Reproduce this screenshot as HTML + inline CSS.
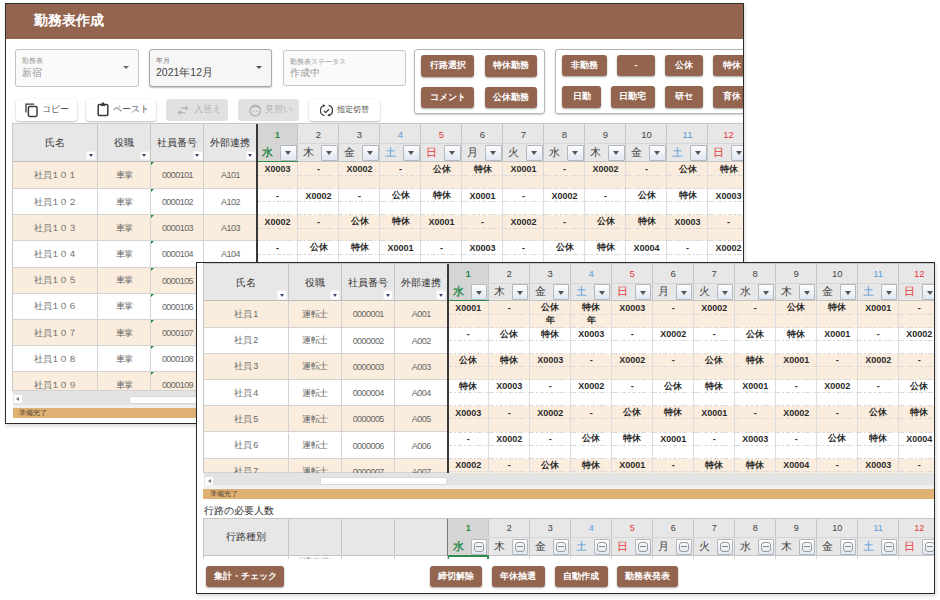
<!DOCTYPE html><html><head><meta charset="utf-8"><style>
html,body{margin:0;padding:0;background:#fff;width:940px;height:600px;overflow:hidden;font-family:"Liberation Sans",sans-serif;}
div{position:absolute;box-sizing:border-box;}
.tri{width:0;height:0;}
.win{overflow:hidden;background:#fff;border:1px solid #2b2b2b;}
</style></head><body>
<div class="win" style="left:5px;top:3px;width:739px;height:421px;box-shadow:1px 2px 4px rgba(0,0,0,.16);">
<div style="left:0.00px;top:0.00px;width:737.00px;height:34.50px;background:#93654f;"></div>
<div style="left:28.00px;top:4.70px;width:166.00px;height:23.00px;display:flex;align-items:center;white-space:nowrap;font-size:14.4px;font-weight:bold;color:#fff;">勤務表作成</div>
<div style="left:9.00px;top:45.00px;width:124.00px;height:37.50px;border:1px solid #c4c4c4;border-radius:3px;background:#fafafa;"></div>
<div style="left:16.00px;top:51.50px;width:117.00px;height:11.00px;display:flex;align-items:center;white-space:nowrap;font-size:7px;color:#999;">勤務表</div>
<div style="left:16.00px;top:61.00px;width:117.00px;height:15.00px;display:flex;align-items:center;white-space:nowrap;font-size:10px;color:#999;">新宿</div>
<div class="tri" style="left:116.50px;top:62.00px;border-left:3.50px solid transparent;border-right:3.50px solid transparent;border-top:3.5px solid #666"></div>
<div style="left:143.00px;top:45.00px;width:123.00px;height:37.50px;border:1px solid #a8a8a8;border-radius:3px;background:#f6f6f6;box-shadow:0 1px 1.5px rgba(0,0,0,.25);"></div>
<div style="left:150.00px;top:51.50px;width:116.00px;height:11.00px;display:flex;align-items:center;white-space:nowrap;font-size:7px;color:#777;">年月</div>
<div style="left:150.00px;top:61.00px;width:116.00px;height:15.00px;display:flex;align-items:center;white-space:nowrap;font-size:10.5px;color:#444;">2021年12月</div>
<div class="tri" style="left:249.50px;top:62.00px;border-left:3.50px solid transparent;border-right:3.50px solid transparent;border-top:3.5px solid #555"></div>
<div style="left:276.50px;top:45.50px;width:123.00px;height:36.50px;border:1px solid #c4c4c4;border-radius:3px;background:#fafafa;"></div>
<div style="left:283.50px;top:52.00px;width:116.00px;height:11.00px;display:flex;align-items:center;white-space:nowrap;font-size:7px;color:#999;">勤務表ステータス</div>
<div style="left:283.50px;top:61.50px;width:116.00px;height:15.00px;display:flex;align-items:center;white-space:nowrap;font-size:10px;color:#999;">作成中</div>
<div style="left:407.60px;top:45.00px;width:131.40px;height:65.20px;border:1px solid #b5b5b5;border-radius:3px;box-shadow:0 1px 2px rgba(0,0,0,.2);"></div>
<div style="left:548.80px;top:45.40px;width:245.20px;height:64.80px;border:1px solid #b5b5b5;border-radius:3px;box-shadow:0 1px 2px rgba(0,0,0,.2);"></div>
<div style="left:415.20px;top:51.20px;width:53.00px;height:21.60px;display:flex;align-items:center;justify-content:center;white-space:nowrap;background:#93654f;color:#fff;border-radius:3px;font-size:9px;font-weight:bold;box-shadow:0 1px 2px rgba(0,0,0,.35);">行路選択</div>
<div style="left:478.50px;top:51.20px;width:52.70px;height:21.60px;display:flex;align-items:center;justify-content:center;white-space:nowrap;background:#93654f;color:#fff;border-radius:3px;font-size:9px;font-weight:bold;box-shadow:0 1px 2px rgba(0,0,0,.35);">特休勤務</div>
<div style="left:415.20px;top:82.50px;width:53.00px;height:21.50px;display:flex;align-items:center;justify-content:center;white-space:nowrap;background:#93654f;color:#fff;border-radius:3px;font-size:9px;font-weight:bold;box-shadow:0 1px 2px rgba(0,0,0,.35);">コメント</div>
<div style="left:478.50px;top:82.50px;width:52.70px;height:21.50px;display:flex;align-items:center;justify-content:center;white-space:nowrap;background:#93654f;color:#fff;border-radius:3px;font-size:9px;font-weight:bold;box-shadow:0 1px 2px rgba(0,0,0,.35);">公休勤務</div>
<div style="left:556.40px;top:50.80px;width:44.80px;height:21.20px;display:flex;align-items:center;justify-content:center;white-space:nowrap;background:#93654f;color:#fff;border-radius:3px;font-size:9px;font-weight:bold;box-shadow:0 1px 2px rgba(0,0,0,.35);">非勤務</div>
<div style="left:611.00px;top:50.80px;width:38.10px;height:21.20px;display:flex;align-items:center;justify-content:center;white-space:nowrap;background:#93654f;color:#fff;border-radius:3px;font-size:9px;font-weight:bold;box-shadow:0 1px 2px rgba(0,0,0,.35);">-</div>
<div style="left:659.00px;top:50.80px;width:38.10px;height:21.20px;display:flex;align-items:center;justify-content:center;white-space:nowrap;background:#93654f;color:#fff;border-radius:3px;font-size:9px;font-weight:bold;box-shadow:0 1px 2px rgba(0,0,0,.35);">公休</div>
<div style="left:707.00px;top:50.80px;width:38.00px;height:21.20px;display:flex;align-items:center;justify-content:center;white-space:nowrap;background:#93654f;color:#fff;border-radius:3px;font-size:9px;font-weight:bold;box-shadow:0 1px 2px rgba(0,0,0,.35);">特休</div>
<div style="left:556.40px;top:81.80px;width:38.60px;height:21.80px;display:flex;align-items:center;justify-content:center;white-space:nowrap;background:#93654f;color:#fff;border-radius:3px;font-size:9px;font-weight:bold;box-shadow:0 1px 2px rgba(0,0,0,.35);">日勤</div>
<div style="left:604.90px;top:81.80px;width:44.20px;height:21.80px;display:flex;align-items:center;justify-content:center;white-space:nowrap;background:#93654f;color:#fff;border-radius:3px;font-size:9px;font-weight:bold;box-shadow:0 1px 2px rgba(0,0,0,.35);">日勤宅</div>
<div style="left:659.00px;top:81.80px;width:38.10px;height:21.80px;display:flex;align-items:center;justify-content:center;white-space:nowrap;background:#93654f;color:#fff;border-radius:3px;font-size:9px;font-weight:bold;box-shadow:0 1px 2px rgba(0,0,0,.35);">研セ</div>
<div style="left:707.00px;top:81.80px;width:38.00px;height:21.80px;display:flex;align-items:center;justify-content:center;white-space:nowrap;background:#93654f;color:#fff;border-radius:3px;font-size:9px;font-weight:bold;box-shadow:0 1px 2px rgba(0,0,0,.35);">育休</div>
<div style="left:9.50px;top:95.00px;width:61.50px;height:21.80px;background:#fff;border-radius:3px;box-shadow:0 1px 2px rgba(0,0,0,.25),0 0 1px rgba(0,0,0,.12);"></div>
<div style="left:18.70px;top:98.60px;line-height:0"><svg width="14" height="15" viewBox="0 0 14 15"><path d="M1 9.5V1.2H9.2" fill="none" stroke="#3a3a3a" stroke-width="1.3"/><rect x="3.4" y="3.6" width="8.6" height="9.8" rx="1.3" fill="none" stroke="#3a3a3a" stroke-width="1.5"/></svg></div>
<div style="left:36.00px;top:95.00px;width:35.00px;height:21.80px;display:flex;align-items:center;white-space:nowrap;font-size:9px;color:#505050;">コピー</div>
<div style="left:80.00px;top:95.00px;width:70.00px;height:21.80px;background:#fff;border-radius:3px;box-shadow:0 1px 2px rgba(0,0,0,.25),0 0 1px rgba(0,0,0,.12);"></div>
<div style="left:91.40px;top:98.30px;line-height:0"><svg width="13" height="15" viewBox="0 0 13 15"><rect x="1.2" y="2.4" width="9.6" height="11.2" rx="1.2" fill="none" stroke="#3a3a3a" stroke-width="1.5"/><path d="M3.8 1.8h4.4v2.2H3.8z" fill="#3a3a3a"/><circle cx="6" cy="1.4" r="1.1" fill="#3a3a3a"/></svg></div>
<div style="left:106.50px;top:95.00px;width:43.50px;height:21.80px;display:flex;align-items:center;white-space:nowrap;font-size:9px;color:#505050;">ペースト</div>
<div style="left:160.00px;top:95.00px;width:62.00px;height:21.80px;background:#e1e1e1;border-radius:3px;"></div>
<div style="left:171.00px;top:101.50px;line-height:0"><svg width="12" height="9" viewBox="0 0 12 9"><path d="M4 2.2h6.5M8.3 0.4l2.3 1.8-2.3 1.8M8 6.6H1.5M3.7 4.8L1.4 6.6l2.3 1.8" fill="none" stroke="#b3b3b3" stroke-width="1.3"/></svg></div>
<div style="left:187.50px;top:95.00px;width:34.50px;height:21.80px;display:flex;align-items:center;white-space:nowrap;font-size:9px;color:#b3b3b3;">入替え</div>
<div style="left:232.20px;top:95.00px;width:61.10px;height:21.80px;background:#e1e1e1;border-radius:3px;"></div>
<div style="left:242.50px;top:99.50px;line-height:0"><svg width="13" height="13" viewBox="0 0 13 13"><circle cx="6.3" cy="6.5" r="5.4" fill="none" stroke="#b3b3b3" stroke-width="1.3"/><path d="M1.3 5.2Q3 1 6.3 1.1Q9.8 1 11.3 5.2Q8.5 3.2 6 2.8Q3.5 3.6 1.3 5.2z" fill="#b3b3b3"/><circle cx="4.4" cy="7.3" r=".75" fill="#b3b3b3"/><circle cx="8.2" cy="7.3" r=".75" fill="#b3b3b3"/></svg></div>
<div style="left:258.50px;top:95.00px;width:34.80px;height:21.80px;display:flex;align-items:center;white-space:nowrap;font-size:9px;color:#b3b3b3;">見習い</div>
<div style="left:303.20px;top:95.00px;width:70.40px;height:21.80px;background:#fff;border-radius:3px;box-shadow:0 1px 2px rgba(0,0,0,.25),0 0 1px rgba(0,0,0,.12);"></div>
<div style="left:313.50px;top:99.50px;line-height:0"><svg width="13" height="13" viewBox="0 0 13 13"><path d="M4.2 1.6A5.1 5.1 0 0 0 4.6 11.6M8.6 1.4A5.1 5.1 0 0 1 8.2 11.4" fill="none" stroke="#3a3a3a" stroke-width="1.3"/><path d="M4 6.8l1.8 1.8 3.3-3.5" fill="none" stroke="#3a3a3a" stroke-width="1.3"/><path d="M2.6 0.2L5.6 1.4 3.2 3z" fill="#3a3a3a"/><path d="M10.2 12.6L7.2 11.5 9.6 9.9z" fill="#3a3a3a"/></svg></div>
<div style="left:330.50px;top:95.00px;width:43.10px;height:21.80px;display:flex;align-items:center;white-space:nowrap;font-size:8.2px;color:#505050;">指定切替</div>
<div style="left:7.00px;top:120.00px;width:84.50px;height:37.70px;background:#e7e7e7;border-right:1px solid #c6c6c6;border-bottom:1px solid #bdbdbd;box-sizing:border-box;"></div>
<div style="left:7.00px;top:122.00px;width:83.50px;height:34.70px;display:flex;align-items:center;justify-content:center;white-space:nowrap;font-size:10px;color:#333;">氏名</div>
<div style="left:80.00px;top:146.70px;width:10.00px;height:9.50px;background:#fff;border:1px solid #f0f0f0;"></div>
<div class="tri" style="left:82.50px;top:150.40px;border-left:2.50px solid transparent;border-right:2.50px solid transparent;border-top:3px solid #34466b"></div>
<div style="left:91.50px;top:120.00px;width:53.50px;height:37.70px;background:#e7e7e7;border-right:1px solid #c6c6c6;border-bottom:1px solid #bdbdbd;box-sizing:border-box;"></div>
<div style="left:91.50px;top:122.00px;width:52.50px;height:34.70px;display:flex;align-items:center;justify-content:center;white-space:nowrap;font-size:10px;color:#333;">役職</div>
<div style="left:133.50px;top:146.70px;width:10.00px;height:9.50px;background:#fff;border:1px solid #f0f0f0;"></div>
<div class="tri" style="left:136.00px;top:150.40px;border-left:2.50px solid transparent;border-right:2.50px solid transparent;border-top:3px solid #34466b"></div>
<div style="left:145.00px;top:120.00px;width:53.00px;height:37.70px;background:#e7e7e7;border-right:1px solid #c6c6c6;border-bottom:1px solid #bdbdbd;box-sizing:border-box;"></div>
<div style="left:145.00px;top:122.00px;width:52.00px;height:34.70px;display:flex;align-items:center;justify-content:center;white-space:nowrap;font-size:10px;color:#333;">社員番号</div>
<div style="left:186.50px;top:146.70px;width:10.00px;height:9.50px;background:#fff;border:1px solid #f0f0f0;"></div>
<div class="tri" style="left:189.00px;top:150.40px;border-left:2.50px solid transparent;border-right:2.50px solid transparent;border-top:3px solid #34466b"></div>
<div style="left:198.00px;top:120.00px;width:53.00px;height:37.70px;background:#e7e7e7;border-right:1px solid #c6c6c6;border-bottom:1px solid #bdbdbd;box-sizing:border-box;"></div>
<div style="left:198.00px;top:122.00px;width:52.00px;height:34.70px;display:flex;align-items:center;justify-content:center;white-space:nowrap;font-size:10px;color:#333;">外部連携</div>
<div style="left:239.50px;top:146.70px;width:10.00px;height:9.50px;background:#fff;border:1px solid #f0f0f0;"></div>
<div class="tri" style="left:242.00px;top:150.40px;border-left:2.50px solid transparent;border-right:2.50px solid transparent;border-top:3px solid #34466b"></div>
<div style="left:6.00px;top:120.00px;width:1.00px;height:267.00px;background:#c8c8c8;"></div>
<div style="left:6.00px;top:119.00px;width:1988.00px;height:1.00px;background:#c8c8c8;"></div>
<div style="left:251.00px;top:120.00px;width:41.00px;height:37.70px;background:#d5d5d5;border-right:1px solid #c6c6c6;border-bottom:1px solid #c4c4c4;box-sizing:border-box;"></div>
<div style="left:251.00px;top:139.00px;width:41.00px;height:1.00px;background:#d6d6d6;"></div>
<div style="left:251.00px;top:121.00px;width:41.00px;height:18.00px;display:flex;align-items:center;justify-content:center;white-space:nowrap;font-size:9.5px;color:#2f8a4e;font-weight:bold;">1</div>
<div style="left:256.00px;top:140.00px;width:17.00px;height:17.70px;display:flex;align-items:center;white-space:nowrap;font-size:10.5px;color:#2f8a4e;font-weight:bold;">水</div>
<div style="left:274.00px;top:140.50px;width:16.50px;height:16.20px;background:linear-gradient(#fdfdfe,#dfe7f1);border:1px solid #b4b8bf;box-sizing:border-box;border-radius:1px;"></div>
<div class="tri" style="left:278.80px;top:147.00px;border-left:3.50px solid transparent;border-right:3.50px solid transparent;border-top:4px solid #555"></div>
<div style="left:292.00px;top:120.00px;width:41.00px;height:37.70px;background:#e7e7e7;border-right:1px solid #c6c6c6;border-bottom:1px solid #c4c4c4;box-sizing:border-box;"></div>
<div style="left:292.00px;top:139.00px;width:41.00px;height:1.00px;background:#d6d6d6;"></div>
<div style="left:292.00px;top:121.00px;width:41.00px;height:18.00px;display:flex;align-items:center;justify-content:center;white-space:nowrap;font-size:9.5px;color:#444;font-weight:normal;">2</div>
<div style="left:297.00px;top:140.00px;width:17.00px;height:17.70px;display:flex;align-items:center;white-space:nowrap;font-size:10.5px;color:#444;font-weight:normal;">木</div>
<div style="left:315.00px;top:140.50px;width:16.50px;height:16.20px;background:linear-gradient(#fdfdfe,#dfe7f1);border:1px solid #b4b8bf;box-sizing:border-box;border-radius:1px;"></div>
<div class="tri" style="left:319.80px;top:147.00px;border-left:3.50px solid transparent;border-right:3.50px solid transparent;border-top:4px solid #555"></div>
<div style="left:333.00px;top:120.00px;width:41.00px;height:37.70px;background:#e7e7e7;border-right:1px solid #c6c6c6;border-bottom:1px solid #c4c4c4;box-sizing:border-box;"></div>
<div style="left:333.00px;top:139.00px;width:41.00px;height:1.00px;background:#d6d6d6;"></div>
<div style="left:333.00px;top:121.00px;width:41.00px;height:18.00px;display:flex;align-items:center;justify-content:center;white-space:nowrap;font-size:9.5px;color:#444;font-weight:normal;">3</div>
<div style="left:338.00px;top:140.00px;width:17.00px;height:17.70px;display:flex;align-items:center;white-space:nowrap;font-size:10.5px;color:#444;font-weight:normal;">金</div>
<div style="left:356.00px;top:140.50px;width:16.50px;height:16.20px;background:linear-gradient(#fdfdfe,#dfe7f1);border:1px solid #b4b8bf;box-sizing:border-box;border-radius:1px;"></div>
<div class="tri" style="left:360.80px;top:147.00px;border-left:3.50px solid transparent;border-right:3.50px solid transparent;border-top:4px solid #555"></div>
<div style="left:374.00px;top:120.00px;width:41.00px;height:37.70px;background:#e7e7e7;border-right:1px solid #c6c6c6;border-bottom:1px solid #c4c4c4;box-sizing:border-box;"></div>
<div style="left:374.00px;top:139.00px;width:41.00px;height:1.00px;background:#d6d6d6;"></div>
<div style="left:374.00px;top:121.00px;width:41.00px;height:18.00px;display:flex;align-items:center;justify-content:center;white-space:nowrap;font-size:9.5px;color:#5a9bd8;font-weight:normal;">4</div>
<div style="left:379.00px;top:140.00px;width:17.00px;height:17.70px;display:flex;align-items:center;white-space:nowrap;font-size:10.5px;color:#5a9bd8;font-weight:normal;">土</div>
<div style="left:397.00px;top:140.50px;width:16.50px;height:16.20px;background:linear-gradient(#fdfdfe,#dfe7f1);border:1px solid #b4b8bf;box-sizing:border-box;border-radius:1px;"></div>
<div class="tri" style="left:401.80px;top:147.00px;border-left:3.50px solid transparent;border-right:3.50px solid transparent;border-top:4px solid #555"></div>
<div style="left:415.00px;top:120.00px;width:41.00px;height:37.70px;background:#e7e7e7;border-right:1px solid #c6c6c6;border-bottom:1px solid #c4c4c4;box-sizing:border-box;"></div>
<div style="left:415.00px;top:139.00px;width:41.00px;height:1.00px;background:#d6d6d6;"></div>
<div style="left:415.00px;top:121.00px;width:41.00px;height:18.00px;display:flex;align-items:center;justify-content:center;white-space:nowrap;font-size:9.5px;color:#e8383d;font-weight:normal;">5</div>
<div style="left:420.00px;top:140.00px;width:17.00px;height:17.70px;display:flex;align-items:center;white-space:nowrap;font-size:10.5px;color:#e8383d;font-weight:normal;">日</div>
<div style="left:438.00px;top:140.50px;width:16.50px;height:16.20px;background:linear-gradient(#fdfdfe,#dfe7f1);border:1px solid #b4b8bf;box-sizing:border-box;border-radius:1px;"></div>
<div class="tri" style="left:442.80px;top:147.00px;border-left:3.50px solid transparent;border-right:3.50px solid transparent;border-top:4px solid #555"></div>
<div style="left:456.00px;top:120.00px;width:41.00px;height:37.70px;background:#e7e7e7;border-right:1px solid #c6c6c6;border-bottom:1px solid #c4c4c4;box-sizing:border-box;"></div>
<div style="left:456.00px;top:139.00px;width:41.00px;height:1.00px;background:#d6d6d6;"></div>
<div style="left:456.00px;top:121.00px;width:41.00px;height:18.00px;display:flex;align-items:center;justify-content:center;white-space:nowrap;font-size:9.5px;color:#444;font-weight:normal;">6</div>
<div style="left:461.00px;top:140.00px;width:17.00px;height:17.70px;display:flex;align-items:center;white-space:nowrap;font-size:10.5px;color:#444;font-weight:normal;">月</div>
<div style="left:479.00px;top:140.50px;width:16.50px;height:16.20px;background:linear-gradient(#fdfdfe,#dfe7f1);border:1px solid #b4b8bf;box-sizing:border-box;border-radius:1px;"></div>
<div class="tri" style="left:483.80px;top:147.00px;border-left:3.50px solid transparent;border-right:3.50px solid transparent;border-top:4px solid #555"></div>
<div style="left:497.00px;top:120.00px;width:41.00px;height:37.70px;background:#e7e7e7;border-right:1px solid #c6c6c6;border-bottom:1px solid #c4c4c4;box-sizing:border-box;"></div>
<div style="left:497.00px;top:139.00px;width:41.00px;height:1.00px;background:#d6d6d6;"></div>
<div style="left:497.00px;top:121.00px;width:41.00px;height:18.00px;display:flex;align-items:center;justify-content:center;white-space:nowrap;font-size:9.5px;color:#444;font-weight:normal;">7</div>
<div style="left:502.00px;top:140.00px;width:17.00px;height:17.70px;display:flex;align-items:center;white-space:nowrap;font-size:10.5px;color:#444;font-weight:normal;">火</div>
<div style="left:520.00px;top:140.50px;width:16.50px;height:16.20px;background:linear-gradient(#fdfdfe,#dfe7f1);border:1px solid #b4b8bf;box-sizing:border-box;border-radius:1px;"></div>
<div class="tri" style="left:524.80px;top:147.00px;border-left:3.50px solid transparent;border-right:3.50px solid transparent;border-top:4px solid #555"></div>
<div style="left:538.00px;top:120.00px;width:41.00px;height:37.70px;background:#e7e7e7;border-right:1px solid #c6c6c6;border-bottom:1px solid #c4c4c4;box-sizing:border-box;"></div>
<div style="left:538.00px;top:139.00px;width:41.00px;height:1.00px;background:#d6d6d6;"></div>
<div style="left:538.00px;top:121.00px;width:41.00px;height:18.00px;display:flex;align-items:center;justify-content:center;white-space:nowrap;font-size:9.5px;color:#444;font-weight:normal;">8</div>
<div style="left:543.00px;top:140.00px;width:17.00px;height:17.70px;display:flex;align-items:center;white-space:nowrap;font-size:10.5px;color:#444;font-weight:normal;">水</div>
<div style="left:561.00px;top:140.50px;width:16.50px;height:16.20px;background:linear-gradient(#fdfdfe,#dfe7f1);border:1px solid #b4b8bf;box-sizing:border-box;border-radius:1px;"></div>
<div class="tri" style="left:565.80px;top:147.00px;border-left:3.50px solid transparent;border-right:3.50px solid transparent;border-top:4px solid #555"></div>
<div style="left:579.00px;top:120.00px;width:41.00px;height:37.70px;background:#e7e7e7;border-right:1px solid #c6c6c6;border-bottom:1px solid #c4c4c4;box-sizing:border-box;"></div>
<div style="left:579.00px;top:139.00px;width:41.00px;height:1.00px;background:#d6d6d6;"></div>
<div style="left:579.00px;top:121.00px;width:41.00px;height:18.00px;display:flex;align-items:center;justify-content:center;white-space:nowrap;font-size:9.5px;color:#444;font-weight:normal;">9</div>
<div style="left:584.00px;top:140.00px;width:17.00px;height:17.70px;display:flex;align-items:center;white-space:nowrap;font-size:10.5px;color:#444;font-weight:normal;">木</div>
<div style="left:602.00px;top:140.50px;width:16.50px;height:16.20px;background:linear-gradient(#fdfdfe,#dfe7f1);border:1px solid #b4b8bf;box-sizing:border-box;border-radius:1px;"></div>
<div class="tri" style="left:606.80px;top:147.00px;border-left:3.50px solid transparent;border-right:3.50px solid transparent;border-top:4px solid #555"></div>
<div style="left:620.00px;top:120.00px;width:41.00px;height:37.70px;background:#e7e7e7;border-right:1px solid #c6c6c6;border-bottom:1px solid #c4c4c4;box-sizing:border-box;"></div>
<div style="left:620.00px;top:139.00px;width:41.00px;height:1.00px;background:#d6d6d6;"></div>
<div style="left:620.00px;top:121.00px;width:41.00px;height:18.00px;display:flex;align-items:center;justify-content:center;white-space:nowrap;font-size:9.5px;color:#444;font-weight:normal;">10</div>
<div style="left:625.00px;top:140.00px;width:17.00px;height:17.70px;display:flex;align-items:center;white-space:nowrap;font-size:10.5px;color:#444;font-weight:normal;">金</div>
<div style="left:643.00px;top:140.50px;width:16.50px;height:16.20px;background:linear-gradient(#fdfdfe,#dfe7f1);border:1px solid #b4b8bf;box-sizing:border-box;border-radius:1px;"></div>
<div class="tri" style="left:647.80px;top:147.00px;border-left:3.50px solid transparent;border-right:3.50px solid transparent;border-top:4px solid #555"></div>
<div style="left:661.00px;top:120.00px;width:41.00px;height:37.70px;background:#e7e7e7;border-right:1px solid #c6c6c6;border-bottom:1px solid #c4c4c4;box-sizing:border-box;"></div>
<div style="left:661.00px;top:139.00px;width:41.00px;height:1.00px;background:#d6d6d6;"></div>
<div style="left:661.00px;top:121.00px;width:41.00px;height:18.00px;display:flex;align-items:center;justify-content:center;white-space:nowrap;font-size:9.5px;color:#5a9bd8;font-weight:normal;">11</div>
<div style="left:666.00px;top:140.00px;width:17.00px;height:17.70px;display:flex;align-items:center;white-space:nowrap;font-size:10.5px;color:#5a9bd8;font-weight:normal;">土</div>
<div style="left:684.00px;top:140.50px;width:16.50px;height:16.20px;background:linear-gradient(#fdfdfe,#dfe7f1);border:1px solid #b4b8bf;box-sizing:border-box;border-radius:1px;"></div>
<div class="tri" style="left:688.80px;top:147.00px;border-left:3.50px solid transparent;border-right:3.50px solid transparent;border-top:4px solid #555"></div>
<div style="left:702.00px;top:120.00px;width:41.00px;height:37.70px;background:#e7e7e7;border-right:1px solid #c6c6c6;border-bottom:1px solid #c4c4c4;box-sizing:border-box;"></div>
<div style="left:702.00px;top:139.00px;width:41.00px;height:1.00px;background:#d6d6d6;"></div>
<div style="left:702.00px;top:121.00px;width:41.00px;height:18.00px;display:flex;align-items:center;justify-content:center;white-space:nowrap;font-size:9.5px;color:#e8383d;font-weight:normal;">12</div>
<div style="left:707.00px;top:140.00px;width:17.00px;height:17.70px;display:flex;align-items:center;white-space:nowrap;font-size:10.5px;color:#e8383d;font-weight:normal;">日</div>
<div style="left:725.00px;top:140.50px;width:16.50px;height:16.20px;background:linear-gradient(#fdfdfe,#dfe7f1);border:1px solid #b4b8bf;box-sizing:border-box;border-radius:1px;"></div>
<div class="tri" style="left:729.80px;top:147.00px;border-left:3.50px solid transparent;border-right:3.50px solid transparent;border-top:4px solid #555"></div>
<div style="left:743.00px;top:120.00px;width:41.00px;height:37.70px;background:#e7e7e7;border-right:1px solid #c6c6c6;border-bottom:1px solid #c4c4c4;box-sizing:border-box;"></div>
<div style="left:743.00px;top:139.00px;width:41.00px;height:1.00px;background:#d6d6d6;"></div>
<div style="left:743.00px;top:121.00px;width:41.00px;height:18.00px;display:flex;align-items:center;justify-content:center;white-space:nowrap;font-size:9.5px;color:#444;font-weight:normal;"></div>
<div style="left:766.00px;top:140.50px;width:16.50px;height:16.20px;background:linear-gradient(#fdfdfe,#dfe7f1);border:1px solid #b4b8bf;box-sizing:border-box;border-radius:1px;"></div>
<div class="tri" style="left:770.80px;top:147.00px;border-left:3.50px solid transparent;border-right:3.50px solid transparent;border-top:4px solid #555"></div>
<div style="left:251.00px;top:156.70px;width:41.00px;height:1.80px;background:#2f8a4e;"></div>
<div style="left:7.00px;top:157.70px;width:1987.00px;height:27.30px;background:#faeddd;"></div>
<div style="left:7.00px;top:157.70px;width:84.50px;height:27.30px;border-right:1px solid #d2d2d2;border-bottom:1px solid #d2d2d2;box-sizing:border-box;"></div>
<div style="left:7.00px;top:157.70px;width:84.50px;height:27.30px;display:flex;align-items:center;justify-content:center;white-space:nowrap;font-size:9px;letter-spacing:-0.55px;color:#666;">社員１０１</div>
<div style="left:91.50px;top:157.70px;width:53.50px;height:27.30px;border-right:1px solid #d2d2d2;border-bottom:1px solid #d2d2d2;box-sizing:border-box;"></div>
<div style="left:91.50px;top:157.70px;width:53.50px;height:27.30px;display:flex;align-items:center;justify-content:center;white-space:nowrap;font-size:9px;letter-spacing:-0.55px;color:#666;">車掌</div>
<div style="left:145.00px;top:157.70px;width:53.00px;height:27.30px;border-right:1px solid #d2d2d2;border-bottom:1px solid #d2d2d2;box-sizing:border-box;"></div>
<div style="left:145.00px;top:157.70px;width:53.00px;height:27.30px;display:flex;align-items:center;justify-content:center;white-space:nowrap;font-size:9px;letter-spacing:-0.55px;color:#666;">0000101</div>
<div style="left:198.00px;top:157.70px;width:53.00px;height:27.30px;border-right:1px solid #d2d2d2;border-bottom:1px solid #d2d2d2;box-sizing:border-box;"></div>
<div style="left:198.00px;top:157.70px;width:53.00px;height:27.30px;display:flex;align-items:center;justify-content:center;white-space:nowrap;font-size:9px;letter-spacing:-0.55px;color:#666;">A101</div>
<div class="tri" style="left:145.00px;top:157.70px;border-top:3px solid #1e8a3a;border-right:3px solid transparent"></div>
<div style="left:251.00px;top:157.70px;width:41.00px;height:27.30px;border-right:1px solid #dcdcdc;box-sizing:border-box;"></div>
<div style="left:251.00px;top:171.10px;width:41.00px;height:1.00px;background:repeating-linear-gradient(90deg,#d9d9d9 0 4.5px,transparent 4.5px 6.5px,#d9d9d9 6.5px 8px,transparent 8px 9.8px);"></div>
<div style="left:251.00px;top:184.00px;width:41.00px;height:1.00px;background:repeating-linear-gradient(90deg,#d9d9d9 0 4.5px,transparent 4.5px 6.5px,#d9d9d9 6.5px 8px,transparent 8px 9.8px);"></div>
<div style="left:251.00px;top:160.30px;width:41.00px;height:10.00px;display:flex;align-items:center;justify-content:center;white-space:nowrap;font-size:9px;font-weight:bold;color:#2a2a2a;">X0003</div>
<div style="left:292.00px;top:157.70px;width:41.00px;height:27.30px;border-right:1px solid #dcdcdc;box-sizing:border-box;"></div>
<div style="left:292.00px;top:171.10px;width:41.00px;height:1.00px;background:repeating-linear-gradient(90deg,#d9d9d9 0 4.5px,transparent 4.5px 6.5px,#d9d9d9 6.5px 8px,transparent 8px 9.8px);"></div>
<div style="left:292.00px;top:184.00px;width:41.00px;height:1.00px;background:repeating-linear-gradient(90deg,#d9d9d9 0 4.5px,transparent 4.5px 6.5px,#d9d9d9 6.5px 8px,transparent 8px 9.8px);"></div>
<div style="left:292.00px;top:160.30px;width:41.00px;height:10.00px;display:flex;align-items:center;justify-content:center;white-space:nowrap;font-size:9px;font-weight:bold;color:#2a2a2a;">-</div>
<div style="left:333.00px;top:157.70px;width:41.00px;height:27.30px;border-right:1px solid #dcdcdc;box-sizing:border-box;"></div>
<div style="left:333.00px;top:171.10px;width:41.00px;height:1.00px;background:repeating-linear-gradient(90deg,#d9d9d9 0 4.5px,transparent 4.5px 6.5px,#d9d9d9 6.5px 8px,transparent 8px 9.8px);"></div>
<div style="left:333.00px;top:184.00px;width:41.00px;height:1.00px;background:repeating-linear-gradient(90deg,#d9d9d9 0 4.5px,transparent 4.5px 6.5px,#d9d9d9 6.5px 8px,transparent 8px 9.8px);"></div>
<div style="left:333.00px;top:160.30px;width:41.00px;height:10.00px;display:flex;align-items:center;justify-content:center;white-space:nowrap;font-size:9px;font-weight:bold;color:#2a2a2a;">X0002</div>
<div style="left:374.00px;top:157.70px;width:41.00px;height:27.30px;border-right:1px solid #dcdcdc;box-sizing:border-box;"></div>
<div style="left:374.00px;top:171.10px;width:41.00px;height:1.00px;background:repeating-linear-gradient(90deg,#d9d9d9 0 4.5px,transparent 4.5px 6.5px,#d9d9d9 6.5px 8px,transparent 8px 9.8px);"></div>
<div style="left:374.00px;top:184.00px;width:41.00px;height:1.00px;background:repeating-linear-gradient(90deg,#d9d9d9 0 4.5px,transparent 4.5px 6.5px,#d9d9d9 6.5px 8px,transparent 8px 9.8px);"></div>
<div style="left:374.00px;top:160.30px;width:41.00px;height:10.00px;display:flex;align-items:center;justify-content:center;white-space:nowrap;font-size:9px;font-weight:bold;color:#2a2a2a;">-</div>
<div style="left:415.00px;top:157.70px;width:41.00px;height:27.30px;border-right:1px solid #dcdcdc;box-sizing:border-box;"></div>
<div style="left:415.00px;top:171.10px;width:41.00px;height:1.00px;background:repeating-linear-gradient(90deg,#d9d9d9 0 4.5px,transparent 4.5px 6.5px,#d9d9d9 6.5px 8px,transparent 8px 9.8px);"></div>
<div style="left:415.00px;top:184.00px;width:41.00px;height:1.00px;background:repeating-linear-gradient(90deg,#d9d9d9 0 4.5px,transparent 4.5px 6.5px,#d9d9d9 6.5px 8px,transparent 8px 9.8px);"></div>
<div style="left:415.00px;top:160.30px;width:41.00px;height:10.00px;display:flex;align-items:center;justify-content:center;white-space:nowrap;font-size:9px;font-weight:bold;color:#2a2a2a;">公休</div>
<div style="left:456.00px;top:157.70px;width:41.00px;height:27.30px;border-right:1px solid #dcdcdc;box-sizing:border-box;"></div>
<div style="left:456.00px;top:171.10px;width:41.00px;height:1.00px;background:repeating-linear-gradient(90deg,#d9d9d9 0 4.5px,transparent 4.5px 6.5px,#d9d9d9 6.5px 8px,transparent 8px 9.8px);"></div>
<div style="left:456.00px;top:184.00px;width:41.00px;height:1.00px;background:repeating-linear-gradient(90deg,#d9d9d9 0 4.5px,transparent 4.5px 6.5px,#d9d9d9 6.5px 8px,transparent 8px 9.8px);"></div>
<div style="left:456.00px;top:160.30px;width:41.00px;height:10.00px;display:flex;align-items:center;justify-content:center;white-space:nowrap;font-size:9px;font-weight:bold;color:#2a2a2a;">特休</div>
<div style="left:497.00px;top:157.70px;width:41.00px;height:27.30px;border-right:1px solid #dcdcdc;box-sizing:border-box;"></div>
<div style="left:497.00px;top:171.10px;width:41.00px;height:1.00px;background:repeating-linear-gradient(90deg,#d9d9d9 0 4.5px,transparent 4.5px 6.5px,#d9d9d9 6.5px 8px,transparent 8px 9.8px);"></div>
<div style="left:497.00px;top:184.00px;width:41.00px;height:1.00px;background:repeating-linear-gradient(90deg,#d9d9d9 0 4.5px,transparent 4.5px 6.5px,#d9d9d9 6.5px 8px,transparent 8px 9.8px);"></div>
<div style="left:497.00px;top:160.30px;width:41.00px;height:10.00px;display:flex;align-items:center;justify-content:center;white-space:nowrap;font-size:9px;font-weight:bold;color:#2a2a2a;">X0001</div>
<div style="left:538.00px;top:157.70px;width:41.00px;height:27.30px;border-right:1px solid #dcdcdc;box-sizing:border-box;"></div>
<div style="left:538.00px;top:171.10px;width:41.00px;height:1.00px;background:repeating-linear-gradient(90deg,#d9d9d9 0 4.5px,transparent 4.5px 6.5px,#d9d9d9 6.5px 8px,transparent 8px 9.8px);"></div>
<div style="left:538.00px;top:184.00px;width:41.00px;height:1.00px;background:repeating-linear-gradient(90deg,#d9d9d9 0 4.5px,transparent 4.5px 6.5px,#d9d9d9 6.5px 8px,transparent 8px 9.8px);"></div>
<div style="left:538.00px;top:160.30px;width:41.00px;height:10.00px;display:flex;align-items:center;justify-content:center;white-space:nowrap;font-size:9px;font-weight:bold;color:#2a2a2a;">-</div>
<div style="left:579.00px;top:157.70px;width:41.00px;height:27.30px;border-right:1px solid #dcdcdc;box-sizing:border-box;"></div>
<div style="left:579.00px;top:171.10px;width:41.00px;height:1.00px;background:repeating-linear-gradient(90deg,#d9d9d9 0 4.5px,transparent 4.5px 6.5px,#d9d9d9 6.5px 8px,transparent 8px 9.8px);"></div>
<div style="left:579.00px;top:184.00px;width:41.00px;height:1.00px;background:repeating-linear-gradient(90deg,#d9d9d9 0 4.5px,transparent 4.5px 6.5px,#d9d9d9 6.5px 8px,transparent 8px 9.8px);"></div>
<div style="left:579.00px;top:160.30px;width:41.00px;height:10.00px;display:flex;align-items:center;justify-content:center;white-space:nowrap;font-size:9px;font-weight:bold;color:#2a2a2a;">X0002</div>
<div style="left:620.00px;top:157.70px;width:41.00px;height:27.30px;border-right:1px solid #dcdcdc;box-sizing:border-box;"></div>
<div style="left:620.00px;top:171.10px;width:41.00px;height:1.00px;background:repeating-linear-gradient(90deg,#d9d9d9 0 4.5px,transparent 4.5px 6.5px,#d9d9d9 6.5px 8px,transparent 8px 9.8px);"></div>
<div style="left:620.00px;top:184.00px;width:41.00px;height:1.00px;background:repeating-linear-gradient(90deg,#d9d9d9 0 4.5px,transparent 4.5px 6.5px,#d9d9d9 6.5px 8px,transparent 8px 9.8px);"></div>
<div style="left:620.00px;top:160.30px;width:41.00px;height:10.00px;display:flex;align-items:center;justify-content:center;white-space:nowrap;font-size:9px;font-weight:bold;color:#2a2a2a;">-</div>
<div style="left:661.00px;top:157.70px;width:41.00px;height:27.30px;border-right:1px solid #dcdcdc;box-sizing:border-box;"></div>
<div style="left:661.00px;top:171.10px;width:41.00px;height:1.00px;background:repeating-linear-gradient(90deg,#d9d9d9 0 4.5px,transparent 4.5px 6.5px,#d9d9d9 6.5px 8px,transparent 8px 9.8px);"></div>
<div style="left:661.00px;top:184.00px;width:41.00px;height:1.00px;background:repeating-linear-gradient(90deg,#d9d9d9 0 4.5px,transparent 4.5px 6.5px,#d9d9d9 6.5px 8px,transparent 8px 9.8px);"></div>
<div style="left:661.00px;top:160.30px;width:41.00px;height:10.00px;display:flex;align-items:center;justify-content:center;white-space:nowrap;font-size:9px;font-weight:bold;color:#2a2a2a;">公休</div>
<div style="left:702.00px;top:157.70px;width:41.00px;height:27.30px;border-right:1px solid #dcdcdc;box-sizing:border-box;"></div>
<div style="left:702.00px;top:171.10px;width:41.00px;height:1.00px;background:repeating-linear-gradient(90deg,#d9d9d9 0 4.5px,transparent 4.5px 6.5px,#d9d9d9 6.5px 8px,transparent 8px 9.8px);"></div>
<div style="left:702.00px;top:184.00px;width:41.00px;height:1.00px;background:repeating-linear-gradient(90deg,#d9d9d9 0 4.5px,transparent 4.5px 6.5px,#d9d9d9 6.5px 8px,transparent 8px 9.8px);"></div>
<div style="left:702.00px;top:160.30px;width:41.00px;height:10.00px;display:flex;align-items:center;justify-content:center;white-space:nowrap;font-size:9px;font-weight:bold;color:#2a2a2a;">特休</div>
<div style="left:743.00px;top:157.70px;width:41.00px;height:27.30px;border-right:1px solid #dcdcdc;box-sizing:border-box;"></div>
<div style="left:743.00px;top:171.10px;width:41.00px;height:1.00px;background:repeating-linear-gradient(90deg,#d9d9d9 0 4.5px,transparent 4.5px 6.5px,#d9d9d9 6.5px 8px,transparent 8px 9.8px);"></div>
<div style="left:743.00px;top:184.00px;width:41.00px;height:1.00px;background:repeating-linear-gradient(90deg,#d9d9d9 0 4.5px,transparent 4.5px 6.5px,#d9d9d9 6.5px 8px,transparent 8px 9.8px);"></div>
<div style="left:7.00px;top:185.00px;width:1987.00px;height:26.20px;background:#fff;"></div>
<div style="left:7.00px;top:185.00px;width:84.50px;height:26.20px;border-right:1px solid #d2d2d2;border-bottom:1px solid #d2d2d2;box-sizing:border-box;"></div>
<div style="left:7.00px;top:185.00px;width:84.50px;height:26.20px;display:flex;align-items:center;justify-content:center;white-space:nowrap;font-size:9px;letter-spacing:-0.55px;color:#666;">社員１０２</div>
<div style="left:91.50px;top:185.00px;width:53.50px;height:26.20px;border-right:1px solid #d2d2d2;border-bottom:1px solid #d2d2d2;box-sizing:border-box;"></div>
<div style="left:91.50px;top:185.00px;width:53.50px;height:26.20px;display:flex;align-items:center;justify-content:center;white-space:nowrap;font-size:9px;letter-spacing:-0.55px;color:#666;">車掌</div>
<div style="left:145.00px;top:185.00px;width:53.00px;height:26.20px;border-right:1px solid #d2d2d2;border-bottom:1px solid #d2d2d2;box-sizing:border-box;"></div>
<div style="left:145.00px;top:185.00px;width:53.00px;height:26.20px;display:flex;align-items:center;justify-content:center;white-space:nowrap;font-size:9px;letter-spacing:-0.55px;color:#666;">0000102</div>
<div style="left:198.00px;top:185.00px;width:53.00px;height:26.20px;border-right:1px solid #d2d2d2;border-bottom:1px solid #d2d2d2;box-sizing:border-box;"></div>
<div style="left:198.00px;top:185.00px;width:53.00px;height:26.20px;display:flex;align-items:center;justify-content:center;white-space:nowrap;font-size:9px;letter-spacing:-0.55px;color:#666;">A102</div>
<div class="tri" style="left:145.00px;top:185.00px;border-top:3px solid #1e8a3a;border-right:3px solid transparent"></div>
<div style="left:251.00px;top:185.00px;width:41.00px;height:26.20px;border-right:1px solid #dcdcdc;box-sizing:border-box;"></div>
<div style="left:251.00px;top:197.30px;width:41.00px;height:1.00px;background:repeating-linear-gradient(90deg,#d9d9d9 0 4.5px,transparent 4.5px 6.5px,#d9d9d9 6.5px 8px,transparent 8px 9.8px);"></div>
<div style="left:251.00px;top:210.20px;width:41.00px;height:1.00px;background:repeating-linear-gradient(90deg,#d9d9d9 0 4.5px,transparent 4.5px 6.5px,#d9d9d9 6.5px 8px,transparent 8px 9.8px);"></div>
<div style="left:251.00px;top:186.50px;width:41.00px;height:10.00px;display:flex;align-items:center;justify-content:center;white-space:nowrap;font-size:9px;font-weight:bold;color:#2a2a2a;">-</div>
<div style="left:292.00px;top:185.00px;width:41.00px;height:26.20px;border-right:1px solid #dcdcdc;box-sizing:border-box;"></div>
<div style="left:292.00px;top:197.30px;width:41.00px;height:1.00px;background:repeating-linear-gradient(90deg,#d9d9d9 0 4.5px,transparent 4.5px 6.5px,#d9d9d9 6.5px 8px,transparent 8px 9.8px);"></div>
<div style="left:292.00px;top:210.20px;width:41.00px;height:1.00px;background:repeating-linear-gradient(90deg,#d9d9d9 0 4.5px,transparent 4.5px 6.5px,#d9d9d9 6.5px 8px,transparent 8px 9.8px);"></div>
<div style="left:292.00px;top:186.50px;width:41.00px;height:10.00px;display:flex;align-items:center;justify-content:center;white-space:nowrap;font-size:9px;font-weight:bold;color:#2a2a2a;">X0002</div>
<div style="left:333.00px;top:185.00px;width:41.00px;height:26.20px;border-right:1px solid #dcdcdc;box-sizing:border-box;"></div>
<div style="left:333.00px;top:197.30px;width:41.00px;height:1.00px;background:repeating-linear-gradient(90deg,#d9d9d9 0 4.5px,transparent 4.5px 6.5px,#d9d9d9 6.5px 8px,transparent 8px 9.8px);"></div>
<div style="left:333.00px;top:210.20px;width:41.00px;height:1.00px;background:repeating-linear-gradient(90deg,#d9d9d9 0 4.5px,transparent 4.5px 6.5px,#d9d9d9 6.5px 8px,transparent 8px 9.8px);"></div>
<div style="left:333.00px;top:186.50px;width:41.00px;height:10.00px;display:flex;align-items:center;justify-content:center;white-space:nowrap;font-size:9px;font-weight:bold;color:#2a2a2a;">-</div>
<div style="left:374.00px;top:185.00px;width:41.00px;height:26.20px;border-right:1px solid #dcdcdc;box-sizing:border-box;"></div>
<div style="left:374.00px;top:197.30px;width:41.00px;height:1.00px;background:repeating-linear-gradient(90deg,#d9d9d9 0 4.5px,transparent 4.5px 6.5px,#d9d9d9 6.5px 8px,transparent 8px 9.8px);"></div>
<div style="left:374.00px;top:210.20px;width:41.00px;height:1.00px;background:repeating-linear-gradient(90deg,#d9d9d9 0 4.5px,transparent 4.5px 6.5px,#d9d9d9 6.5px 8px,transparent 8px 9.8px);"></div>
<div style="left:374.00px;top:186.50px;width:41.00px;height:10.00px;display:flex;align-items:center;justify-content:center;white-space:nowrap;font-size:9px;font-weight:bold;color:#2a2a2a;">公休</div>
<div style="left:415.00px;top:185.00px;width:41.00px;height:26.20px;border-right:1px solid #dcdcdc;box-sizing:border-box;"></div>
<div style="left:415.00px;top:197.30px;width:41.00px;height:1.00px;background:repeating-linear-gradient(90deg,#d9d9d9 0 4.5px,transparent 4.5px 6.5px,#d9d9d9 6.5px 8px,transparent 8px 9.8px);"></div>
<div style="left:415.00px;top:210.20px;width:41.00px;height:1.00px;background:repeating-linear-gradient(90deg,#d9d9d9 0 4.5px,transparent 4.5px 6.5px,#d9d9d9 6.5px 8px,transparent 8px 9.8px);"></div>
<div style="left:415.00px;top:186.50px;width:41.00px;height:10.00px;display:flex;align-items:center;justify-content:center;white-space:nowrap;font-size:9px;font-weight:bold;color:#2a2a2a;">特休</div>
<div style="left:456.00px;top:185.00px;width:41.00px;height:26.20px;border-right:1px solid #dcdcdc;box-sizing:border-box;"></div>
<div style="left:456.00px;top:197.30px;width:41.00px;height:1.00px;background:repeating-linear-gradient(90deg,#d9d9d9 0 4.5px,transparent 4.5px 6.5px,#d9d9d9 6.5px 8px,transparent 8px 9.8px);"></div>
<div style="left:456.00px;top:210.20px;width:41.00px;height:1.00px;background:repeating-linear-gradient(90deg,#d9d9d9 0 4.5px,transparent 4.5px 6.5px,#d9d9d9 6.5px 8px,transparent 8px 9.8px);"></div>
<div style="left:456.00px;top:186.50px;width:41.00px;height:10.00px;display:flex;align-items:center;justify-content:center;white-space:nowrap;font-size:9px;font-weight:bold;color:#2a2a2a;">X0001</div>
<div style="left:497.00px;top:185.00px;width:41.00px;height:26.20px;border-right:1px solid #dcdcdc;box-sizing:border-box;"></div>
<div style="left:497.00px;top:197.30px;width:41.00px;height:1.00px;background:repeating-linear-gradient(90deg,#d9d9d9 0 4.5px,transparent 4.5px 6.5px,#d9d9d9 6.5px 8px,transparent 8px 9.8px);"></div>
<div style="left:497.00px;top:210.20px;width:41.00px;height:1.00px;background:repeating-linear-gradient(90deg,#d9d9d9 0 4.5px,transparent 4.5px 6.5px,#d9d9d9 6.5px 8px,transparent 8px 9.8px);"></div>
<div style="left:497.00px;top:186.50px;width:41.00px;height:10.00px;display:flex;align-items:center;justify-content:center;white-space:nowrap;font-size:9px;font-weight:bold;color:#2a2a2a;">-</div>
<div style="left:538.00px;top:185.00px;width:41.00px;height:26.20px;border-right:1px solid #dcdcdc;box-sizing:border-box;"></div>
<div style="left:538.00px;top:197.30px;width:41.00px;height:1.00px;background:repeating-linear-gradient(90deg,#d9d9d9 0 4.5px,transparent 4.5px 6.5px,#d9d9d9 6.5px 8px,transparent 8px 9.8px);"></div>
<div style="left:538.00px;top:210.20px;width:41.00px;height:1.00px;background:repeating-linear-gradient(90deg,#d9d9d9 0 4.5px,transparent 4.5px 6.5px,#d9d9d9 6.5px 8px,transparent 8px 9.8px);"></div>
<div style="left:538.00px;top:186.50px;width:41.00px;height:10.00px;display:flex;align-items:center;justify-content:center;white-space:nowrap;font-size:9px;font-weight:bold;color:#2a2a2a;">X0002</div>
<div style="left:579.00px;top:185.00px;width:41.00px;height:26.20px;border-right:1px solid #dcdcdc;box-sizing:border-box;"></div>
<div style="left:579.00px;top:197.30px;width:41.00px;height:1.00px;background:repeating-linear-gradient(90deg,#d9d9d9 0 4.5px,transparent 4.5px 6.5px,#d9d9d9 6.5px 8px,transparent 8px 9.8px);"></div>
<div style="left:579.00px;top:210.20px;width:41.00px;height:1.00px;background:repeating-linear-gradient(90deg,#d9d9d9 0 4.5px,transparent 4.5px 6.5px,#d9d9d9 6.5px 8px,transparent 8px 9.8px);"></div>
<div style="left:579.00px;top:186.50px;width:41.00px;height:10.00px;display:flex;align-items:center;justify-content:center;white-space:nowrap;font-size:9px;font-weight:bold;color:#2a2a2a;">-</div>
<div style="left:620.00px;top:185.00px;width:41.00px;height:26.20px;border-right:1px solid #dcdcdc;box-sizing:border-box;"></div>
<div style="left:620.00px;top:197.30px;width:41.00px;height:1.00px;background:repeating-linear-gradient(90deg,#d9d9d9 0 4.5px,transparent 4.5px 6.5px,#d9d9d9 6.5px 8px,transparent 8px 9.8px);"></div>
<div style="left:620.00px;top:210.20px;width:41.00px;height:1.00px;background:repeating-linear-gradient(90deg,#d9d9d9 0 4.5px,transparent 4.5px 6.5px,#d9d9d9 6.5px 8px,transparent 8px 9.8px);"></div>
<div style="left:620.00px;top:186.50px;width:41.00px;height:10.00px;display:flex;align-items:center;justify-content:center;white-space:nowrap;font-size:9px;font-weight:bold;color:#2a2a2a;">公休</div>
<div style="left:661.00px;top:185.00px;width:41.00px;height:26.20px;border-right:1px solid #dcdcdc;box-sizing:border-box;"></div>
<div style="left:661.00px;top:197.30px;width:41.00px;height:1.00px;background:repeating-linear-gradient(90deg,#d9d9d9 0 4.5px,transparent 4.5px 6.5px,#d9d9d9 6.5px 8px,transparent 8px 9.8px);"></div>
<div style="left:661.00px;top:210.20px;width:41.00px;height:1.00px;background:repeating-linear-gradient(90deg,#d9d9d9 0 4.5px,transparent 4.5px 6.5px,#d9d9d9 6.5px 8px,transparent 8px 9.8px);"></div>
<div style="left:661.00px;top:186.50px;width:41.00px;height:10.00px;display:flex;align-items:center;justify-content:center;white-space:nowrap;font-size:9px;font-weight:bold;color:#2a2a2a;">特休</div>
<div style="left:702.00px;top:185.00px;width:41.00px;height:26.20px;border-right:1px solid #dcdcdc;box-sizing:border-box;"></div>
<div style="left:702.00px;top:197.30px;width:41.00px;height:1.00px;background:repeating-linear-gradient(90deg,#d9d9d9 0 4.5px,transparent 4.5px 6.5px,#d9d9d9 6.5px 8px,transparent 8px 9.8px);"></div>
<div style="left:702.00px;top:210.20px;width:41.00px;height:1.00px;background:repeating-linear-gradient(90deg,#d9d9d9 0 4.5px,transparent 4.5px 6.5px,#d9d9d9 6.5px 8px,transparent 8px 9.8px);"></div>
<div style="left:702.00px;top:186.50px;width:41.00px;height:10.00px;display:flex;align-items:center;justify-content:center;white-space:nowrap;font-size:9px;font-weight:bold;color:#2a2a2a;">X0003</div>
<div style="left:743.00px;top:185.00px;width:41.00px;height:26.20px;border-right:1px solid #dcdcdc;box-sizing:border-box;"></div>
<div style="left:743.00px;top:197.30px;width:41.00px;height:1.00px;background:repeating-linear-gradient(90deg,#d9d9d9 0 4.5px,transparent 4.5px 6.5px,#d9d9d9 6.5px 8px,transparent 8px 9.8px);"></div>
<div style="left:743.00px;top:210.20px;width:41.00px;height:1.00px;background:repeating-linear-gradient(90deg,#d9d9d9 0 4.5px,transparent 4.5px 6.5px,#d9d9d9 6.5px 8px,transparent 8px 9.8px);"></div>
<div style="left:7.00px;top:211.20px;width:1987.00px;height:26.20px;background:#faeddd;"></div>
<div style="left:7.00px;top:211.20px;width:84.50px;height:26.20px;border-right:1px solid #d2d2d2;border-bottom:1px solid #d2d2d2;box-sizing:border-box;"></div>
<div style="left:7.00px;top:211.20px;width:84.50px;height:26.20px;display:flex;align-items:center;justify-content:center;white-space:nowrap;font-size:9px;letter-spacing:-0.55px;color:#666;">社員１０３</div>
<div style="left:91.50px;top:211.20px;width:53.50px;height:26.20px;border-right:1px solid #d2d2d2;border-bottom:1px solid #d2d2d2;box-sizing:border-box;"></div>
<div style="left:91.50px;top:211.20px;width:53.50px;height:26.20px;display:flex;align-items:center;justify-content:center;white-space:nowrap;font-size:9px;letter-spacing:-0.55px;color:#666;">車掌</div>
<div style="left:145.00px;top:211.20px;width:53.00px;height:26.20px;border-right:1px solid #d2d2d2;border-bottom:1px solid #d2d2d2;box-sizing:border-box;"></div>
<div style="left:145.00px;top:211.20px;width:53.00px;height:26.20px;display:flex;align-items:center;justify-content:center;white-space:nowrap;font-size:9px;letter-spacing:-0.55px;color:#666;">0000103</div>
<div style="left:198.00px;top:211.20px;width:53.00px;height:26.20px;border-right:1px solid #d2d2d2;border-bottom:1px solid #d2d2d2;box-sizing:border-box;"></div>
<div style="left:198.00px;top:211.20px;width:53.00px;height:26.20px;display:flex;align-items:center;justify-content:center;white-space:nowrap;font-size:9px;letter-spacing:-0.55px;color:#666;">A103</div>
<div class="tri" style="left:145.00px;top:211.20px;border-top:3px solid #1e8a3a;border-right:3px solid transparent"></div>
<div style="left:251.00px;top:211.20px;width:41.00px;height:26.20px;border-right:1px solid #dcdcdc;box-sizing:border-box;"></div>
<div style="left:251.00px;top:223.50px;width:41.00px;height:1.00px;background:repeating-linear-gradient(90deg,#d9d9d9 0 4.5px,transparent 4.5px 6.5px,#d9d9d9 6.5px 8px,transparent 8px 9.8px);"></div>
<div style="left:251.00px;top:236.40px;width:41.00px;height:1.00px;background:repeating-linear-gradient(90deg,#d9d9d9 0 4.5px,transparent 4.5px 6.5px,#d9d9d9 6.5px 8px,transparent 8px 9.8px);"></div>
<div style="left:251.00px;top:212.70px;width:41.00px;height:10.00px;display:flex;align-items:center;justify-content:center;white-space:nowrap;font-size:9px;font-weight:bold;color:#2a2a2a;">X0002</div>
<div style="left:292.00px;top:211.20px;width:41.00px;height:26.20px;border-right:1px solid #dcdcdc;box-sizing:border-box;"></div>
<div style="left:292.00px;top:223.50px;width:41.00px;height:1.00px;background:repeating-linear-gradient(90deg,#d9d9d9 0 4.5px,transparent 4.5px 6.5px,#d9d9d9 6.5px 8px,transparent 8px 9.8px);"></div>
<div style="left:292.00px;top:236.40px;width:41.00px;height:1.00px;background:repeating-linear-gradient(90deg,#d9d9d9 0 4.5px,transparent 4.5px 6.5px,#d9d9d9 6.5px 8px,transparent 8px 9.8px);"></div>
<div style="left:292.00px;top:212.70px;width:41.00px;height:10.00px;display:flex;align-items:center;justify-content:center;white-space:nowrap;font-size:9px;font-weight:bold;color:#2a2a2a;">-</div>
<div style="left:333.00px;top:211.20px;width:41.00px;height:26.20px;border-right:1px solid #dcdcdc;box-sizing:border-box;"></div>
<div style="left:333.00px;top:223.50px;width:41.00px;height:1.00px;background:repeating-linear-gradient(90deg,#d9d9d9 0 4.5px,transparent 4.5px 6.5px,#d9d9d9 6.5px 8px,transparent 8px 9.8px);"></div>
<div style="left:333.00px;top:236.40px;width:41.00px;height:1.00px;background:repeating-linear-gradient(90deg,#d9d9d9 0 4.5px,transparent 4.5px 6.5px,#d9d9d9 6.5px 8px,transparent 8px 9.8px);"></div>
<div style="left:333.00px;top:212.70px;width:41.00px;height:10.00px;display:flex;align-items:center;justify-content:center;white-space:nowrap;font-size:9px;font-weight:bold;color:#2a2a2a;">公休</div>
<div style="left:374.00px;top:211.20px;width:41.00px;height:26.20px;border-right:1px solid #dcdcdc;box-sizing:border-box;"></div>
<div style="left:374.00px;top:223.50px;width:41.00px;height:1.00px;background:repeating-linear-gradient(90deg,#d9d9d9 0 4.5px,transparent 4.5px 6.5px,#d9d9d9 6.5px 8px,transparent 8px 9.8px);"></div>
<div style="left:374.00px;top:236.40px;width:41.00px;height:1.00px;background:repeating-linear-gradient(90deg,#d9d9d9 0 4.5px,transparent 4.5px 6.5px,#d9d9d9 6.5px 8px,transparent 8px 9.8px);"></div>
<div style="left:374.00px;top:212.70px;width:41.00px;height:10.00px;display:flex;align-items:center;justify-content:center;white-space:nowrap;font-size:9px;font-weight:bold;color:#2a2a2a;">特休</div>
<div style="left:415.00px;top:211.20px;width:41.00px;height:26.20px;border-right:1px solid #dcdcdc;box-sizing:border-box;"></div>
<div style="left:415.00px;top:223.50px;width:41.00px;height:1.00px;background:repeating-linear-gradient(90deg,#d9d9d9 0 4.5px,transparent 4.5px 6.5px,#d9d9d9 6.5px 8px,transparent 8px 9.8px);"></div>
<div style="left:415.00px;top:236.40px;width:41.00px;height:1.00px;background:repeating-linear-gradient(90deg,#d9d9d9 0 4.5px,transparent 4.5px 6.5px,#d9d9d9 6.5px 8px,transparent 8px 9.8px);"></div>
<div style="left:415.00px;top:212.70px;width:41.00px;height:10.00px;display:flex;align-items:center;justify-content:center;white-space:nowrap;font-size:9px;font-weight:bold;color:#2a2a2a;">X0001</div>
<div style="left:456.00px;top:211.20px;width:41.00px;height:26.20px;border-right:1px solid #dcdcdc;box-sizing:border-box;"></div>
<div style="left:456.00px;top:223.50px;width:41.00px;height:1.00px;background:repeating-linear-gradient(90deg,#d9d9d9 0 4.5px,transparent 4.5px 6.5px,#d9d9d9 6.5px 8px,transparent 8px 9.8px);"></div>
<div style="left:456.00px;top:236.40px;width:41.00px;height:1.00px;background:repeating-linear-gradient(90deg,#d9d9d9 0 4.5px,transparent 4.5px 6.5px,#d9d9d9 6.5px 8px,transparent 8px 9.8px);"></div>
<div style="left:456.00px;top:212.70px;width:41.00px;height:10.00px;display:flex;align-items:center;justify-content:center;white-space:nowrap;font-size:9px;font-weight:bold;color:#2a2a2a;">-</div>
<div style="left:497.00px;top:211.20px;width:41.00px;height:26.20px;border-right:1px solid #dcdcdc;box-sizing:border-box;"></div>
<div style="left:497.00px;top:223.50px;width:41.00px;height:1.00px;background:repeating-linear-gradient(90deg,#d9d9d9 0 4.5px,transparent 4.5px 6.5px,#d9d9d9 6.5px 8px,transparent 8px 9.8px);"></div>
<div style="left:497.00px;top:236.40px;width:41.00px;height:1.00px;background:repeating-linear-gradient(90deg,#d9d9d9 0 4.5px,transparent 4.5px 6.5px,#d9d9d9 6.5px 8px,transparent 8px 9.8px);"></div>
<div style="left:497.00px;top:212.70px;width:41.00px;height:10.00px;display:flex;align-items:center;justify-content:center;white-space:nowrap;font-size:9px;font-weight:bold;color:#2a2a2a;">X0002</div>
<div style="left:538.00px;top:211.20px;width:41.00px;height:26.20px;border-right:1px solid #dcdcdc;box-sizing:border-box;"></div>
<div style="left:538.00px;top:223.50px;width:41.00px;height:1.00px;background:repeating-linear-gradient(90deg,#d9d9d9 0 4.5px,transparent 4.5px 6.5px,#d9d9d9 6.5px 8px,transparent 8px 9.8px);"></div>
<div style="left:538.00px;top:236.40px;width:41.00px;height:1.00px;background:repeating-linear-gradient(90deg,#d9d9d9 0 4.5px,transparent 4.5px 6.5px,#d9d9d9 6.5px 8px,transparent 8px 9.8px);"></div>
<div style="left:538.00px;top:212.70px;width:41.00px;height:10.00px;display:flex;align-items:center;justify-content:center;white-space:nowrap;font-size:9px;font-weight:bold;color:#2a2a2a;">-</div>
<div style="left:579.00px;top:211.20px;width:41.00px;height:26.20px;border-right:1px solid #dcdcdc;box-sizing:border-box;"></div>
<div style="left:579.00px;top:223.50px;width:41.00px;height:1.00px;background:repeating-linear-gradient(90deg,#d9d9d9 0 4.5px,transparent 4.5px 6.5px,#d9d9d9 6.5px 8px,transparent 8px 9.8px);"></div>
<div style="left:579.00px;top:236.40px;width:41.00px;height:1.00px;background:repeating-linear-gradient(90deg,#d9d9d9 0 4.5px,transparent 4.5px 6.5px,#d9d9d9 6.5px 8px,transparent 8px 9.8px);"></div>
<div style="left:579.00px;top:212.70px;width:41.00px;height:10.00px;display:flex;align-items:center;justify-content:center;white-space:nowrap;font-size:9px;font-weight:bold;color:#2a2a2a;">公休</div>
<div style="left:620.00px;top:211.20px;width:41.00px;height:26.20px;border-right:1px solid #dcdcdc;box-sizing:border-box;"></div>
<div style="left:620.00px;top:223.50px;width:41.00px;height:1.00px;background:repeating-linear-gradient(90deg,#d9d9d9 0 4.5px,transparent 4.5px 6.5px,#d9d9d9 6.5px 8px,transparent 8px 9.8px);"></div>
<div style="left:620.00px;top:236.40px;width:41.00px;height:1.00px;background:repeating-linear-gradient(90deg,#d9d9d9 0 4.5px,transparent 4.5px 6.5px,#d9d9d9 6.5px 8px,transparent 8px 9.8px);"></div>
<div style="left:620.00px;top:212.70px;width:41.00px;height:10.00px;display:flex;align-items:center;justify-content:center;white-space:nowrap;font-size:9px;font-weight:bold;color:#2a2a2a;">特休</div>
<div style="left:661.00px;top:211.20px;width:41.00px;height:26.20px;border-right:1px solid #dcdcdc;box-sizing:border-box;"></div>
<div style="left:661.00px;top:223.50px;width:41.00px;height:1.00px;background:repeating-linear-gradient(90deg,#d9d9d9 0 4.5px,transparent 4.5px 6.5px,#d9d9d9 6.5px 8px,transparent 8px 9.8px);"></div>
<div style="left:661.00px;top:236.40px;width:41.00px;height:1.00px;background:repeating-linear-gradient(90deg,#d9d9d9 0 4.5px,transparent 4.5px 6.5px,#d9d9d9 6.5px 8px,transparent 8px 9.8px);"></div>
<div style="left:661.00px;top:212.70px;width:41.00px;height:10.00px;display:flex;align-items:center;justify-content:center;white-space:nowrap;font-size:9px;font-weight:bold;color:#2a2a2a;">X0003</div>
<div style="left:702.00px;top:211.20px;width:41.00px;height:26.20px;border-right:1px solid #dcdcdc;box-sizing:border-box;"></div>
<div style="left:702.00px;top:223.50px;width:41.00px;height:1.00px;background:repeating-linear-gradient(90deg,#d9d9d9 0 4.5px,transparent 4.5px 6.5px,#d9d9d9 6.5px 8px,transparent 8px 9.8px);"></div>
<div style="left:702.00px;top:236.40px;width:41.00px;height:1.00px;background:repeating-linear-gradient(90deg,#d9d9d9 0 4.5px,transparent 4.5px 6.5px,#d9d9d9 6.5px 8px,transparent 8px 9.8px);"></div>
<div style="left:702.00px;top:212.70px;width:41.00px;height:10.00px;display:flex;align-items:center;justify-content:center;white-space:nowrap;font-size:9px;font-weight:bold;color:#2a2a2a;">-</div>
<div style="left:743.00px;top:211.20px;width:41.00px;height:26.20px;border-right:1px solid #dcdcdc;box-sizing:border-box;"></div>
<div style="left:743.00px;top:223.50px;width:41.00px;height:1.00px;background:repeating-linear-gradient(90deg,#d9d9d9 0 4.5px,transparent 4.5px 6.5px,#d9d9d9 6.5px 8px,transparent 8px 9.8px);"></div>
<div style="left:743.00px;top:236.40px;width:41.00px;height:1.00px;background:repeating-linear-gradient(90deg,#d9d9d9 0 4.5px,transparent 4.5px 6.5px,#d9d9d9 6.5px 8px,transparent 8px 9.8px);"></div>
<div style="left:7.00px;top:237.40px;width:1987.00px;height:26.20px;background:#fff;"></div>
<div style="left:7.00px;top:237.40px;width:84.50px;height:26.20px;border-right:1px solid #d2d2d2;border-bottom:1px solid #d2d2d2;box-sizing:border-box;"></div>
<div style="left:7.00px;top:237.40px;width:84.50px;height:26.20px;display:flex;align-items:center;justify-content:center;white-space:nowrap;font-size:9px;letter-spacing:-0.55px;color:#666;">社員１０４</div>
<div style="left:91.50px;top:237.40px;width:53.50px;height:26.20px;border-right:1px solid #d2d2d2;border-bottom:1px solid #d2d2d2;box-sizing:border-box;"></div>
<div style="left:91.50px;top:237.40px;width:53.50px;height:26.20px;display:flex;align-items:center;justify-content:center;white-space:nowrap;font-size:9px;letter-spacing:-0.55px;color:#666;">車掌</div>
<div style="left:145.00px;top:237.40px;width:53.00px;height:26.20px;border-right:1px solid #d2d2d2;border-bottom:1px solid #d2d2d2;box-sizing:border-box;"></div>
<div style="left:145.00px;top:237.40px;width:53.00px;height:26.20px;display:flex;align-items:center;justify-content:center;white-space:nowrap;font-size:9px;letter-spacing:-0.55px;color:#666;">0000104</div>
<div style="left:198.00px;top:237.40px;width:53.00px;height:26.20px;border-right:1px solid #d2d2d2;border-bottom:1px solid #d2d2d2;box-sizing:border-box;"></div>
<div style="left:198.00px;top:237.40px;width:53.00px;height:26.20px;display:flex;align-items:center;justify-content:center;white-space:nowrap;font-size:9px;letter-spacing:-0.55px;color:#666;">A104</div>
<div class="tri" style="left:145.00px;top:237.40px;border-top:3px solid #1e8a3a;border-right:3px solid transparent"></div>
<div style="left:251.00px;top:237.40px;width:41.00px;height:26.20px;border-right:1px solid #dcdcdc;box-sizing:border-box;"></div>
<div style="left:251.00px;top:249.70px;width:41.00px;height:1.00px;background:repeating-linear-gradient(90deg,#d9d9d9 0 4.5px,transparent 4.5px 6.5px,#d9d9d9 6.5px 8px,transparent 8px 9.8px);"></div>
<div style="left:251.00px;top:262.60px;width:41.00px;height:1.00px;background:repeating-linear-gradient(90deg,#d9d9d9 0 4.5px,transparent 4.5px 6.5px,#d9d9d9 6.5px 8px,transparent 8px 9.8px);"></div>
<div style="left:251.00px;top:238.90px;width:41.00px;height:10.00px;display:flex;align-items:center;justify-content:center;white-space:nowrap;font-size:9px;font-weight:bold;color:#2a2a2a;">-</div>
<div style="left:292.00px;top:237.40px;width:41.00px;height:26.20px;border-right:1px solid #dcdcdc;box-sizing:border-box;"></div>
<div style="left:292.00px;top:249.70px;width:41.00px;height:1.00px;background:repeating-linear-gradient(90deg,#d9d9d9 0 4.5px,transparent 4.5px 6.5px,#d9d9d9 6.5px 8px,transparent 8px 9.8px);"></div>
<div style="left:292.00px;top:262.60px;width:41.00px;height:1.00px;background:repeating-linear-gradient(90deg,#d9d9d9 0 4.5px,transparent 4.5px 6.5px,#d9d9d9 6.5px 8px,transparent 8px 9.8px);"></div>
<div style="left:292.00px;top:238.90px;width:41.00px;height:10.00px;display:flex;align-items:center;justify-content:center;white-space:nowrap;font-size:9px;font-weight:bold;color:#2a2a2a;">公休</div>
<div style="left:333.00px;top:237.40px;width:41.00px;height:26.20px;border-right:1px solid #dcdcdc;box-sizing:border-box;"></div>
<div style="left:333.00px;top:249.70px;width:41.00px;height:1.00px;background:repeating-linear-gradient(90deg,#d9d9d9 0 4.5px,transparent 4.5px 6.5px,#d9d9d9 6.5px 8px,transparent 8px 9.8px);"></div>
<div style="left:333.00px;top:262.60px;width:41.00px;height:1.00px;background:repeating-linear-gradient(90deg,#d9d9d9 0 4.5px,transparent 4.5px 6.5px,#d9d9d9 6.5px 8px,transparent 8px 9.8px);"></div>
<div style="left:333.00px;top:238.90px;width:41.00px;height:10.00px;display:flex;align-items:center;justify-content:center;white-space:nowrap;font-size:9px;font-weight:bold;color:#2a2a2a;">特休</div>
<div style="left:374.00px;top:237.40px;width:41.00px;height:26.20px;border-right:1px solid #dcdcdc;box-sizing:border-box;"></div>
<div style="left:374.00px;top:249.70px;width:41.00px;height:1.00px;background:repeating-linear-gradient(90deg,#d9d9d9 0 4.5px,transparent 4.5px 6.5px,#d9d9d9 6.5px 8px,transparent 8px 9.8px);"></div>
<div style="left:374.00px;top:262.60px;width:41.00px;height:1.00px;background:repeating-linear-gradient(90deg,#d9d9d9 0 4.5px,transparent 4.5px 6.5px,#d9d9d9 6.5px 8px,transparent 8px 9.8px);"></div>
<div style="left:374.00px;top:238.90px;width:41.00px;height:10.00px;display:flex;align-items:center;justify-content:center;white-space:nowrap;font-size:9px;font-weight:bold;color:#2a2a2a;">X0001</div>
<div style="left:415.00px;top:237.40px;width:41.00px;height:26.20px;border-right:1px solid #dcdcdc;box-sizing:border-box;"></div>
<div style="left:415.00px;top:249.70px;width:41.00px;height:1.00px;background:repeating-linear-gradient(90deg,#d9d9d9 0 4.5px,transparent 4.5px 6.5px,#d9d9d9 6.5px 8px,transparent 8px 9.8px);"></div>
<div style="left:415.00px;top:262.60px;width:41.00px;height:1.00px;background:repeating-linear-gradient(90deg,#d9d9d9 0 4.5px,transparent 4.5px 6.5px,#d9d9d9 6.5px 8px,transparent 8px 9.8px);"></div>
<div style="left:415.00px;top:238.90px;width:41.00px;height:10.00px;display:flex;align-items:center;justify-content:center;white-space:nowrap;font-size:9px;font-weight:bold;color:#2a2a2a;">-</div>
<div style="left:456.00px;top:237.40px;width:41.00px;height:26.20px;border-right:1px solid #dcdcdc;box-sizing:border-box;"></div>
<div style="left:456.00px;top:249.70px;width:41.00px;height:1.00px;background:repeating-linear-gradient(90deg,#d9d9d9 0 4.5px,transparent 4.5px 6.5px,#d9d9d9 6.5px 8px,transparent 8px 9.8px);"></div>
<div style="left:456.00px;top:262.60px;width:41.00px;height:1.00px;background:repeating-linear-gradient(90deg,#d9d9d9 0 4.5px,transparent 4.5px 6.5px,#d9d9d9 6.5px 8px,transparent 8px 9.8px);"></div>
<div style="left:456.00px;top:238.90px;width:41.00px;height:10.00px;display:flex;align-items:center;justify-content:center;white-space:nowrap;font-size:9px;font-weight:bold;color:#2a2a2a;">X0003</div>
<div style="left:497.00px;top:237.40px;width:41.00px;height:26.20px;border-right:1px solid #dcdcdc;box-sizing:border-box;"></div>
<div style="left:497.00px;top:249.70px;width:41.00px;height:1.00px;background:repeating-linear-gradient(90deg,#d9d9d9 0 4.5px,transparent 4.5px 6.5px,#d9d9d9 6.5px 8px,transparent 8px 9.8px);"></div>
<div style="left:497.00px;top:262.60px;width:41.00px;height:1.00px;background:repeating-linear-gradient(90deg,#d9d9d9 0 4.5px,transparent 4.5px 6.5px,#d9d9d9 6.5px 8px,transparent 8px 9.8px);"></div>
<div style="left:497.00px;top:238.90px;width:41.00px;height:10.00px;display:flex;align-items:center;justify-content:center;white-space:nowrap;font-size:9px;font-weight:bold;color:#2a2a2a;">-</div>
<div style="left:538.00px;top:237.40px;width:41.00px;height:26.20px;border-right:1px solid #dcdcdc;box-sizing:border-box;"></div>
<div style="left:538.00px;top:249.70px;width:41.00px;height:1.00px;background:repeating-linear-gradient(90deg,#d9d9d9 0 4.5px,transparent 4.5px 6.5px,#d9d9d9 6.5px 8px,transparent 8px 9.8px);"></div>
<div style="left:538.00px;top:262.60px;width:41.00px;height:1.00px;background:repeating-linear-gradient(90deg,#d9d9d9 0 4.5px,transparent 4.5px 6.5px,#d9d9d9 6.5px 8px,transparent 8px 9.8px);"></div>
<div style="left:538.00px;top:238.90px;width:41.00px;height:10.00px;display:flex;align-items:center;justify-content:center;white-space:nowrap;font-size:9px;font-weight:bold;color:#2a2a2a;">公休</div>
<div style="left:579.00px;top:237.40px;width:41.00px;height:26.20px;border-right:1px solid #dcdcdc;box-sizing:border-box;"></div>
<div style="left:579.00px;top:249.70px;width:41.00px;height:1.00px;background:repeating-linear-gradient(90deg,#d9d9d9 0 4.5px,transparent 4.5px 6.5px,#d9d9d9 6.5px 8px,transparent 8px 9.8px);"></div>
<div style="left:579.00px;top:262.60px;width:41.00px;height:1.00px;background:repeating-linear-gradient(90deg,#d9d9d9 0 4.5px,transparent 4.5px 6.5px,#d9d9d9 6.5px 8px,transparent 8px 9.8px);"></div>
<div style="left:579.00px;top:238.90px;width:41.00px;height:10.00px;display:flex;align-items:center;justify-content:center;white-space:nowrap;font-size:9px;font-weight:bold;color:#2a2a2a;">特休</div>
<div style="left:620.00px;top:237.40px;width:41.00px;height:26.20px;border-right:1px solid #dcdcdc;box-sizing:border-box;"></div>
<div style="left:620.00px;top:249.70px;width:41.00px;height:1.00px;background:repeating-linear-gradient(90deg,#d9d9d9 0 4.5px,transparent 4.5px 6.5px,#d9d9d9 6.5px 8px,transparent 8px 9.8px);"></div>
<div style="left:620.00px;top:262.60px;width:41.00px;height:1.00px;background:repeating-linear-gradient(90deg,#d9d9d9 0 4.5px,transparent 4.5px 6.5px,#d9d9d9 6.5px 8px,transparent 8px 9.8px);"></div>
<div style="left:620.00px;top:238.90px;width:41.00px;height:10.00px;display:flex;align-items:center;justify-content:center;white-space:nowrap;font-size:9px;font-weight:bold;color:#2a2a2a;">X0004</div>
<div style="left:661.00px;top:237.40px;width:41.00px;height:26.20px;border-right:1px solid #dcdcdc;box-sizing:border-box;"></div>
<div style="left:661.00px;top:249.70px;width:41.00px;height:1.00px;background:repeating-linear-gradient(90deg,#d9d9d9 0 4.5px,transparent 4.5px 6.5px,#d9d9d9 6.5px 8px,transparent 8px 9.8px);"></div>
<div style="left:661.00px;top:262.60px;width:41.00px;height:1.00px;background:repeating-linear-gradient(90deg,#d9d9d9 0 4.5px,transparent 4.5px 6.5px,#d9d9d9 6.5px 8px,transparent 8px 9.8px);"></div>
<div style="left:661.00px;top:238.90px;width:41.00px;height:10.00px;display:flex;align-items:center;justify-content:center;white-space:nowrap;font-size:9px;font-weight:bold;color:#2a2a2a;">-</div>
<div style="left:702.00px;top:237.40px;width:41.00px;height:26.20px;border-right:1px solid #dcdcdc;box-sizing:border-box;"></div>
<div style="left:702.00px;top:249.70px;width:41.00px;height:1.00px;background:repeating-linear-gradient(90deg,#d9d9d9 0 4.5px,transparent 4.5px 6.5px,#d9d9d9 6.5px 8px,transparent 8px 9.8px);"></div>
<div style="left:702.00px;top:262.60px;width:41.00px;height:1.00px;background:repeating-linear-gradient(90deg,#d9d9d9 0 4.5px,transparent 4.5px 6.5px,#d9d9d9 6.5px 8px,transparent 8px 9.8px);"></div>
<div style="left:702.00px;top:238.90px;width:41.00px;height:10.00px;display:flex;align-items:center;justify-content:center;white-space:nowrap;font-size:9px;font-weight:bold;color:#2a2a2a;">X0002</div>
<div style="left:743.00px;top:237.40px;width:41.00px;height:26.20px;border-right:1px solid #dcdcdc;box-sizing:border-box;"></div>
<div style="left:743.00px;top:249.70px;width:41.00px;height:1.00px;background:repeating-linear-gradient(90deg,#d9d9d9 0 4.5px,transparent 4.5px 6.5px,#d9d9d9 6.5px 8px,transparent 8px 9.8px);"></div>
<div style="left:743.00px;top:262.60px;width:41.00px;height:1.00px;background:repeating-linear-gradient(90deg,#d9d9d9 0 4.5px,transparent 4.5px 6.5px,#d9d9d9 6.5px 8px,transparent 8px 9.8px);"></div>
<div style="left:7.00px;top:263.60px;width:1987.00px;height:26.20px;background:#faeddd;"></div>
<div style="left:7.00px;top:263.60px;width:84.50px;height:26.20px;border-right:1px solid #d2d2d2;border-bottom:1px solid #d2d2d2;box-sizing:border-box;"></div>
<div style="left:7.00px;top:263.60px;width:84.50px;height:26.20px;display:flex;align-items:center;justify-content:center;white-space:nowrap;font-size:9px;letter-spacing:-0.55px;color:#666;">社員１０５</div>
<div style="left:91.50px;top:263.60px;width:53.50px;height:26.20px;border-right:1px solid #d2d2d2;border-bottom:1px solid #d2d2d2;box-sizing:border-box;"></div>
<div style="left:91.50px;top:263.60px;width:53.50px;height:26.20px;display:flex;align-items:center;justify-content:center;white-space:nowrap;font-size:9px;letter-spacing:-0.55px;color:#666;">車掌</div>
<div style="left:145.00px;top:263.60px;width:53.00px;height:26.20px;border-right:1px solid #d2d2d2;border-bottom:1px solid #d2d2d2;box-sizing:border-box;"></div>
<div style="left:145.00px;top:263.60px;width:53.00px;height:26.20px;display:flex;align-items:center;justify-content:center;white-space:nowrap;font-size:9px;letter-spacing:-0.55px;color:#666;">0000105</div>
<div style="left:198.00px;top:263.60px;width:53.00px;height:26.20px;border-right:1px solid #d2d2d2;border-bottom:1px solid #d2d2d2;box-sizing:border-box;"></div>
<div style="left:198.00px;top:263.60px;width:53.00px;height:26.20px;display:flex;align-items:center;justify-content:center;white-space:nowrap;font-size:9px;letter-spacing:-0.55px;color:#666;">A105</div>
<div class="tri" style="left:145.00px;top:263.60px;border-top:3px solid #1e8a3a;border-right:3px solid transparent"></div>
<div style="left:251.00px;top:263.60px;width:41.00px;height:26.20px;border-right:1px solid #dcdcdc;box-sizing:border-box;"></div>
<div style="left:251.00px;top:275.90px;width:41.00px;height:1.00px;background:repeating-linear-gradient(90deg,#d9d9d9 0 4.5px,transparent 4.5px 6.5px,#d9d9d9 6.5px 8px,transparent 8px 9.8px);"></div>
<div style="left:251.00px;top:288.80px;width:41.00px;height:1.00px;background:repeating-linear-gradient(90deg,#d9d9d9 0 4.5px,transparent 4.5px 6.5px,#d9d9d9 6.5px 8px,transparent 8px 9.8px);"></div>
<div style="left:292.00px;top:263.60px;width:41.00px;height:26.20px;border-right:1px solid #dcdcdc;box-sizing:border-box;"></div>
<div style="left:292.00px;top:275.90px;width:41.00px;height:1.00px;background:repeating-linear-gradient(90deg,#d9d9d9 0 4.5px,transparent 4.5px 6.5px,#d9d9d9 6.5px 8px,transparent 8px 9.8px);"></div>
<div style="left:292.00px;top:288.80px;width:41.00px;height:1.00px;background:repeating-linear-gradient(90deg,#d9d9d9 0 4.5px,transparent 4.5px 6.5px,#d9d9d9 6.5px 8px,transparent 8px 9.8px);"></div>
<div style="left:333.00px;top:263.60px;width:41.00px;height:26.20px;border-right:1px solid #dcdcdc;box-sizing:border-box;"></div>
<div style="left:333.00px;top:275.90px;width:41.00px;height:1.00px;background:repeating-linear-gradient(90deg,#d9d9d9 0 4.5px,transparent 4.5px 6.5px,#d9d9d9 6.5px 8px,transparent 8px 9.8px);"></div>
<div style="left:333.00px;top:288.80px;width:41.00px;height:1.00px;background:repeating-linear-gradient(90deg,#d9d9d9 0 4.5px,transparent 4.5px 6.5px,#d9d9d9 6.5px 8px,transparent 8px 9.8px);"></div>
<div style="left:374.00px;top:263.60px;width:41.00px;height:26.20px;border-right:1px solid #dcdcdc;box-sizing:border-box;"></div>
<div style="left:374.00px;top:275.90px;width:41.00px;height:1.00px;background:repeating-linear-gradient(90deg,#d9d9d9 0 4.5px,transparent 4.5px 6.5px,#d9d9d9 6.5px 8px,transparent 8px 9.8px);"></div>
<div style="left:374.00px;top:288.80px;width:41.00px;height:1.00px;background:repeating-linear-gradient(90deg,#d9d9d9 0 4.5px,transparent 4.5px 6.5px,#d9d9d9 6.5px 8px,transparent 8px 9.8px);"></div>
<div style="left:415.00px;top:263.60px;width:41.00px;height:26.20px;border-right:1px solid #dcdcdc;box-sizing:border-box;"></div>
<div style="left:415.00px;top:275.90px;width:41.00px;height:1.00px;background:repeating-linear-gradient(90deg,#d9d9d9 0 4.5px,transparent 4.5px 6.5px,#d9d9d9 6.5px 8px,transparent 8px 9.8px);"></div>
<div style="left:415.00px;top:288.80px;width:41.00px;height:1.00px;background:repeating-linear-gradient(90deg,#d9d9d9 0 4.5px,transparent 4.5px 6.5px,#d9d9d9 6.5px 8px,transparent 8px 9.8px);"></div>
<div style="left:456.00px;top:263.60px;width:41.00px;height:26.20px;border-right:1px solid #dcdcdc;box-sizing:border-box;"></div>
<div style="left:456.00px;top:275.90px;width:41.00px;height:1.00px;background:repeating-linear-gradient(90deg,#d9d9d9 0 4.5px,transparent 4.5px 6.5px,#d9d9d9 6.5px 8px,transparent 8px 9.8px);"></div>
<div style="left:456.00px;top:288.80px;width:41.00px;height:1.00px;background:repeating-linear-gradient(90deg,#d9d9d9 0 4.5px,transparent 4.5px 6.5px,#d9d9d9 6.5px 8px,transparent 8px 9.8px);"></div>
<div style="left:497.00px;top:263.60px;width:41.00px;height:26.20px;border-right:1px solid #dcdcdc;box-sizing:border-box;"></div>
<div style="left:497.00px;top:275.90px;width:41.00px;height:1.00px;background:repeating-linear-gradient(90deg,#d9d9d9 0 4.5px,transparent 4.5px 6.5px,#d9d9d9 6.5px 8px,transparent 8px 9.8px);"></div>
<div style="left:497.00px;top:288.80px;width:41.00px;height:1.00px;background:repeating-linear-gradient(90deg,#d9d9d9 0 4.5px,transparent 4.5px 6.5px,#d9d9d9 6.5px 8px,transparent 8px 9.8px);"></div>
<div style="left:538.00px;top:263.60px;width:41.00px;height:26.20px;border-right:1px solid #dcdcdc;box-sizing:border-box;"></div>
<div style="left:538.00px;top:275.90px;width:41.00px;height:1.00px;background:repeating-linear-gradient(90deg,#d9d9d9 0 4.5px,transparent 4.5px 6.5px,#d9d9d9 6.5px 8px,transparent 8px 9.8px);"></div>
<div style="left:538.00px;top:288.80px;width:41.00px;height:1.00px;background:repeating-linear-gradient(90deg,#d9d9d9 0 4.5px,transparent 4.5px 6.5px,#d9d9d9 6.5px 8px,transparent 8px 9.8px);"></div>
<div style="left:579.00px;top:263.60px;width:41.00px;height:26.20px;border-right:1px solid #dcdcdc;box-sizing:border-box;"></div>
<div style="left:579.00px;top:275.90px;width:41.00px;height:1.00px;background:repeating-linear-gradient(90deg,#d9d9d9 0 4.5px,transparent 4.5px 6.5px,#d9d9d9 6.5px 8px,transparent 8px 9.8px);"></div>
<div style="left:579.00px;top:288.80px;width:41.00px;height:1.00px;background:repeating-linear-gradient(90deg,#d9d9d9 0 4.5px,transparent 4.5px 6.5px,#d9d9d9 6.5px 8px,transparent 8px 9.8px);"></div>
<div style="left:620.00px;top:263.60px;width:41.00px;height:26.20px;border-right:1px solid #dcdcdc;box-sizing:border-box;"></div>
<div style="left:620.00px;top:275.90px;width:41.00px;height:1.00px;background:repeating-linear-gradient(90deg,#d9d9d9 0 4.5px,transparent 4.5px 6.5px,#d9d9d9 6.5px 8px,transparent 8px 9.8px);"></div>
<div style="left:620.00px;top:288.80px;width:41.00px;height:1.00px;background:repeating-linear-gradient(90deg,#d9d9d9 0 4.5px,transparent 4.5px 6.5px,#d9d9d9 6.5px 8px,transparent 8px 9.8px);"></div>
<div style="left:661.00px;top:263.60px;width:41.00px;height:26.20px;border-right:1px solid #dcdcdc;box-sizing:border-box;"></div>
<div style="left:661.00px;top:275.90px;width:41.00px;height:1.00px;background:repeating-linear-gradient(90deg,#d9d9d9 0 4.5px,transparent 4.5px 6.5px,#d9d9d9 6.5px 8px,transparent 8px 9.8px);"></div>
<div style="left:661.00px;top:288.80px;width:41.00px;height:1.00px;background:repeating-linear-gradient(90deg,#d9d9d9 0 4.5px,transparent 4.5px 6.5px,#d9d9d9 6.5px 8px,transparent 8px 9.8px);"></div>
<div style="left:702.00px;top:263.60px;width:41.00px;height:26.20px;border-right:1px solid #dcdcdc;box-sizing:border-box;"></div>
<div style="left:702.00px;top:275.90px;width:41.00px;height:1.00px;background:repeating-linear-gradient(90deg,#d9d9d9 0 4.5px,transparent 4.5px 6.5px,#d9d9d9 6.5px 8px,transparent 8px 9.8px);"></div>
<div style="left:702.00px;top:288.80px;width:41.00px;height:1.00px;background:repeating-linear-gradient(90deg,#d9d9d9 0 4.5px,transparent 4.5px 6.5px,#d9d9d9 6.5px 8px,transparent 8px 9.8px);"></div>
<div style="left:743.00px;top:263.60px;width:41.00px;height:26.20px;border-right:1px solid #dcdcdc;box-sizing:border-box;"></div>
<div style="left:743.00px;top:275.90px;width:41.00px;height:1.00px;background:repeating-linear-gradient(90deg,#d9d9d9 0 4.5px,transparent 4.5px 6.5px,#d9d9d9 6.5px 8px,transparent 8px 9.8px);"></div>
<div style="left:743.00px;top:288.80px;width:41.00px;height:1.00px;background:repeating-linear-gradient(90deg,#d9d9d9 0 4.5px,transparent 4.5px 6.5px,#d9d9d9 6.5px 8px,transparent 8px 9.8px);"></div>
<div style="left:7.00px;top:289.80px;width:1987.00px;height:26.20px;background:#fff;"></div>
<div style="left:7.00px;top:289.80px;width:84.50px;height:26.20px;border-right:1px solid #d2d2d2;border-bottom:1px solid #d2d2d2;box-sizing:border-box;"></div>
<div style="left:7.00px;top:289.80px;width:84.50px;height:26.20px;display:flex;align-items:center;justify-content:center;white-space:nowrap;font-size:9px;letter-spacing:-0.55px;color:#666;">社員１０６</div>
<div style="left:91.50px;top:289.80px;width:53.50px;height:26.20px;border-right:1px solid #d2d2d2;border-bottom:1px solid #d2d2d2;box-sizing:border-box;"></div>
<div style="left:91.50px;top:289.80px;width:53.50px;height:26.20px;display:flex;align-items:center;justify-content:center;white-space:nowrap;font-size:9px;letter-spacing:-0.55px;color:#666;">車掌</div>
<div style="left:145.00px;top:289.80px;width:53.00px;height:26.20px;border-right:1px solid #d2d2d2;border-bottom:1px solid #d2d2d2;box-sizing:border-box;"></div>
<div style="left:145.00px;top:289.80px;width:53.00px;height:26.20px;display:flex;align-items:center;justify-content:center;white-space:nowrap;font-size:9px;letter-spacing:-0.55px;color:#666;">0000106</div>
<div style="left:198.00px;top:289.80px;width:53.00px;height:26.20px;border-right:1px solid #d2d2d2;border-bottom:1px solid #d2d2d2;box-sizing:border-box;"></div>
<div style="left:198.00px;top:289.80px;width:53.00px;height:26.20px;display:flex;align-items:center;justify-content:center;white-space:nowrap;font-size:9px;letter-spacing:-0.55px;color:#666;">A106</div>
<div class="tri" style="left:145.00px;top:289.80px;border-top:3px solid #1e8a3a;border-right:3px solid transparent"></div>
<div style="left:251.00px;top:289.80px;width:41.00px;height:26.20px;border-right:1px solid #dcdcdc;box-sizing:border-box;"></div>
<div style="left:251.00px;top:302.10px;width:41.00px;height:1.00px;background:repeating-linear-gradient(90deg,#d9d9d9 0 4.5px,transparent 4.5px 6.5px,#d9d9d9 6.5px 8px,transparent 8px 9.8px);"></div>
<div style="left:251.00px;top:315.00px;width:41.00px;height:1.00px;background:repeating-linear-gradient(90deg,#d9d9d9 0 4.5px,transparent 4.5px 6.5px,#d9d9d9 6.5px 8px,transparent 8px 9.8px);"></div>
<div style="left:292.00px;top:289.80px;width:41.00px;height:26.20px;border-right:1px solid #dcdcdc;box-sizing:border-box;"></div>
<div style="left:292.00px;top:302.10px;width:41.00px;height:1.00px;background:repeating-linear-gradient(90deg,#d9d9d9 0 4.5px,transparent 4.5px 6.5px,#d9d9d9 6.5px 8px,transparent 8px 9.8px);"></div>
<div style="left:292.00px;top:315.00px;width:41.00px;height:1.00px;background:repeating-linear-gradient(90deg,#d9d9d9 0 4.5px,transparent 4.5px 6.5px,#d9d9d9 6.5px 8px,transparent 8px 9.8px);"></div>
<div style="left:333.00px;top:289.80px;width:41.00px;height:26.20px;border-right:1px solid #dcdcdc;box-sizing:border-box;"></div>
<div style="left:333.00px;top:302.10px;width:41.00px;height:1.00px;background:repeating-linear-gradient(90deg,#d9d9d9 0 4.5px,transparent 4.5px 6.5px,#d9d9d9 6.5px 8px,transparent 8px 9.8px);"></div>
<div style="left:333.00px;top:315.00px;width:41.00px;height:1.00px;background:repeating-linear-gradient(90deg,#d9d9d9 0 4.5px,transparent 4.5px 6.5px,#d9d9d9 6.5px 8px,transparent 8px 9.8px);"></div>
<div style="left:374.00px;top:289.80px;width:41.00px;height:26.20px;border-right:1px solid #dcdcdc;box-sizing:border-box;"></div>
<div style="left:374.00px;top:302.10px;width:41.00px;height:1.00px;background:repeating-linear-gradient(90deg,#d9d9d9 0 4.5px,transparent 4.5px 6.5px,#d9d9d9 6.5px 8px,transparent 8px 9.8px);"></div>
<div style="left:374.00px;top:315.00px;width:41.00px;height:1.00px;background:repeating-linear-gradient(90deg,#d9d9d9 0 4.5px,transparent 4.5px 6.5px,#d9d9d9 6.5px 8px,transparent 8px 9.8px);"></div>
<div style="left:415.00px;top:289.80px;width:41.00px;height:26.20px;border-right:1px solid #dcdcdc;box-sizing:border-box;"></div>
<div style="left:415.00px;top:302.10px;width:41.00px;height:1.00px;background:repeating-linear-gradient(90deg,#d9d9d9 0 4.5px,transparent 4.5px 6.5px,#d9d9d9 6.5px 8px,transparent 8px 9.8px);"></div>
<div style="left:415.00px;top:315.00px;width:41.00px;height:1.00px;background:repeating-linear-gradient(90deg,#d9d9d9 0 4.5px,transparent 4.5px 6.5px,#d9d9d9 6.5px 8px,transparent 8px 9.8px);"></div>
<div style="left:456.00px;top:289.80px;width:41.00px;height:26.20px;border-right:1px solid #dcdcdc;box-sizing:border-box;"></div>
<div style="left:456.00px;top:302.10px;width:41.00px;height:1.00px;background:repeating-linear-gradient(90deg,#d9d9d9 0 4.5px,transparent 4.5px 6.5px,#d9d9d9 6.5px 8px,transparent 8px 9.8px);"></div>
<div style="left:456.00px;top:315.00px;width:41.00px;height:1.00px;background:repeating-linear-gradient(90deg,#d9d9d9 0 4.5px,transparent 4.5px 6.5px,#d9d9d9 6.5px 8px,transparent 8px 9.8px);"></div>
<div style="left:497.00px;top:289.80px;width:41.00px;height:26.20px;border-right:1px solid #dcdcdc;box-sizing:border-box;"></div>
<div style="left:497.00px;top:302.10px;width:41.00px;height:1.00px;background:repeating-linear-gradient(90deg,#d9d9d9 0 4.5px,transparent 4.5px 6.5px,#d9d9d9 6.5px 8px,transparent 8px 9.8px);"></div>
<div style="left:497.00px;top:315.00px;width:41.00px;height:1.00px;background:repeating-linear-gradient(90deg,#d9d9d9 0 4.5px,transparent 4.5px 6.5px,#d9d9d9 6.5px 8px,transparent 8px 9.8px);"></div>
<div style="left:538.00px;top:289.80px;width:41.00px;height:26.20px;border-right:1px solid #dcdcdc;box-sizing:border-box;"></div>
<div style="left:538.00px;top:302.10px;width:41.00px;height:1.00px;background:repeating-linear-gradient(90deg,#d9d9d9 0 4.5px,transparent 4.5px 6.5px,#d9d9d9 6.5px 8px,transparent 8px 9.8px);"></div>
<div style="left:538.00px;top:315.00px;width:41.00px;height:1.00px;background:repeating-linear-gradient(90deg,#d9d9d9 0 4.5px,transparent 4.5px 6.5px,#d9d9d9 6.5px 8px,transparent 8px 9.8px);"></div>
<div style="left:579.00px;top:289.80px;width:41.00px;height:26.20px;border-right:1px solid #dcdcdc;box-sizing:border-box;"></div>
<div style="left:579.00px;top:302.10px;width:41.00px;height:1.00px;background:repeating-linear-gradient(90deg,#d9d9d9 0 4.5px,transparent 4.5px 6.5px,#d9d9d9 6.5px 8px,transparent 8px 9.8px);"></div>
<div style="left:579.00px;top:315.00px;width:41.00px;height:1.00px;background:repeating-linear-gradient(90deg,#d9d9d9 0 4.5px,transparent 4.5px 6.5px,#d9d9d9 6.5px 8px,transparent 8px 9.8px);"></div>
<div style="left:620.00px;top:289.80px;width:41.00px;height:26.20px;border-right:1px solid #dcdcdc;box-sizing:border-box;"></div>
<div style="left:620.00px;top:302.10px;width:41.00px;height:1.00px;background:repeating-linear-gradient(90deg,#d9d9d9 0 4.5px,transparent 4.5px 6.5px,#d9d9d9 6.5px 8px,transparent 8px 9.8px);"></div>
<div style="left:620.00px;top:315.00px;width:41.00px;height:1.00px;background:repeating-linear-gradient(90deg,#d9d9d9 0 4.5px,transparent 4.5px 6.5px,#d9d9d9 6.5px 8px,transparent 8px 9.8px);"></div>
<div style="left:661.00px;top:289.80px;width:41.00px;height:26.20px;border-right:1px solid #dcdcdc;box-sizing:border-box;"></div>
<div style="left:661.00px;top:302.10px;width:41.00px;height:1.00px;background:repeating-linear-gradient(90deg,#d9d9d9 0 4.5px,transparent 4.5px 6.5px,#d9d9d9 6.5px 8px,transparent 8px 9.8px);"></div>
<div style="left:661.00px;top:315.00px;width:41.00px;height:1.00px;background:repeating-linear-gradient(90deg,#d9d9d9 0 4.5px,transparent 4.5px 6.5px,#d9d9d9 6.5px 8px,transparent 8px 9.8px);"></div>
<div style="left:702.00px;top:289.80px;width:41.00px;height:26.20px;border-right:1px solid #dcdcdc;box-sizing:border-box;"></div>
<div style="left:702.00px;top:302.10px;width:41.00px;height:1.00px;background:repeating-linear-gradient(90deg,#d9d9d9 0 4.5px,transparent 4.5px 6.5px,#d9d9d9 6.5px 8px,transparent 8px 9.8px);"></div>
<div style="left:702.00px;top:315.00px;width:41.00px;height:1.00px;background:repeating-linear-gradient(90deg,#d9d9d9 0 4.5px,transparent 4.5px 6.5px,#d9d9d9 6.5px 8px,transparent 8px 9.8px);"></div>
<div style="left:743.00px;top:289.80px;width:41.00px;height:26.20px;border-right:1px solid #dcdcdc;box-sizing:border-box;"></div>
<div style="left:743.00px;top:302.10px;width:41.00px;height:1.00px;background:repeating-linear-gradient(90deg,#d9d9d9 0 4.5px,transparent 4.5px 6.5px,#d9d9d9 6.5px 8px,transparent 8px 9.8px);"></div>
<div style="left:743.00px;top:315.00px;width:41.00px;height:1.00px;background:repeating-linear-gradient(90deg,#d9d9d9 0 4.5px,transparent 4.5px 6.5px,#d9d9d9 6.5px 8px,transparent 8px 9.8px);"></div>
<div style="left:7.00px;top:316.00px;width:1987.00px;height:26.20px;background:#faeddd;"></div>
<div style="left:7.00px;top:316.00px;width:84.50px;height:26.20px;border-right:1px solid #d2d2d2;border-bottom:1px solid #d2d2d2;box-sizing:border-box;"></div>
<div style="left:7.00px;top:316.00px;width:84.50px;height:26.20px;display:flex;align-items:center;justify-content:center;white-space:nowrap;font-size:9px;letter-spacing:-0.55px;color:#666;">社員１０７</div>
<div style="left:91.50px;top:316.00px;width:53.50px;height:26.20px;border-right:1px solid #d2d2d2;border-bottom:1px solid #d2d2d2;box-sizing:border-box;"></div>
<div style="left:91.50px;top:316.00px;width:53.50px;height:26.20px;display:flex;align-items:center;justify-content:center;white-space:nowrap;font-size:9px;letter-spacing:-0.55px;color:#666;">車掌</div>
<div style="left:145.00px;top:316.00px;width:53.00px;height:26.20px;border-right:1px solid #d2d2d2;border-bottom:1px solid #d2d2d2;box-sizing:border-box;"></div>
<div style="left:145.00px;top:316.00px;width:53.00px;height:26.20px;display:flex;align-items:center;justify-content:center;white-space:nowrap;font-size:9px;letter-spacing:-0.55px;color:#666;">0000107</div>
<div style="left:198.00px;top:316.00px;width:53.00px;height:26.20px;border-right:1px solid #d2d2d2;border-bottom:1px solid #d2d2d2;box-sizing:border-box;"></div>
<div style="left:198.00px;top:316.00px;width:53.00px;height:26.20px;display:flex;align-items:center;justify-content:center;white-space:nowrap;font-size:9px;letter-spacing:-0.55px;color:#666;">A107</div>
<div class="tri" style="left:145.00px;top:316.00px;border-top:3px solid #1e8a3a;border-right:3px solid transparent"></div>
<div style="left:251.00px;top:316.00px;width:41.00px;height:26.20px;border-right:1px solid #dcdcdc;box-sizing:border-box;"></div>
<div style="left:251.00px;top:328.30px;width:41.00px;height:1.00px;background:repeating-linear-gradient(90deg,#d9d9d9 0 4.5px,transparent 4.5px 6.5px,#d9d9d9 6.5px 8px,transparent 8px 9.8px);"></div>
<div style="left:251.00px;top:341.20px;width:41.00px;height:1.00px;background:repeating-linear-gradient(90deg,#d9d9d9 0 4.5px,transparent 4.5px 6.5px,#d9d9d9 6.5px 8px,transparent 8px 9.8px);"></div>
<div style="left:292.00px;top:316.00px;width:41.00px;height:26.20px;border-right:1px solid #dcdcdc;box-sizing:border-box;"></div>
<div style="left:292.00px;top:328.30px;width:41.00px;height:1.00px;background:repeating-linear-gradient(90deg,#d9d9d9 0 4.5px,transparent 4.5px 6.5px,#d9d9d9 6.5px 8px,transparent 8px 9.8px);"></div>
<div style="left:292.00px;top:341.20px;width:41.00px;height:1.00px;background:repeating-linear-gradient(90deg,#d9d9d9 0 4.5px,transparent 4.5px 6.5px,#d9d9d9 6.5px 8px,transparent 8px 9.8px);"></div>
<div style="left:333.00px;top:316.00px;width:41.00px;height:26.20px;border-right:1px solid #dcdcdc;box-sizing:border-box;"></div>
<div style="left:333.00px;top:328.30px;width:41.00px;height:1.00px;background:repeating-linear-gradient(90deg,#d9d9d9 0 4.5px,transparent 4.5px 6.5px,#d9d9d9 6.5px 8px,transparent 8px 9.8px);"></div>
<div style="left:333.00px;top:341.20px;width:41.00px;height:1.00px;background:repeating-linear-gradient(90deg,#d9d9d9 0 4.5px,transparent 4.5px 6.5px,#d9d9d9 6.5px 8px,transparent 8px 9.8px);"></div>
<div style="left:374.00px;top:316.00px;width:41.00px;height:26.20px;border-right:1px solid #dcdcdc;box-sizing:border-box;"></div>
<div style="left:374.00px;top:328.30px;width:41.00px;height:1.00px;background:repeating-linear-gradient(90deg,#d9d9d9 0 4.5px,transparent 4.5px 6.5px,#d9d9d9 6.5px 8px,transparent 8px 9.8px);"></div>
<div style="left:374.00px;top:341.20px;width:41.00px;height:1.00px;background:repeating-linear-gradient(90deg,#d9d9d9 0 4.5px,transparent 4.5px 6.5px,#d9d9d9 6.5px 8px,transparent 8px 9.8px);"></div>
<div style="left:415.00px;top:316.00px;width:41.00px;height:26.20px;border-right:1px solid #dcdcdc;box-sizing:border-box;"></div>
<div style="left:415.00px;top:328.30px;width:41.00px;height:1.00px;background:repeating-linear-gradient(90deg,#d9d9d9 0 4.5px,transparent 4.5px 6.5px,#d9d9d9 6.5px 8px,transparent 8px 9.8px);"></div>
<div style="left:415.00px;top:341.20px;width:41.00px;height:1.00px;background:repeating-linear-gradient(90deg,#d9d9d9 0 4.5px,transparent 4.5px 6.5px,#d9d9d9 6.5px 8px,transparent 8px 9.8px);"></div>
<div style="left:456.00px;top:316.00px;width:41.00px;height:26.20px;border-right:1px solid #dcdcdc;box-sizing:border-box;"></div>
<div style="left:456.00px;top:328.30px;width:41.00px;height:1.00px;background:repeating-linear-gradient(90deg,#d9d9d9 0 4.5px,transparent 4.5px 6.5px,#d9d9d9 6.5px 8px,transparent 8px 9.8px);"></div>
<div style="left:456.00px;top:341.20px;width:41.00px;height:1.00px;background:repeating-linear-gradient(90deg,#d9d9d9 0 4.5px,transparent 4.5px 6.5px,#d9d9d9 6.5px 8px,transparent 8px 9.8px);"></div>
<div style="left:497.00px;top:316.00px;width:41.00px;height:26.20px;border-right:1px solid #dcdcdc;box-sizing:border-box;"></div>
<div style="left:497.00px;top:328.30px;width:41.00px;height:1.00px;background:repeating-linear-gradient(90deg,#d9d9d9 0 4.5px,transparent 4.5px 6.5px,#d9d9d9 6.5px 8px,transparent 8px 9.8px);"></div>
<div style="left:497.00px;top:341.20px;width:41.00px;height:1.00px;background:repeating-linear-gradient(90deg,#d9d9d9 0 4.5px,transparent 4.5px 6.5px,#d9d9d9 6.5px 8px,transparent 8px 9.8px);"></div>
<div style="left:538.00px;top:316.00px;width:41.00px;height:26.20px;border-right:1px solid #dcdcdc;box-sizing:border-box;"></div>
<div style="left:538.00px;top:328.30px;width:41.00px;height:1.00px;background:repeating-linear-gradient(90deg,#d9d9d9 0 4.5px,transparent 4.5px 6.5px,#d9d9d9 6.5px 8px,transparent 8px 9.8px);"></div>
<div style="left:538.00px;top:341.20px;width:41.00px;height:1.00px;background:repeating-linear-gradient(90deg,#d9d9d9 0 4.5px,transparent 4.5px 6.5px,#d9d9d9 6.5px 8px,transparent 8px 9.8px);"></div>
<div style="left:579.00px;top:316.00px;width:41.00px;height:26.20px;border-right:1px solid #dcdcdc;box-sizing:border-box;"></div>
<div style="left:579.00px;top:328.30px;width:41.00px;height:1.00px;background:repeating-linear-gradient(90deg,#d9d9d9 0 4.5px,transparent 4.5px 6.5px,#d9d9d9 6.5px 8px,transparent 8px 9.8px);"></div>
<div style="left:579.00px;top:341.20px;width:41.00px;height:1.00px;background:repeating-linear-gradient(90deg,#d9d9d9 0 4.5px,transparent 4.5px 6.5px,#d9d9d9 6.5px 8px,transparent 8px 9.8px);"></div>
<div style="left:620.00px;top:316.00px;width:41.00px;height:26.20px;border-right:1px solid #dcdcdc;box-sizing:border-box;"></div>
<div style="left:620.00px;top:328.30px;width:41.00px;height:1.00px;background:repeating-linear-gradient(90deg,#d9d9d9 0 4.5px,transparent 4.5px 6.5px,#d9d9d9 6.5px 8px,transparent 8px 9.8px);"></div>
<div style="left:620.00px;top:341.20px;width:41.00px;height:1.00px;background:repeating-linear-gradient(90deg,#d9d9d9 0 4.5px,transparent 4.5px 6.5px,#d9d9d9 6.5px 8px,transparent 8px 9.8px);"></div>
<div style="left:661.00px;top:316.00px;width:41.00px;height:26.20px;border-right:1px solid #dcdcdc;box-sizing:border-box;"></div>
<div style="left:661.00px;top:328.30px;width:41.00px;height:1.00px;background:repeating-linear-gradient(90deg,#d9d9d9 0 4.5px,transparent 4.5px 6.5px,#d9d9d9 6.5px 8px,transparent 8px 9.8px);"></div>
<div style="left:661.00px;top:341.20px;width:41.00px;height:1.00px;background:repeating-linear-gradient(90deg,#d9d9d9 0 4.5px,transparent 4.5px 6.5px,#d9d9d9 6.5px 8px,transparent 8px 9.8px);"></div>
<div style="left:702.00px;top:316.00px;width:41.00px;height:26.20px;border-right:1px solid #dcdcdc;box-sizing:border-box;"></div>
<div style="left:702.00px;top:328.30px;width:41.00px;height:1.00px;background:repeating-linear-gradient(90deg,#d9d9d9 0 4.5px,transparent 4.5px 6.5px,#d9d9d9 6.5px 8px,transparent 8px 9.8px);"></div>
<div style="left:702.00px;top:341.20px;width:41.00px;height:1.00px;background:repeating-linear-gradient(90deg,#d9d9d9 0 4.5px,transparent 4.5px 6.5px,#d9d9d9 6.5px 8px,transparent 8px 9.8px);"></div>
<div style="left:743.00px;top:316.00px;width:41.00px;height:26.20px;border-right:1px solid #dcdcdc;box-sizing:border-box;"></div>
<div style="left:743.00px;top:328.30px;width:41.00px;height:1.00px;background:repeating-linear-gradient(90deg,#d9d9d9 0 4.5px,transparent 4.5px 6.5px,#d9d9d9 6.5px 8px,transparent 8px 9.8px);"></div>
<div style="left:743.00px;top:341.20px;width:41.00px;height:1.00px;background:repeating-linear-gradient(90deg,#d9d9d9 0 4.5px,transparent 4.5px 6.5px,#d9d9d9 6.5px 8px,transparent 8px 9.8px);"></div>
<div style="left:7.00px;top:342.20px;width:1987.00px;height:26.20px;background:#fff;"></div>
<div style="left:7.00px;top:342.20px;width:84.50px;height:26.20px;border-right:1px solid #d2d2d2;border-bottom:1px solid #d2d2d2;box-sizing:border-box;"></div>
<div style="left:7.00px;top:342.20px;width:84.50px;height:26.20px;display:flex;align-items:center;justify-content:center;white-space:nowrap;font-size:9px;letter-spacing:-0.55px;color:#666;">社員１０８</div>
<div style="left:91.50px;top:342.20px;width:53.50px;height:26.20px;border-right:1px solid #d2d2d2;border-bottom:1px solid #d2d2d2;box-sizing:border-box;"></div>
<div style="left:91.50px;top:342.20px;width:53.50px;height:26.20px;display:flex;align-items:center;justify-content:center;white-space:nowrap;font-size:9px;letter-spacing:-0.55px;color:#666;">車掌</div>
<div style="left:145.00px;top:342.20px;width:53.00px;height:26.20px;border-right:1px solid #d2d2d2;border-bottom:1px solid #d2d2d2;box-sizing:border-box;"></div>
<div style="left:145.00px;top:342.20px;width:53.00px;height:26.20px;display:flex;align-items:center;justify-content:center;white-space:nowrap;font-size:9px;letter-spacing:-0.55px;color:#666;">0000108</div>
<div style="left:198.00px;top:342.20px;width:53.00px;height:26.20px;border-right:1px solid #d2d2d2;border-bottom:1px solid #d2d2d2;box-sizing:border-box;"></div>
<div style="left:198.00px;top:342.20px;width:53.00px;height:26.20px;display:flex;align-items:center;justify-content:center;white-space:nowrap;font-size:9px;letter-spacing:-0.55px;color:#666;">A108</div>
<div class="tri" style="left:145.00px;top:342.20px;border-top:3px solid #1e8a3a;border-right:3px solid transparent"></div>
<div style="left:251.00px;top:342.20px;width:41.00px;height:26.20px;border-right:1px solid #dcdcdc;box-sizing:border-box;"></div>
<div style="left:251.00px;top:354.50px;width:41.00px;height:1.00px;background:repeating-linear-gradient(90deg,#d9d9d9 0 4.5px,transparent 4.5px 6.5px,#d9d9d9 6.5px 8px,transparent 8px 9.8px);"></div>
<div style="left:251.00px;top:367.40px;width:41.00px;height:1.00px;background:repeating-linear-gradient(90deg,#d9d9d9 0 4.5px,transparent 4.5px 6.5px,#d9d9d9 6.5px 8px,transparent 8px 9.8px);"></div>
<div style="left:292.00px;top:342.20px;width:41.00px;height:26.20px;border-right:1px solid #dcdcdc;box-sizing:border-box;"></div>
<div style="left:292.00px;top:354.50px;width:41.00px;height:1.00px;background:repeating-linear-gradient(90deg,#d9d9d9 0 4.5px,transparent 4.5px 6.5px,#d9d9d9 6.5px 8px,transparent 8px 9.8px);"></div>
<div style="left:292.00px;top:367.40px;width:41.00px;height:1.00px;background:repeating-linear-gradient(90deg,#d9d9d9 0 4.5px,transparent 4.5px 6.5px,#d9d9d9 6.5px 8px,transparent 8px 9.8px);"></div>
<div style="left:333.00px;top:342.20px;width:41.00px;height:26.20px;border-right:1px solid #dcdcdc;box-sizing:border-box;"></div>
<div style="left:333.00px;top:354.50px;width:41.00px;height:1.00px;background:repeating-linear-gradient(90deg,#d9d9d9 0 4.5px,transparent 4.5px 6.5px,#d9d9d9 6.5px 8px,transparent 8px 9.8px);"></div>
<div style="left:333.00px;top:367.40px;width:41.00px;height:1.00px;background:repeating-linear-gradient(90deg,#d9d9d9 0 4.5px,transparent 4.5px 6.5px,#d9d9d9 6.5px 8px,transparent 8px 9.8px);"></div>
<div style="left:374.00px;top:342.20px;width:41.00px;height:26.20px;border-right:1px solid #dcdcdc;box-sizing:border-box;"></div>
<div style="left:374.00px;top:354.50px;width:41.00px;height:1.00px;background:repeating-linear-gradient(90deg,#d9d9d9 0 4.5px,transparent 4.5px 6.5px,#d9d9d9 6.5px 8px,transparent 8px 9.8px);"></div>
<div style="left:374.00px;top:367.40px;width:41.00px;height:1.00px;background:repeating-linear-gradient(90deg,#d9d9d9 0 4.5px,transparent 4.5px 6.5px,#d9d9d9 6.5px 8px,transparent 8px 9.8px);"></div>
<div style="left:415.00px;top:342.20px;width:41.00px;height:26.20px;border-right:1px solid #dcdcdc;box-sizing:border-box;"></div>
<div style="left:415.00px;top:354.50px;width:41.00px;height:1.00px;background:repeating-linear-gradient(90deg,#d9d9d9 0 4.5px,transparent 4.5px 6.5px,#d9d9d9 6.5px 8px,transparent 8px 9.8px);"></div>
<div style="left:415.00px;top:367.40px;width:41.00px;height:1.00px;background:repeating-linear-gradient(90deg,#d9d9d9 0 4.5px,transparent 4.5px 6.5px,#d9d9d9 6.5px 8px,transparent 8px 9.8px);"></div>
<div style="left:456.00px;top:342.20px;width:41.00px;height:26.20px;border-right:1px solid #dcdcdc;box-sizing:border-box;"></div>
<div style="left:456.00px;top:354.50px;width:41.00px;height:1.00px;background:repeating-linear-gradient(90deg,#d9d9d9 0 4.5px,transparent 4.5px 6.5px,#d9d9d9 6.5px 8px,transparent 8px 9.8px);"></div>
<div style="left:456.00px;top:367.40px;width:41.00px;height:1.00px;background:repeating-linear-gradient(90deg,#d9d9d9 0 4.5px,transparent 4.5px 6.5px,#d9d9d9 6.5px 8px,transparent 8px 9.8px);"></div>
<div style="left:497.00px;top:342.20px;width:41.00px;height:26.20px;border-right:1px solid #dcdcdc;box-sizing:border-box;"></div>
<div style="left:497.00px;top:354.50px;width:41.00px;height:1.00px;background:repeating-linear-gradient(90deg,#d9d9d9 0 4.5px,transparent 4.5px 6.5px,#d9d9d9 6.5px 8px,transparent 8px 9.8px);"></div>
<div style="left:497.00px;top:367.40px;width:41.00px;height:1.00px;background:repeating-linear-gradient(90deg,#d9d9d9 0 4.5px,transparent 4.5px 6.5px,#d9d9d9 6.5px 8px,transparent 8px 9.8px);"></div>
<div style="left:538.00px;top:342.20px;width:41.00px;height:26.20px;border-right:1px solid #dcdcdc;box-sizing:border-box;"></div>
<div style="left:538.00px;top:354.50px;width:41.00px;height:1.00px;background:repeating-linear-gradient(90deg,#d9d9d9 0 4.5px,transparent 4.5px 6.5px,#d9d9d9 6.5px 8px,transparent 8px 9.8px);"></div>
<div style="left:538.00px;top:367.40px;width:41.00px;height:1.00px;background:repeating-linear-gradient(90deg,#d9d9d9 0 4.5px,transparent 4.5px 6.5px,#d9d9d9 6.5px 8px,transparent 8px 9.8px);"></div>
<div style="left:579.00px;top:342.20px;width:41.00px;height:26.20px;border-right:1px solid #dcdcdc;box-sizing:border-box;"></div>
<div style="left:579.00px;top:354.50px;width:41.00px;height:1.00px;background:repeating-linear-gradient(90deg,#d9d9d9 0 4.5px,transparent 4.5px 6.5px,#d9d9d9 6.5px 8px,transparent 8px 9.8px);"></div>
<div style="left:579.00px;top:367.40px;width:41.00px;height:1.00px;background:repeating-linear-gradient(90deg,#d9d9d9 0 4.5px,transparent 4.5px 6.5px,#d9d9d9 6.5px 8px,transparent 8px 9.8px);"></div>
<div style="left:620.00px;top:342.20px;width:41.00px;height:26.20px;border-right:1px solid #dcdcdc;box-sizing:border-box;"></div>
<div style="left:620.00px;top:354.50px;width:41.00px;height:1.00px;background:repeating-linear-gradient(90deg,#d9d9d9 0 4.5px,transparent 4.5px 6.5px,#d9d9d9 6.5px 8px,transparent 8px 9.8px);"></div>
<div style="left:620.00px;top:367.40px;width:41.00px;height:1.00px;background:repeating-linear-gradient(90deg,#d9d9d9 0 4.5px,transparent 4.5px 6.5px,#d9d9d9 6.5px 8px,transparent 8px 9.8px);"></div>
<div style="left:661.00px;top:342.20px;width:41.00px;height:26.20px;border-right:1px solid #dcdcdc;box-sizing:border-box;"></div>
<div style="left:661.00px;top:354.50px;width:41.00px;height:1.00px;background:repeating-linear-gradient(90deg,#d9d9d9 0 4.5px,transparent 4.5px 6.5px,#d9d9d9 6.5px 8px,transparent 8px 9.8px);"></div>
<div style="left:661.00px;top:367.40px;width:41.00px;height:1.00px;background:repeating-linear-gradient(90deg,#d9d9d9 0 4.5px,transparent 4.5px 6.5px,#d9d9d9 6.5px 8px,transparent 8px 9.8px);"></div>
<div style="left:702.00px;top:342.20px;width:41.00px;height:26.20px;border-right:1px solid #dcdcdc;box-sizing:border-box;"></div>
<div style="left:702.00px;top:354.50px;width:41.00px;height:1.00px;background:repeating-linear-gradient(90deg,#d9d9d9 0 4.5px,transparent 4.5px 6.5px,#d9d9d9 6.5px 8px,transparent 8px 9.8px);"></div>
<div style="left:702.00px;top:367.40px;width:41.00px;height:1.00px;background:repeating-linear-gradient(90deg,#d9d9d9 0 4.5px,transparent 4.5px 6.5px,#d9d9d9 6.5px 8px,transparent 8px 9.8px);"></div>
<div style="left:743.00px;top:342.20px;width:41.00px;height:26.20px;border-right:1px solid #dcdcdc;box-sizing:border-box;"></div>
<div style="left:743.00px;top:354.50px;width:41.00px;height:1.00px;background:repeating-linear-gradient(90deg,#d9d9d9 0 4.5px,transparent 4.5px 6.5px,#d9d9d9 6.5px 8px,transparent 8px 9.8px);"></div>
<div style="left:743.00px;top:367.40px;width:41.00px;height:1.00px;background:repeating-linear-gradient(90deg,#d9d9d9 0 4.5px,transparent 4.5px 6.5px,#d9d9d9 6.5px 8px,transparent 8px 9.8px);"></div>
<div style="left:7.00px;top:368.40px;width:1987.00px;height:18.60px;background:#faeddd;"></div>
<div style="left:7.00px;top:368.40px;width:84.50px;height:18.60px;border-right:1px solid #d2d2d2;border-bottom:1px solid #d2d2d2;box-sizing:border-box;"></div>
<div style="left:7.00px;top:368.40px;width:84.50px;height:26.20px;display:flex;align-items:center;justify-content:center;white-space:nowrap;font-size:9px;letter-spacing:-0.55px;color:#666;">社員１０９</div>
<div style="left:91.50px;top:368.40px;width:53.50px;height:18.60px;border-right:1px solid #d2d2d2;border-bottom:1px solid #d2d2d2;box-sizing:border-box;"></div>
<div style="left:91.50px;top:368.40px;width:53.50px;height:26.20px;display:flex;align-items:center;justify-content:center;white-space:nowrap;font-size:9px;letter-spacing:-0.55px;color:#666;">車掌</div>
<div style="left:145.00px;top:368.40px;width:53.00px;height:18.60px;border-right:1px solid #d2d2d2;border-bottom:1px solid #d2d2d2;box-sizing:border-box;"></div>
<div style="left:145.00px;top:368.40px;width:53.00px;height:26.20px;display:flex;align-items:center;justify-content:center;white-space:nowrap;font-size:9px;letter-spacing:-0.55px;color:#666;">0000109</div>
<div style="left:198.00px;top:368.40px;width:53.00px;height:18.60px;border-right:1px solid #d2d2d2;border-bottom:1px solid #d2d2d2;box-sizing:border-box;"></div>
<div style="left:198.00px;top:368.40px;width:53.00px;height:26.20px;display:flex;align-items:center;justify-content:center;white-space:nowrap;font-size:9px;letter-spacing:-0.55px;color:#666;">A109</div>
<div class="tri" style="left:145.00px;top:368.40px;border-top:3px solid #1e8a3a;border-right:3px solid transparent"></div>
<div style="left:251.00px;top:368.40px;width:41.00px;height:18.60px;border-right:1px solid #dcdcdc;box-sizing:border-box;"></div>
<div style="left:251.00px;top:380.70px;width:41.00px;height:1.00px;background:repeating-linear-gradient(90deg,#d9d9d9 0 4.5px,transparent 4.5px 6.5px,#d9d9d9 6.5px 8px,transparent 8px 9.8px);"></div>
<div style="left:292.00px;top:368.40px;width:41.00px;height:18.60px;border-right:1px solid #dcdcdc;box-sizing:border-box;"></div>
<div style="left:292.00px;top:380.70px;width:41.00px;height:1.00px;background:repeating-linear-gradient(90deg,#d9d9d9 0 4.5px,transparent 4.5px 6.5px,#d9d9d9 6.5px 8px,transparent 8px 9.8px);"></div>
<div style="left:333.00px;top:368.40px;width:41.00px;height:18.60px;border-right:1px solid #dcdcdc;box-sizing:border-box;"></div>
<div style="left:333.00px;top:380.70px;width:41.00px;height:1.00px;background:repeating-linear-gradient(90deg,#d9d9d9 0 4.5px,transparent 4.5px 6.5px,#d9d9d9 6.5px 8px,transparent 8px 9.8px);"></div>
<div style="left:374.00px;top:368.40px;width:41.00px;height:18.60px;border-right:1px solid #dcdcdc;box-sizing:border-box;"></div>
<div style="left:374.00px;top:380.70px;width:41.00px;height:1.00px;background:repeating-linear-gradient(90deg,#d9d9d9 0 4.5px,transparent 4.5px 6.5px,#d9d9d9 6.5px 8px,transparent 8px 9.8px);"></div>
<div style="left:415.00px;top:368.40px;width:41.00px;height:18.60px;border-right:1px solid #dcdcdc;box-sizing:border-box;"></div>
<div style="left:415.00px;top:380.70px;width:41.00px;height:1.00px;background:repeating-linear-gradient(90deg,#d9d9d9 0 4.5px,transparent 4.5px 6.5px,#d9d9d9 6.5px 8px,transparent 8px 9.8px);"></div>
<div style="left:456.00px;top:368.40px;width:41.00px;height:18.60px;border-right:1px solid #dcdcdc;box-sizing:border-box;"></div>
<div style="left:456.00px;top:380.70px;width:41.00px;height:1.00px;background:repeating-linear-gradient(90deg,#d9d9d9 0 4.5px,transparent 4.5px 6.5px,#d9d9d9 6.5px 8px,transparent 8px 9.8px);"></div>
<div style="left:497.00px;top:368.40px;width:41.00px;height:18.60px;border-right:1px solid #dcdcdc;box-sizing:border-box;"></div>
<div style="left:497.00px;top:380.70px;width:41.00px;height:1.00px;background:repeating-linear-gradient(90deg,#d9d9d9 0 4.5px,transparent 4.5px 6.5px,#d9d9d9 6.5px 8px,transparent 8px 9.8px);"></div>
<div style="left:538.00px;top:368.40px;width:41.00px;height:18.60px;border-right:1px solid #dcdcdc;box-sizing:border-box;"></div>
<div style="left:538.00px;top:380.70px;width:41.00px;height:1.00px;background:repeating-linear-gradient(90deg,#d9d9d9 0 4.5px,transparent 4.5px 6.5px,#d9d9d9 6.5px 8px,transparent 8px 9.8px);"></div>
<div style="left:579.00px;top:368.40px;width:41.00px;height:18.60px;border-right:1px solid #dcdcdc;box-sizing:border-box;"></div>
<div style="left:579.00px;top:380.70px;width:41.00px;height:1.00px;background:repeating-linear-gradient(90deg,#d9d9d9 0 4.5px,transparent 4.5px 6.5px,#d9d9d9 6.5px 8px,transparent 8px 9.8px);"></div>
<div style="left:620.00px;top:368.40px;width:41.00px;height:18.60px;border-right:1px solid #dcdcdc;box-sizing:border-box;"></div>
<div style="left:620.00px;top:380.70px;width:41.00px;height:1.00px;background:repeating-linear-gradient(90deg,#d9d9d9 0 4.5px,transparent 4.5px 6.5px,#d9d9d9 6.5px 8px,transparent 8px 9.8px);"></div>
<div style="left:661.00px;top:368.40px;width:41.00px;height:18.60px;border-right:1px solid #dcdcdc;box-sizing:border-box;"></div>
<div style="left:661.00px;top:380.70px;width:41.00px;height:1.00px;background:repeating-linear-gradient(90deg,#d9d9d9 0 4.5px,transparent 4.5px 6.5px,#d9d9d9 6.5px 8px,transparent 8px 9.8px);"></div>
<div style="left:702.00px;top:368.40px;width:41.00px;height:18.60px;border-right:1px solid #dcdcdc;box-sizing:border-box;"></div>
<div style="left:702.00px;top:380.70px;width:41.00px;height:1.00px;background:repeating-linear-gradient(90deg,#d9d9d9 0 4.5px,transparent 4.5px 6.5px,#d9d9d9 6.5px 8px,transparent 8px 9.8px);"></div>
<div style="left:743.00px;top:368.40px;width:41.00px;height:18.60px;border-right:1px solid #dcdcdc;box-sizing:border-box;"></div>
<div style="left:743.00px;top:380.70px;width:41.00px;height:1.00px;background:repeating-linear-gradient(90deg,#d9d9d9 0 4.5px,transparent 4.5px 6.5px,#d9d9d9 6.5px 8px,transparent 8px 9.8px);"></div>
<div style="left:249.80px;top:120.00px;width:2.00px;height:267.00px;background:#383838;"></div>
<div style="left:7.00px;top:387.00px;width:730.00px;height:15.50px;background:#e3e3e3;"></div>
<div style="left:7.00px;top:400.50px;width:730.00px;height:3.30px;background:#eef1f4;"></div>
<div style="left:7.50px;top:390.50px;width:8.00px;height:8.50px;background:#fff;"></div>
<div class="tri" style="left:10px;top:392.5px;border-right:3px solid #777;border-top:2.5px solid transparent;border-bottom:2.5px solid transparent"></div>
<div style="left:122.50px;top:391.50px;width:127.50px;height:8.00px;background:#fff;border:1px solid #d8d8d8;"></div>
<div style="left:7.00px;top:403.80px;width:730.00px;height:9.80px;background:#dfb274;"></div>
<div style="left:13.00px;top:403.80px;width:181.00px;height:9.80px;display:flex;align-items:center;white-space:nowrap;font-size:7px;color:#4d3b28;">準備完了</div>
</div>
<div class="win" style="left:196px;top:262px;width:739px;height:332px;box-shadow:1px 2px 4px rgba(0,0,0,.16);">
<div style="left:6.50px;top:0.50px;width:85.00px;height:37.50px;background:#e7e7e7;border-right:1px solid #c6c6c6;border-bottom:1px solid #bdbdbd;box-sizing:border-box;"></div>
<div style="left:6.50px;top:2.50px;width:84.00px;height:34.50px;display:flex;align-items:center;justify-content:center;white-space:nowrap;font-size:10px;color:#333;">氏名</div>
<div style="left:80.00px;top:27.00px;width:10.00px;height:9.50px;background:#fff;border:1px solid #f0f0f0;"></div>
<div class="tri" style="left:82.50px;top:30.70px;border-left:2.50px solid transparent;border-right:2.50px solid transparent;border-top:3px solid #34466b"></div>
<div style="left:91.50px;top:0.50px;width:53.20px;height:37.50px;background:#e7e7e7;border-right:1px solid #c6c6c6;border-bottom:1px solid #bdbdbd;box-sizing:border-box;"></div>
<div style="left:91.50px;top:2.50px;width:52.20px;height:34.50px;display:flex;align-items:center;justify-content:center;white-space:nowrap;font-size:10px;color:#333;">役職</div>
<div style="left:133.20px;top:27.00px;width:10.00px;height:9.50px;background:#fff;border:1px solid #f0f0f0;"></div>
<div class="tri" style="left:135.70px;top:30.70px;border-left:2.50px solid transparent;border-right:2.50px solid transparent;border-top:3px solid #34466b"></div>
<div style="left:144.70px;top:0.50px;width:53.10px;height:37.50px;background:#e7e7e7;border-right:1px solid #c6c6c6;border-bottom:1px solid #bdbdbd;box-sizing:border-box;"></div>
<div style="left:144.70px;top:2.50px;width:52.10px;height:34.50px;display:flex;align-items:center;justify-content:center;white-space:nowrap;font-size:10px;color:#333;">社員番号</div>
<div style="left:186.30px;top:27.00px;width:10.00px;height:9.50px;background:#fff;border:1px solid #f0f0f0;"></div>
<div class="tri" style="left:188.80px;top:30.70px;border-left:2.50px solid transparent;border-right:2.50px solid transparent;border-top:3px solid #34466b"></div>
<div style="left:197.80px;top:0.50px;width:52.90px;height:37.50px;background:#e7e7e7;border-right:1px solid #c6c6c6;border-bottom:1px solid #bdbdbd;box-sizing:border-box;"></div>
<div style="left:197.80px;top:2.50px;width:51.90px;height:34.50px;display:flex;align-items:center;justify-content:center;white-space:nowrap;font-size:10px;color:#333;">外部連携</div>
<div style="left:239.20px;top:27.00px;width:10.00px;height:9.50px;background:#fff;border:1px solid #f0f0f0;"></div>
<div class="tri" style="left:241.70px;top:30.70px;border-left:2.50px solid transparent;border-right:2.50px solid transparent;border-top:3px solid #34466b"></div>
<div style="left:5.50px;top:0.50px;width:1.00px;height:209.10px;background:#c8c8c8;"></div>
<div style="left:5.50px;top:-0.50px;width:1797.50px;height:1.00px;background:#c8c8c8;"></div>
<div style="left:250.70px;top:0.50px;width:41.00px;height:37.50px;background:#d5d5d5;border-right:1px solid #c6c6c6;border-bottom:1px solid #c4c4c4;box-sizing:border-box;"></div>
<div style="left:250.70px;top:19.50px;width:41.00px;height:1.00px;background:#d6d6d6;"></div>
<div style="left:250.70px;top:1.50px;width:41.00px;height:18.00px;display:flex;align-items:center;justify-content:center;white-space:nowrap;font-size:9.5px;color:#2f8a4e;font-weight:bold;">1</div>
<div style="left:255.70px;top:20.50px;width:17.00px;height:17.50px;display:flex;align-items:center;white-space:nowrap;font-size:10.5px;color:#2f8a4e;font-weight:bold;">水</div>
<div style="left:273.70px;top:21.00px;width:16.50px;height:16.00px;background:linear-gradient(#fdfdfe,#dfe7f1);border:1px solid #b4b8bf;box-sizing:border-box;border-radius:1px;"></div>
<div class="tri" style="left:278.50px;top:27.50px;border-left:3.50px solid transparent;border-right:3.50px solid transparent;border-top:4px solid #555"></div>
<div style="left:291.70px;top:0.50px;width:41.00px;height:37.50px;background:#e7e7e7;border-right:1px solid #c6c6c6;border-bottom:1px solid #c4c4c4;box-sizing:border-box;"></div>
<div style="left:291.70px;top:19.50px;width:41.00px;height:1.00px;background:#d6d6d6;"></div>
<div style="left:291.70px;top:1.50px;width:41.00px;height:18.00px;display:flex;align-items:center;justify-content:center;white-space:nowrap;font-size:9.5px;color:#444;font-weight:normal;">2</div>
<div style="left:296.70px;top:20.50px;width:17.00px;height:17.50px;display:flex;align-items:center;white-space:nowrap;font-size:10.5px;color:#444;font-weight:normal;">木</div>
<div style="left:314.70px;top:21.00px;width:16.50px;height:16.00px;background:linear-gradient(#fdfdfe,#dfe7f1);border:1px solid #b4b8bf;box-sizing:border-box;border-radius:1px;"></div>
<div class="tri" style="left:319.50px;top:27.50px;border-left:3.50px solid transparent;border-right:3.50px solid transparent;border-top:4px solid #555"></div>
<div style="left:332.70px;top:0.50px;width:41.00px;height:37.50px;background:#e7e7e7;border-right:1px solid #c6c6c6;border-bottom:1px solid #c4c4c4;box-sizing:border-box;"></div>
<div style="left:332.70px;top:19.50px;width:41.00px;height:1.00px;background:#d6d6d6;"></div>
<div style="left:332.70px;top:1.50px;width:41.00px;height:18.00px;display:flex;align-items:center;justify-content:center;white-space:nowrap;font-size:9.5px;color:#444;font-weight:normal;">3</div>
<div style="left:337.70px;top:20.50px;width:17.00px;height:17.50px;display:flex;align-items:center;white-space:nowrap;font-size:10.5px;color:#444;font-weight:normal;">金</div>
<div style="left:355.70px;top:21.00px;width:16.50px;height:16.00px;background:linear-gradient(#fdfdfe,#dfe7f1);border:1px solid #b4b8bf;box-sizing:border-box;border-radius:1px;"></div>
<div class="tri" style="left:360.50px;top:27.50px;border-left:3.50px solid transparent;border-right:3.50px solid transparent;border-top:4px solid #555"></div>
<div style="left:373.70px;top:0.50px;width:41.00px;height:37.50px;background:#e7e7e7;border-right:1px solid #c6c6c6;border-bottom:1px solid #c4c4c4;box-sizing:border-box;"></div>
<div style="left:373.70px;top:19.50px;width:41.00px;height:1.00px;background:#d6d6d6;"></div>
<div style="left:373.70px;top:1.50px;width:41.00px;height:18.00px;display:flex;align-items:center;justify-content:center;white-space:nowrap;font-size:9.5px;color:#5a9bd8;font-weight:normal;">4</div>
<div style="left:378.70px;top:20.50px;width:17.00px;height:17.50px;display:flex;align-items:center;white-space:nowrap;font-size:10.5px;color:#5a9bd8;font-weight:normal;">土</div>
<div style="left:396.70px;top:21.00px;width:16.50px;height:16.00px;background:linear-gradient(#fdfdfe,#dfe7f1);border:1px solid #b4b8bf;box-sizing:border-box;border-radius:1px;"></div>
<div class="tri" style="left:401.50px;top:27.50px;border-left:3.50px solid transparent;border-right:3.50px solid transparent;border-top:4px solid #555"></div>
<div style="left:414.70px;top:0.50px;width:41.00px;height:37.50px;background:#e7e7e7;border-right:1px solid #c6c6c6;border-bottom:1px solid #c4c4c4;box-sizing:border-box;"></div>
<div style="left:414.70px;top:19.50px;width:41.00px;height:1.00px;background:#d6d6d6;"></div>
<div style="left:414.70px;top:1.50px;width:41.00px;height:18.00px;display:flex;align-items:center;justify-content:center;white-space:nowrap;font-size:9.5px;color:#e8383d;font-weight:normal;">5</div>
<div style="left:419.70px;top:20.50px;width:17.00px;height:17.50px;display:flex;align-items:center;white-space:nowrap;font-size:10.5px;color:#e8383d;font-weight:normal;">日</div>
<div style="left:437.70px;top:21.00px;width:16.50px;height:16.00px;background:linear-gradient(#fdfdfe,#dfe7f1);border:1px solid #b4b8bf;box-sizing:border-box;border-radius:1px;"></div>
<div class="tri" style="left:442.50px;top:27.50px;border-left:3.50px solid transparent;border-right:3.50px solid transparent;border-top:4px solid #555"></div>
<div style="left:455.70px;top:0.50px;width:41.00px;height:37.50px;background:#e7e7e7;border-right:1px solid #c6c6c6;border-bottom:1px solid #c4c4c4;box-sizing:border-box;"></div>
<div style="left:455.70px;top:19.50px;width:41.00px;height:1.00px;background:#d6d6d6;"></div>
<div style="left:455.70px;top:1.50px;width:41.00px;height:18.00px;display:flex;align-items:center;justify-content:center;white-space:nowrap;font-size:9.5px;color:#444;font-weight:normal;">6</div>
<div style="left:460.70px;top:20.50px;width:17.00px;height:17.50px;display:flex;align-items:center;white-space:nowrap;font-size:10.5px;color:#444;font-weight:normal;">月</div>
<div style="left:478.70px;top:21.00px;width:16.50px;height:16.00px;background:linear-gradient(#fdfdfe,#dfe7f1);border:1px solid #b4b8bf;box-sizing:border-box;border-radius:1px;"></div>
<div class="tri" style="left:483.50px;top:27.50px;border-left:3.50px solid transparent;border-right:3.50px solid transparent;border-top:4px solid #555"></div>
<div style="left:496.70px;top:0.50px;width:41.00px;height:37.50px;background:#e7e7e7;border-right:1px solid #c6c6c6;border-bottom:1px solid #c4c4c4;box-sizing:border-box;"></div>
<div style="left:496.70px;top:19.50px;width:41.00px;height:1.00px;background:#d6d6d6;"></div>
<div style="left:496.70px;top:1.50px;width:41.00px;height:18.00px;display:flex;align-items:center;justify-content:center;white-space:nowrap;font-size:9.5px;color:#444;font-weight:normal;">7</div>
<div style="left:501.70px;top:20.50px;width:17.00px;height:17.50px;display:flex;align-items:center;white-space:nowrap;font-size:10.5px;color:#444;font-weight:normal;">火</div>
<div style="left:519.70px;top:21.00px;width:16.50px;height:16.00px;background:linear-gradient(#fdfdfe,#dfe7f1);border:1px solid #b4b8bf;box-sizing:border-box;border-radius:1px;"></div>
<div class="tri" style="left:524.50px;top:27.50px;border-left:3.50px solid transparent;border-right:3.50px solid transparent;border-top:4px solid #555"></div>
<div style="left:537.70px;top:0.50px;width:41.00px;height:37.50px;background:#e7e7e7;border-right:1px solid #c6c6c6;border-bottom:1px solid #c4c4c4;box-sizing:border-box;"></div>
<div style="left:537.70px;top:19.50px;width:41.00px;height:1.00px;background:#d6d6d6;"></div>
<div style="left:537.70px;top:1.50px;width:41.00px;height:18.00px;display:flex;align-items:center;justify-content:center;white-space:nowrap;font-size:9.5px;color:#444;font-weight:normal;">8</div>
<div style="left:542.70px;top:20.50px;width:17.00px;height:17.50px;display:flex;align-items:center;white-space:nowrap;font-size:10.5px;color:#444;font-weight:normal;">水</div>
<div style="left:560.70px;top:21.00px;width:16.50px;height:16.00px;background:linear-gradient(#fdfdfe,#dfe7f1);border:1px solid #b4b8bf;box-sizing:border-box;border-radius:1px;"></div>
<div class="tri" style="left:565.50px;top:27.50px;border-left:3.50px solid transparent;border-right:3.50px solid transparent;border-top:4px solid #555"></div>
<div style="left:578.70px;top:0.50px;width:41.00px;height:37.50px;background:#e7e7e7;border-right:1px solid #c6c6c6;border-bottom:1px solid #c4c4c4;box-sizing:border-box;"></div>
<div style="left:578.70px;top:19.50px;width:41.00px;height:1.00px;background:#d6d6d6;"></div>
<div style="left:578.70px;top:1.50px;width:41.00px;height:18.00px;display:flex;align-items:center;justify-content:center;white-space:nowrap;font-size:9.5px;color:#444;font-weight:normal;">9</div>
<div style="left:583.70px;top:20.50px;width:17.00px;height:17.50px;display:flex;align-items:center;white-space:nowrap;font-size:10.5px;color:#444;font-weight:normal;">木</div>
<div style="left:601.70px;top:21.00px;width:16.50px;height:16.00px;background:linear-gradient(#fdfdfe,#dfe7f1);border:1px solid #b4b8bf;box-sizing:border-box;border-radius:1px;"></div>
<div class="tri" style="left:606.50px;top:27.50px;border-left:3.50px solid transparent;border-right:3.50px solid transparent;border-top:4px solid #555"></div>
<div style="left:619.70px;top:0.50px;width:41.00px;height:37.50px;background:#e7e7e7;border-right:1px solid #c6c6c6;border-bottom:1px solid #c4c4c4;box-sizing:border-box;"></div>
<div style="left:619.70px;top:19.50px;width:41.00px;height:1.00px;background:#d6d6d6;"></div>
<div style="left:619.70px;top:1.50px;width:41.00px;height:18.00px;display:flex;align-items:center;justify-content:center;white-space:nowrap;font-size:9.5px;color:#444;font-weight:normal;">10</div>
<div style="left:624.70px;top:20.50px;width:17.00px;height:17.50px;display:flex;align-items:center;white-space:nowrap;font-size:10.5px;color:#444;font-weight:normal;">金</div>
<div style="left:642.70px;top:21.00px;width:16.50px;height:16.00px;background:linear-gradient(#fdfdfe,#dfe7f1);border:1px solid #b4b8bf;box-sizing:border-box;border-radius:1px;"></div>
<div class="tri" style="left:647.50px;top:27.50px;border-left:3.50px solid transparent;border-right:3.50px solid transparent;border-top:4px solid #555"></div>
<div style="left:660.70px;top:0.50px;width:41.00px;height:37.50px;background:#e7e7e7;border-right:1px solid #c6c6c6;border-bottom:1px solid #c4c4c4;box-sizing:border-box;"></div>
<div style="left:660.70px;top:19.50px;width:41.00px;height:1.00px;background:#d6d6d6;"></div>
<div style="left:660.70px;top:1.50px;width:41.00px;height:18.00px;display:flex;align-items:center;justify-content:center;white-space:nowrap;font-size:9.5px;color:#5a9bd8;font-weight:normal;">11</div>
<div style="left:665.70px;top:20.50px;width:17.00px;height:17.50px;display:flex;align-items:center;white-space:nowrap;font-size:10.5px;color:#5a9bd8;font-weight:normal;">土</div>
<div style="left:683.70px;top:21.00px;width:16.50px;height:16.00px;background:linear-gradient(#fdfdfe,#dfe7f1);border:1px solid #b4b8bf;box-sizing:border-box;border-radius:1px;"></div>
<div class="tri" style="left:688.50px;top:27.50px;border-left:3.50px solid transparent;border-right:3.50px solid transparent;border-top:4px solid #555"></div>
<div style="left:701.70px;top:0.50px;width:41.00px;height:37.50px;background:#e7e7e7;border-right:1px solid #c6c6c6;border-bottom:1px solid #c4c4c4;box-sizing:border-box;"></div>
<div style="left:701.70px;top:19.50px;width:41.00px;height:1.00px;background:#d6d6d6;"></div>
<div style="left:701.70px;top:1.50px;width:41.00px;height:18.00px;display:flex;align-items:center;justify-content:center;white-space:nowrap;font-size:9.5px;color:#e8383d;font-weight:normal;">12</div>
<div style="left:706.70px;top:20.50px;width:17.00px;height:17.50px;display:flex;align-items:center;white-space:nowrap;font-size:10.5px;color:#e8383d;font-weight:normal;">日</div>
<div style="left:724.70px;top:21.00px;width:16.50px;height:16.00px;background:linear-gradient(#fdfdfe,#dfe7f1);border:1px solid #b4b8bf;box-sizing:border-box;border-radius:1px;"></div>
<div class="tri" style="left:729.50px;top:27.50px;border-left:3.50px solid transparent;border-right:3.50px solid transparent;border-top:4px solid #555"></div>
<div style="left:742.70px;top:0.50px;width:41.00px;height:37.50px;background:#e7e7e7;border-right:1px solid #c6c6c6;border-bottom:1px solid #c4c4c4;box-sizing:border-box;"></div>
<div style="left:742.70px;top:19.50px;width:41.00px;height:1.00px;background:#d6d6d6;"></div>
<div style="left:742.70px;top:1.50px;width:41.00px;height:18.00px;display:flex;align-items:center;justify-content:center;white-space:nowrap;font-size:9.5px;color:#444;font-weight:normal;"></div>
<div style="left:765.70px;top:21.00px;width:16.50px;height:16.00px;background:linear-gradient(#fdfdfe,#dfe7f1);border:1px solid #b4b8bf;box-sizing:border-box;border-radius:1px;"></div>
<div class="tri" style="left:770.50px;top:27.50px;border-left:3.50px solid transparent;border-right:3.50px solid transparent;border-top:4px solid #555"></div>
<div style="left:250.70px;top:37.00px;width:41.00px;height:1.80px;background:#2f8a4e;"></div>
<div style="left:6.50px;top:38.00px;width:1796.50px;height:26.70px;background:#faeddd;"></div>
<div style="left:6.50px;top:38.00px;width:85.00px;height:26.70px;border-right:1px solid #d2d2d2;border-bottom:1px solid #d2d2d2;box-sizing:border-box;"></div>
<div style="left:6.50px;top:38.00px;width:85.00px;height:26.70px;display:flex;align-items:center;justify-content:center;white-space:nowrap;font-size:9px;letter-spacing:-0.55px;color:#666;">社員 1</div>
<div style="left:91.50px;top:38.00px;width:53.20px;height:26.70px;border-right:1px solid #d2d2d2;border-bottom:1px solid #d2d2d2;box-sizing:border-box;"></div>
<div style="left:91.50px;top:38.00px;width:53.20px;height:26.70px;display:flex;align-items:center;justify-content:center;white-space:nowrap;font-size:9px;letter-spacing:-0.55px;color:#666;">運転士</div>
<div style="left:144.70px;top:38.00px;width:53.10px;height:26.70px;border-right:1px solid #d2d2d2;border-bottom:1px solid #d2d2d2;box-sizing:border-box;"></div>
<div style="left:144.70px;top:38.00px;width:53.10px;height:26.70px;display:flex;align-items:center;justify-content:center;white-space:nowrap;font-size:9px;letter-spacing:-0.55px;color:#666;">0000001</div>
<div style="left:197.80px;top:38.00px;width:52.90px;height:26.70px;border-right:1px solid #d2d2d2;border-bottom:1px solid #d2d2d2;box-sizing:border-box;"></div>
<div style="left:197.80px;top:38.00px;width:52.90px;height:26.70px;display:flex;align-items:center;justify-content:center;white-space:nowrap;font-size:9px;letter-spacing:-0.55px;color:#666;">A001</div>
<div style="left:250.70px;top:38.00px;width:41.00px;height:26.70px;border-right:1px solid #dcdcdc;box-sizing:border-box;"></div>
<div style="left:250.70px;top:50.50px;width:41.00px;height:1.00px;background:repeating-linear-gradient(90deg,#d9d9d9 0 4.5px,transparent 4.5px 6.5px,#d9d9d9 6.5px 8px,transparent 8px 9.8px);"></div>
<div style="left:250.70px;top:63.70px;width:41.00px;height:1.00px;background:repeating-linear-gradient(90deg,#d9d9d9 0 4.5px,transparent 4.5px 6.5px,#d9d9d9 6.5px 8px,transparent 8px 9.8px);"></div>
<div style="left:250.70px;top:39.80px;width:41.00px;height:10.00px;display:flex;align-items:center;justify-content:center;white-space:nowrap;font-size:9px;font-weight:bold;color:#2a2a2a;">X0001</div>
<div style="left:291.70px;top:38.00px;width:41.00px;height:26.70px;border-right:1px solid #dcdcdc;box-sizing:border-box;"></div>
<div style="left:291.70px;top:50.50px;width:41.00px;height:1.00px;background:repeating-linear-gradient(90deg,#d9d9d9 0 4.5px,transparent 4.5px 6.5px,#d9d9d9 6.5px 8px,transparent 8px 9.8px);"></div>
<div style="left:291.70px;top:63.70px;width:41.00px;height:1.00px;background:repeating-linear-gradient(90deg,#d9d9d9 0 4.5px,transparent 4.5px 6.5px,#d9d9d9 6.5px 8px,transparent 8px 9.8px);"></div>
<div style="left:291.70px;top:39.80px;width:41.00px;height:10.00px;display:flex;align-items:center;justify-content:center;white-space:nowrap;font-size:9px;font-weight:bold;color:#2a2a2a;">-</div>
<div style="left:332.70px;top:38.00px;width:41.00px;height:26.70px;border-right:1px solid #dcdcdc;box-sizing:border-box;"></div>
<div style="left:332.70px;top:50.50px;width:41.00px;height:1.00px;background:repeating-linear-gradient(90deg,#d9d9d9 0 4.5px,transparent 4.5px 6.5px,#d9d9d9 6.5px 8px,transparent 8px 9.8px);"></div>
<div style="left:332.70px;top:63.70px;width:41.00px;height:1.00px;background:repeating-linear-gradient(90deg,#d9d9d9 0 4.5px,transparent 4.5px 6.5px,#d9d9d9 6.5px 8px,transparent 8px 9.8px);"></div>
<div style="left:332.70px;top:39.80px;width:41.00px;height:10.00px;display:flex;align-items:center;justify-content:center;white-space:nowrap;font-size:9px;font-weight:bold;color:#2a2a2a;">公休</div>
<div style="left:332.70px;top:52.60px;width:41.00px;height:10.00px;display:flex;align-items:center;justify-content:center;white-space:nowrap;font-size:9px;font-weight:bold;color:#2a2a2a;">年</div>
<div style="left:373.70px;top:38.00px;width:41.00px;height:26.70px;border-right:1px solid #dcdcdc;box-sizing:border-box;"></div>
<div style="left:373.70px;top:50.50px;width:41.00px;height:1.00px;background:repeating-linear-gradient(90deg,#d9d9d9 0 4.5px,transparent 4.5px 6.5px,#d9d9d9 6.5px 8px,transparent 8px 9.8px);"></div>
<div style="left:373.70px;top:63.70px;width:41.00px;height:1.00px;background:repeating-linear-gradient(90deg,#d9d9d9 0 4.5px,transparent 4.5px 6.5px,#d9d9d9 6.5px 8px,transparent 8px 9.8px);"></div>
<div style="left:373.70px;top:39.80px;width:41.00px;height:10.00px;display:flex;align-items:center;justify-content:center;white-space:nowrap;font-size:9px;font-weight:bold;color:#2a2a2a;">特休</div>
<div style="left:373.70px;top:52.60px;width:41.00px;height:10.00px;display:flex;align-items:center;justify-content:center;white-space:nowrap;font-size:9px;font-weight:bold;color:#2a2a2a;">年</div>
<div style="left:414.70px;top:38.00px;width:41.00px;height:26.70px;border-right:1px solid #dcdcdc;box-sizing:border-box;"></div>
<div style="left:414.70px;top:50.50px;width:41.00px;height:1.00px;background:repeating-linear-gradient(90deg,#d9d9d9 0 4.5px,transparent 4.5px 6.5px,#d9d9d9 6.5px 8px,transparent 8px 9.8px);"></div>
<div style="left:414.70px;top:63.70px;width:41.00px;height:1.00px;background:repeating-linear-gradient(90deg,#d9d9d9 0 4.5px,transparent 4.5px 6.5px,#d9d9d9 6.5px 8px,transparent 8px 9.8px);"></div>
<div style="left:414.70px;top:39.80px;width:41.00px;height:10.00px;display:flex;align-items:center;justify-content:center;white-space:nowrap;font-size:9px;font-weight:bold;color:#2a2a2a;">X0003</div>
<div style="left:455.70px;top:38.00px;width:41.00px;height:26.70px;border-right:1px solid #dcdcdc;box-sizing:border-box;"></div>
<div style="left:455.70px;top:50.50px;width:41.00px;height:1.00px;background:repeating-linear-gradient(90deg,#d9d9d9 0 4.5px,transparent 4.5px 6.5px,#d9d9d9 6.5px 8px,transparent 8px 9.8px);"></div>
<div style="left:455.70px;top:63.70px;width:41.00px;height:1.00px;background:repeating-linear-gradient(90deg,#d9d9d9 0 4.5px,transparent 4.5px 6.5px,#d9d9d9 6.5px 8px,transparent 8px 9.8px);"></div>
<div style="left:455.70px;top:39.80px;width:41.00px;height:10.00px;display:flex;align-items:center;justify-content:center;white-space:nowrap;font-size:9px;font-weight:bold;color:#2a2a2a;">-</div>
<div style="left:496.70px;top:38.00px;width:41.00px;height:26.70px;border-right:1px solid #dcdcdc;box-sizing:border-box;"></div>
<div style="left:496.70px;top:50.50px;width:41.00px;height:1.00px;background:repeating-linear-gradient(90deg,#d9d9d9 0 4.5px,transparent 4.5px 6.5px,#d9d9d9 6.5px 8px,transparent 8px 9.8px);"></div>
<div style="left:496.70px;top:63.70px;width:41.00px;height:1.00px;background:repeating-linear-gradient(90deg,#d9d9d9 0 4.5px,transparent 4.5px 6.5px,#d9d9d9 6.5px 8px,transparent 8px 9.8px);"></div>
<div style="left:496.70px;top:39.80px;width:41.00px;height:10.00px;display:flex;align-items:center;justify-content:center;white-space:nowrap;font-size:9px;font-weight:bold;color:#2a2a2a;">X0002</div>
<div style="left:537.70px;top:38.00px;width:41.00px;height:26.70px;border-right:1px solid #dcdcdc;box-sizing:border-box;"></div>
<div style="left:537.70px;top:50.50px;width:41.00px;height:1.00px;background:repeating-linear-gradient(90deg,#d9d9d9 0 4.5px,transparent 4.5px 6.5px,#d9d9d9 6.5px 8px,transparent 8px 9.8px);"></div>
<div style="left:537.70px;top:63.70px;width:41.00px;height:1.00px;background:repeating-linear-gradient(90deg,#d9d9d9 0 4.5px,transparent 4.5px 6.5px,#d9d9d9 6.5px 8px,transparent 8px 9.8px);"></div>
<div style="left:537.70px;top:39.80px;width:41.00px;height:10.00px;display:flex;align-items:center;justify-content:center;white-space:nowrap;font-size:9px;font-weight:bold;color:#2a2a2a;">-</div>
<div style="left:578.70px;top:38.00px;width:41.00px;height:26.70px;border-right:1px solid #dcdcdc;box-sizing:border-box;"></div>
<div style="left:578.70px;top:50.50px;width:41.00px;height:1.00px;background:repeating-linear-gradient(90deg,#d9d9d9 0 4.5px,transparent 4.5px 6.5px,#d9d9d9 6.5px 8px,transparent 8px 9.8px);"></div>
<div style="left:578.70px;top:63.70px;width:41.00px;height:1.00px;background:repeating-linear-gradient(90deg,#d9d9d9 0 4.5px,transparent 4.5px 6.5px,#d9d9d9 6.5px 8px,transparent 8px 9.8px);"></div>
<div style="left:578.70px;top:39.80px;width:41.00px;height:10.00px;display:flex;align-items:center;justify-content:center;white-space:nowrap;font-size:9px;font-weight:bold;color:#2a2a2a;">公休</div>
<div style="left:619.70px;top:38.00px;width:41.00px;height:26.70px;border-right:1px solid #dcdcdc;box-sizing:border-box;"></div>
<div style="left:619.70px;top:50.50px;width:41.00px;height:1.00px;background:repeating-linear-gradient(90deg,#d9d9d9 0 4.5px,transparent 4.5px 6.5px,#d9d9d9 6.5px 8px,transparent 8px 9.8px);"></div>
<div style="left:619.70px;top:63.70px;width:41.00px;height:1.00px;background:repeating-linear-gradient(90deg,#d9d9d9 0 4.5px,transparent 4.5px 6.5px,#d9d9d9 6.5px 8px,transparent 8px 9.8px);"></div>
<div style="left:619.70px;top:39.80px;width:41.00px;height:10.00px;display:flex;align-items:center;justify-content:center;white-space:nowrap;font-size:9px;font-weight:bold;color:#2a2a2a;">特休</div>
<div style="left:660.70px;top:38.00px;width:41.00px;height:26.70px;border-right:1px solid #dcdcdc;box-sizing:border-box;"></div>
<div style="left:660.70px;top:50.50px;width:41.00px;height:1.00px;background:repeating-linear-gradient(90deg,#d9d9d9 0 4.5px,transparent 4.5px 6.5px,#d9d9d9 6.5px 8px,transparent 8px 9.8px);"></div>
<div style="left:660.70px;top:63.70px;width:41.00px;height:1.00px;background:repeating-linear-gradient(90deg,#d9d9d9 0 4.5px,transparent 4.5px 6.5px,#d9d9d9 6.5px 8px,transparent 8px 9.8px);"></div>
<div style="left:660.70px;top:39.80px;width:41.00px;height:10.00px;display:flex;align-items:center;justify-content:center;white-space:nowrap;font-size:9px;font-weight:bold;color:#2a2a2a;">X0001</div>
<div style="left:701.70px;top:38.00px;width:41.00px;height:26.70px;border-right:1px solid #dcdcdc;box-sizing:border-box;"></div>
<div style="left:701.70px;top:50.50px;width:41.00px;height:1.00px;background:repeating-linear-gradient(90deg,#d9d9d9 0 4.5px,transparent 4.5px 6.5px,#d9d9d9 6.5px 8px,transparent 8px 9.8px);"></div>
<div style="left:701.70px;top:63.70px;width:41.00px;height:1.00px;background:repeating-linear-gradient(90deg,#d9d9d9 0 4.5px,transparent 4.5px 6.5px,#d9d9d9 6.5px 8px,transparent 8px 9.8px);"></div>
<div style="left:701.70px;top:39.80px;width:41.00px;height:10.00px;display:flex;align-items:center;justify-content:center;white-space:nowrap;font-size:9px;font-weight:bold;color:#2a2a2a;">-</div>
<div style="left:742.70px;top:38.00px;width:41.00px;height:26.70px;border-right:1px solid #dcdcdc;box-sizing:border-box;"></div>
<div style="left:742.70px;top:50.50px;width:41.00px;height:1.00px;background:repeating-linear-gradient(90deg,#d9d9d9 0 4.5px,transparent 4.5px 6.5px,#d9d9d9 6.5px 8px,transparent 8px 9.8px);"></div>
<div style="left:742.70px;top:63.70px;width:41.00px;height:1.00px;background:repeating-linear-gradient(90deg,#d9d9d9 0 4.5px,transparent 4.5px 6.5px,#d9d9d9 6.5px 8px,transparent 8px 9.8px);"></div>
<div style="left:6.50px;top:64.70px;width:1796.50px;height:26.20px;background:#fff;"></div>
<div style="left:6.50px;top:64.70px;width:85.00px;height:26.20px;border-right:1px solid #d2d2d2;border-bottom:1px solid #d2d2d2;box-sizing:border-box;"></div>
<div style="left:6.50px;top:64.70px;width:85.00px;height:26.20px;display:flex;align-items:center;justify-content:center;white-space:nowrap;font-size:9px;letter-spacing:-0.55px;color:#666;">社員 2</div>
<div style="left:91.50px;top:64.70px;width:53.20px;height:26.20px;border-right:1px solid #d2d2d2;border-bottom:1px solid #d2d2d2;box-sizing:border-box;"></div>
<div style="left:91.50px;top:64.70px;width:53.20px;height:26.20px;display:flex;align-items:center;justify-content:center;white-space:nowrap;font-size:9px;letter-spacing:-0.55px;color:#666;">運転士</div>
<div style="left:144.70px;top:64.70px;width:53.10px;height:26.20px;border-right:1px solid #d2d2d2;border-bottom:1px solid #d2d2d2;box-sizing:border-box;"></div>
<div style="left:144.70px;top:64.70px;width:53.10px;height:26.20px;display:flex;align-items:center;justify-content:center;white-space:nowrap;font-size:9px;letter-spacing:-0.55px;color:#666;">0000002</div>
<div style="left:197.80px;top:64.70px;width:52.90px;height:26.20px;border-right:1px solid #d2d2d2;border-bottom:1px solid #d2d2d2;box-sizing:border-box;"></div>
<div style="left:197.80px;top:64.70px;width:52.90px;height:26.20px;display:flex;align-items:center;justify-content:center;white-space:nowrap;font-size:9px;letter-spacing:-0.55px;color:#666;">A002</div>
<div style="left:250.70px;top:64.70px;width:41.00px;height:26.20px;border-right:1px solid #dcdcdc;box-sizing:border-box;"></div>
<div style="left:250.70px;top:76.70px;width:41.00px;height:1.00px;background:repeating-linear-gradient(90deg,#d9d9d9 0 4.5px,transparent 4.5px 6.5px,#d9d9d9 6.5px 8px,transparent 8px 9.8px);"></div>
<div style="left:250.70px;top:89.90px;width:41.00px;height:1.00px;background:repeating-linear-gradient(90deg,#d9d9d9 0 4.5px,transparent 4.5px 6.5px,#d9d9d9 6.5px 8px,transparent 8px 9.8px);"></div>
<div style="left:250.70px;top:66.00px;width:41.00px;height:10.00px;display:flex;align-items:center;justify-content:center;white-space:nowrap;font-size:9px;font-weight:bold;color:#2a2a2a;">-</div>
<div style="left:291.70px;top:64.70px;width:41.00px;height:26.20px;border-right:1px solid #dcdcdc;box-sizing:border-box;"></div>
<div style="left:291.70px;top:76.70px;width:41.00px;height:1.00px;background:repeating-linear-gradient(90deg,#d9d9d9 0 4.5px,transparent 4.5px 6.5px,#d9d9d9 6.5px 8px,transparent 8px 9.8px);"></div>
<div style="left:291.70px;top:89.90px;width:41.00px;height:1.00px;background:repeating-linear-gradient(90deg,#d9d9d9 0 4.5px,transparent 4.5px 6.5px,#d9d9d9 6.5px 8px,transparent 8px 9.8px);"></div>
<div style="left:291.70px;top:66.00px;width:41.00px;height:10.00px;display:flex;align-items:center;justify-content:center;white-space:nowrap;font-size:9px;font-weight:bold;color:#2a2a2a;">公休</div>
<div style="left:332.70px;top:64.70px;width:41.00px;height:26.20px;border-right:1px solid #dcdcdc;box-sizing:border-box;"></div>
<div style="left:332.70px;top:76.70px;width:41.00px;height:1.00px;background:repeating-linear-gradient(90deg,#d9d9d9 0 4.5px,transparent 4.5px 6.5px,#d9d9d9 6.5px 8px,transparent 8px 9.8px);"></div>
<div style="left:332.70px;top:89.90px;width:41.00px;height:1.00px;background:repeating-linear-gradient(90deg,#d9d9d9 0 4.5px,transparent 4.5px 6.5px,#d9d9d9 6.5px 8px,transparent 8px 9.8px);"></div>
<div style="left:332.70px;top:66.00px;width:41.00px;height:10.00px;display:flex;align-items:center;justify-content:center;white-space:nowrap;font-size:9px;font-weight:bold;color:#2a2a2a;">特休</div>
<div style="left:373.70px;top:64.70px;width:41.00px;height:26.20px;border-right:1px solid #dcdcdc;box-sizing:border-box;"></div>
<div style="left:373.70px;top:76.70px;width:41.00px;height:1.00px;background:repeating-linear-gradient(90deg,#d9d9d9 0 4.5px,transparent 4.5px 6.5px,#d9d9d9 6.5px 8px,transparent 8px 9.8px);"></div>
<div style="left:373.70px;top:89.90px;width:41.00px;height:1.00px;background:repeating-linear-gradient(90deg,#d9d9d9 0 4.5px,transparent 4.5px 6.5px,#d9d9d9 6.5px 8px,transparent 8px 9.8px);"></div>
<div style="left:373.70px;top:66.00px;width:41.00px;height:10.00px;display:flex;align-items:center;justify-content:center;white-space:nowrap;font-size:9px;font-weight:bold;color:#2a2a2a;">X0003</div>
<div style="left:414.70px;top:64.70px;width:41.00px;height:26.20px;border-right:1px solid #dcdcdc;box-sizing:border-box;"></div>
<div style="left:414.70px;top:76.70px;width:41.00px;height:1.00px;background:repeating-linear-gradient(90deg,#d9d9d9 0 4.5px,transparent 4.5px 6.5px,#d9d9d9 6.5px 8px,transparent 8px 9.8px);"></div>
<div style="left:414.70px;top:89.90px;width:41.00px;height:1.00px;background:repeating-linear-gradient(90deg,#d9d9d9 0 4.5px,transparent 4.5px 6.5px,#d9d9d9 6.5px 8px,transparent 8px 9.8px);"></div>
<div style="left:414.70px;top:66.00px;width:41.00px;height:10.00px;display:flex;align-items:center;justify-content:center;white-space:nowrap;font-size:9px;font-weight:bold;color:#2a2a2a;">-</div>
<div style="left:455.70px;top:64.70px;width:41.00px;height:26.20px;border-right:1px solid #dcdcdc;box-sizing:border-box;"></div>
<div style="left:455.70px;top:76.70px;width:41.00px;height:1.00px;background:repeating-linear-gradient(90deg,#d9d9d9 0 4.5px,transparent 4.5px 6.5px,#d9d9d9 6.5px 8px,transparent 8px 9.8px);"></div>
<div style="left:455.70px;top:89.90px;width:41.00px;height:1.00px;background:repeating-linear-gradient(90deg,#d9d9d9 0 4.5px,transparent 4.5px 6.5px,#d9d9d9 6.5px 8px,transparent 8px 9.8px);"></div>
<div style="left:455.70px;top:66.00px;width:41.00px;height:10.00px;display:flex;align-items:center;justify-content:center;white-space:nowrap;font-size:9px;font-weight:bold;color:#2a2a2a;">X0002</div>
<div style="left:496.70px;top:64.70px;width:41.00px;height:26.20px;border-right:1px solid #dcdcdc;box-sizing:border-box;"></div>
<div style="left:496.70px;top:76.70px;width:41.00px;height:1.00px;background:repeating-linear-gradient(90deg,#d9d9d9 0 4.5px,transparent 4.5px 6.5px,#d9d9d9 6.5px 8px,transparent 8px 9.8px);"></div>
<div style="left:496.70px;top:89.90px;width:41.00px;height:1.00px;background:repeating-linear-gradient(90deg,#d9d9d9 0 4.5px,transparent 4.5px 6.5px,#d9d9d9 6.5px 8px,transparent 8px 9.8px);"></div>
<div style="left:496.70px;top:66.00px;width:41.00px;height:10.00px;display:flex;align-items:center;justify-content:center;white-space:nowrap;font-size:9px;font-weight:bold;color:#2a2a2a;">-</div>
<div style="left:537.70px;top:64.70px;width:41.00px;height:26.20px;border-right:1px solid #dcdcdc;box-sizing:border-box;"></div>
<div style="left:537.70px;top:76.70px;width:41.00px;height:1.00px;background:repeating-linear-gradient(90deg,#d9d9d9 0 4.5px,transparent 4.5px 6.5px,#d9d9d9 6.5px 8px,transparent 8px 9.8px);"></div>
<div style="left:537.70px;top:89.90px;width:41.00px;height:1.00px;background:repeating-linear-gradient(90deg,#d9d9d9 0 4.5px,transparent 4.5px 6.5px,#d9d9d9 6.5px 8px,transparent 8px 9.8px);"></div>
<div style="left:537.70px;top:66.00px;width:41.00px;height:10.00px;display:flex;align-items:center;justify-content:center;white-space:nowrap;font-size:9px;font-weight:bold;color:#2a2a2a;">公休</div>
<div style="left:578.70px;top:64.70px;width:41.00px;height:26.20px;border-right:1px solid #dcdcdc;box-sizing:border-box;"></div>
<div style="left:578.70px;top:76.70px;width:41.00px;height:1.00px;background:repeating-linear-gradient(90deg,#d9d9d9 0 4.5px,transparent 4.5px 6.5px,#d9d9d9 6.5px 8px,transparent 8px 9.8px);"></div>
<div style="left:578.70px;top:89.90px;width:41.00px;height:1.00px;background:repeating-linear-gradient(90deg,#d9d9d9 0 4.5px,transparent 4.5px 6.5px,#d9d9d9 6.5px 8px,transparent 8px 9.8px);"></div>
<div style="left:578.70px;top:66.00px;width:41.00px;height:10.00px;display:flex;align-items:center;justify-content:center;white-space:nowrap;font-size:9px;font-weight:bold;color:#2a2a2a;">特休</div>
<div style="left:619.70px;top:64.70px;width:41.00px;height:26.20px;border-right:1px solid #dcdcdc;box-sizing:border-box;"></div>
<div style="left:619.70px;top:76.70px;width:41.00px;height:1.00px;background:repeating-linear-gradient(90deg,#d9d9d9 0 4.5px,transparent 4.5px 6.5px,#d9d9d9 6.5px 8px,transparent 8px 9.8px);"></div>
<div style="left:619.70px;top:89.90px;width:41.00px;height:1.00px;background:repeating-linear-gradient(90deg,#d9d9d9 0 4.5px,transparent 4.5px 6.5px,#d9d9d9 6.5px 8px,transparent 8px 9.8px);"></div>
<div style="left:619.70px;top:66.00px;width:41.00px;height:10.00px;display:flex;align-items:center;justify-content:center;white-space:nowrap;font-size:9px;font-weight:bold;color:#2a2a2a;">X0001</div>
<div style="left:660.70px;top:64.70px;width:41.00px;height:26.20px;border-right:1px solid #dcdcdc;box-sizing:border-box;"></div>
<div style="left:660.70px;top:76.70px;width:41.00px;height:1.00px;background:repeating-linear-gradient(90deg,#d9d9d9 0 4.5px,transparent 4.5px 6.5px,#d9d9d9 6.5px 8px,transparent 8px 9.8px);"></div>
<div style="left:660.70px;top:89.90px;width:41.00px;height:1.00px;background:repeating-linear-gradient(90deg,#d9d9d9 0 4.5px,transparent 4.5px 6.5px,#d9d9d9 6.5px 8px,transparent 8px 9.8px);"></div>
<div style="left:660.70px;top:66.00px;width:41.00px;height:10.00px;display:flex;align-items:center;justify-content:center;white-space:nowrap;font-size:9px;font-weight:bold;color:#2a2a2a;">-</div>
<div style="left:701.70px;top:64.70px;width:41.00px;height:26.20px;border-right:1px solid #dcdcdc;box-sizing:border-box;"></div>
<div style="left:701.70px;top:76.70px;width:41.00px;height:1.00px;background:repeating-linear-gradient(90deg,#d9d9d9 0 4.5px,transparent 4.5px 6.5px,#d9d9d9 6.5px 8px,transparent 8px 9.8px);"></div>
<div style="left:701.70px;top:89.90px;width:41.00px;height:1.00px;background:repeating-linear-gradient(90deg,#d9d9d9 0 4.5px,transparent 4.5px 6.5px,#d9d9d9 6.5px 8px,transparent 8px 9.8px);"></div>
<div style="left:701.70px;top:66.00px;width:41.00px;height:10.00px;display:flex;align-items:center;justify-content:center;white-space:nowrap;font-size:9px;font-weight:bold;color:#2a2a2a;">X0002</div>
<div style="left:742.70px;top:64.70px;width:41.00px;height:26.20px;border-right:1px solid #dcdcdc;box-sizing:border-box;"></div>
<div style="left:742.70px;top:76.70px;width:41.00px;height:1.00px;background:repeating-linear-gradient(90deg,#d9d9d9 0 4.5px,transparent 4.5px 6.5px,#d9d9d9 6.5px 8px,transparent 8px 9.8px);"></div>
<div style="left:742.70px;top:89.90px;width:41.00px;height:1.00px;background:repeating-linear-gradient(90deg,#d9d9d9 0 4.5px,transparent 4.5px 6.5px,#d9d9d9 6.5px 8px,transparent 8px 9.8px);"></div>
<div style="left:6.50px;top:90.90px;width:1796.50px;height:26.20px;background:#faeddd;"></div>
<div style="left:6.50px;top:90.90px;width:85.00px;height:26.20px;border-right:1px solid #d2d2d2;border-bottom:1px solid #d2d2d2;box-sizing:border-box;"></div>
<div style="left:6.50px;top:90.90px;width:85.00px;height:26.20px;display:flex;align-items:center;justify-content:center;white-space:nowrap;font-size:9px;letter-spacing:-0.55px;color:#666;">社員 3</div>
<div style="left:91.50px;top:90.90px;width:53.20px;height:26.20px;border-right:1px solid #d2d2d2;border-bottom:1px solid #d2d2d2;box-sizing:border-box;"></div>
<div style="left:91.50px;top:90.90px;width:53.20px;height:26.20px;display:flex;align-items:center;justify-content:center;white-space:nowrap;font-size:9px;letter-spacing:-0.55px;color:#666;">運転士</div>
<div style="left:144.70px;top:90.90px;width:53.10px;height:26.20px;border-right:1px solid #d2d2d2;border-bottom:1px solid #d2d2d2;box-sizing:border-box;"></div>
<div style="left:144.70px;top:90.90px;width:53.10px;height:26.20px;display:flex;align-items:center;justify-content:center;white-space:nowrap;font-size:9px;letter-spacing:-0.55px;color:#666;">0000003</div>
<div style="left:197.80px;top:90.90px;width:52.90px;height:26.20px;border-right:1px solid #d2d2d2;border-bottom:1px solid #d2d2d2;box-sizing:border-box;"></div>
<div style="left:197.80px;top:90.90px;width:52.90px;height:26.20px;display:flex;align-items:center;justify-content:center;white-space:nowrap;font-size:9px;letter-spacing:-0.55px;color:#666;">A003</div>
<div style="left:250.70px;top:90.90px;width:41.00px;height:26.20px;border-right:1px solid #dcdcdc;box-sizing:border-box;"></div>
<div style="left:250.70px;top:102.90px;width:41.00px;height:1.00px;background:repeating-linear-gradient(90deg,#d9d9d9 0 4.5px,transparent 4.5px 6.5px,#d9d9d9 6.5px 8px,transparent 8px 9.8px);"></div>
<div style="left:250.70px;top:116.10px;width:41.00px;height:1.00px;background:repeating-linear-gradient(90deg,#d9d9d9 0 4.5px,transparent 4.5px 6.5px,#d9d9d9 6.5px 8px,transparent 8px 9.8px);"></div>
<div style="left:250.70px;top:92.20px;width:41.00px;height:10.00px;display:flex;align-items:center;justify-content:center;white-space:nowrap;font-size:9px;font-weight:bold;color:#2a2a2a;">公休</div>
<div style="left:291.70px;top:90.90px;width:41.00px;height:26.20px;border-right:1px solid #dcdcdc;box-sizing:border-box;"></div>
<div style="left:291.70px;top:102.90px;width:41.00px;height:1.00px;background:repeating-linear-gradient(90deg,#d9d9d9 0 4.5px,transparent 4.5px 6.5px,#d9d9d9 6.5px 8px,transparent 8px 9.8px);"></div>
<div style="left:291.70px;top:116.10px;width:41.00px;height:1.00px;background:repeating-linear-gradient(90deg,#d9d9d9 0 4.5px,transparent 4.5px 6.5px,#d9d9d9 6.5px 8px,transparent 8px 9.8px);"></div>
<div style="left:291.70px;top:92.20px;width:41.00px;height:10.00px;display:flex;align-items:center;justify-content:center;white-space:nowrap;font-size:9px;font-weight:bold;color:#2a2a2a;">特休</div>
<div style="left:332.70px;top:90.90px;width:41.00px;height:26.20px;border-right:1px solid #dcdcdc;box-sizing:border-box;"></div>
<div style="left:332.70px;top:102.90px;width:41.00px;height:1.00px;background:repeating-linear-gradient(90deg,#d9d9d9 0 4.5px,transparent 4.5px 6.5px,#d9d9d9 6.5px 8px,transparent 8px 9.8px);"></div>
<div style="left:332.70px;top:116.10px;width:41.00px;height:1.00px;background:repeating-linear-gradient(90deg,#d9d9d9 0 4.5px,transparent 4.5px 6.5px,#d9d9d9 6.5px 8px,transparent 8px 9.8px);"></div>
<div style="left:332.70px;top:92.20px;width:41.00px;height:10.00px;display:flex;align-items:center;justify-content:center;white-space:nowrap;font-size:9px;font-weight:bold;color:#2a2a2a;">X0003</div>
<div style="left:373.70px;top:90.90px;width:41.00px;height:26.20px;border-right:1px solid #dcdcdc;box-sizing:border-box;"></div>
<div style="left:373.70px;top:102.90px;width:41.00px;height:1.00px;background:repeating-linear-gradient(90deg,#d9d9d9 0 4.5px,transparent 4.5px 6.5px,#d9d9d9 6.5px 8px,transparent 8px 9.8px);"></div>
<div style="left:373.70px;top:116.10px;width:41.00px;height:1.00px;background:repeating-linear-gradient(90deg,#d9d9d9 0 4.5px,transparent 4.5px 6.5px,#d9d9d9 6.5px 8px,transparent 8px 9.8px);"></div>
<div style="left:373.70px;top:92.20px;width:41.00px;height:10.00px;display:flex;align-items:center;justify-content:center;white-space:nowrap;font-size:9px;font-weight:bold;color:#2a2a2a;">-</div>
<div style="left:414.70px;top:90.90px;width:41.00px;height:26.20px;border-right:1px solid #dcdcdc;box-sizing:border-box;"></div>
<div style="left:414.70px;top:102.90px;width:41.00px;height:1.00px;background:repeating-linear-gradient(90deg,#d9d9d9 0 4.5px,transparent 4.5px 6.5px,#d9d9d9 6.5px 8px,transparent 8px 9.8px);"></div>
<div style="left:414.70px;top:116.10px;width:41.00px;height:1.00px;background:repeating-linear-gradient(90deg,#d9d9d9 0 4.5px,transparent 4.5px 6.5px,#d9d9d9 6.5px 8px,transparent 8px 9.8px);"></div>
<div style="left:414.70px;top:92.20px;width:41.00px;height:10.00px;display:flex;align-items:center;justify-content:center;white-space:nowrap;font-size:9px;font-weight:bold;color:#2a2a2a;">X0002</div>
<div style="left:455.70px;top:90.90px;width:41.00px;height:26.20px;border-right:1px solid #dcdcdc;box-sizing:border-box;"></div>
<div style="left:455.70px;top:102.90px;width:41.00px;height:1.00px;background:repeating-linear-gradient(90deg,#d9d9d9 0 4.5px,transparent 4.5px 6.5px,#d9d9d9 6.5px 8px,transparent 8px 9.8px);"></div>
<div style="left:455.70px;top:116.10px;width:41.00px;height:1.00px;background:repeating-linear-gradient(90deg,#d9d9d9 0 4.5px,transparent 4.5px 6.5px,#d9d9d9 6.5px 8px,transparent 8px 9.8px);"></div>
<div style="left:455.70px;top:92.20px;width:41.00px;height:10.00px;display:flex;align-items:center;justify-content:center;white-space:nowrap;font-size:9px;font-weight:bold;color:#2a2a2a;">-</div>
<div style="left:496.70px;top:90.90px;width:41.00px;height:26.20px;border-right:1px solid #dcdcdc;box-sizing:border-box;"></div>
<div style="left:496.70px;top:102.90px;width:41.00px;height:1.00px;background:repeating-linear-gradient(90deg,#d9d9d9 0 4.5px,transparent 4.5px 6.5px,#d9d9d9 6.5px 8px,transparent 8px 9.8px);"></div>
<div style="left:496.70px;top:116.10px;width:41.00px;height:1.00px;background:repeating-linear-gradient(90deg,#d9d9d9 0 4.5px,transparent 4.5px 6.5px,#d9d9d9 6.5px 8px,transparent 8px 9.8px);"></div>
<div style="left:496.70px;top:92.20px;width:41.00px;height:10.00px;display:flex;align-items:center;justify-content:center;white-space:nowrap;font-size:9px;font-weight:bold;color:#2a2a2a;">公休</div>
<div style="left:537.70px;top:90.90px;width:41.00px;height:26.20px;border-right:1px solid #dcdcdc;box-sizing:border-box;"></div>
<div style="left:537.70px;top:102.90px;width:41.00px;height:1.00px;background:repeating-linear-gradient(90deg,#d9d9d9 0 4.5px,transparent 4.5px 6.5px,#d9d9d9 6.5px 8px,transparent 8px 9.8px);"></div>
<div style="left:537.70px;top:116.10px;width:41.00px;height:1.00px;background:repeating-linear-gradient(90deg,#d9d9d9 0 4.5px,transparent 4.5px 6.5px,#d9d9d9 6.5px 8px,transparent 8px 9.8px);"></div>
<div style="left:537.70px;top:92.20px;width:41.00px;height:10.00px;display:flex;align-items:center;justify-content:center;white-space:nowrap;font-size:9px;font-weight:bold;color:#2a2a2a;">特休</div>
<div style="left:578.70px;top:90.90px;width:41.00px;height:26.20px;border-right:1px solid #dcdcdc;box-sizing:border-box;"></div>
<div style="left:578.70px;top:102.90px;width:41.00px;height:1.00px;background:repeating-linear-gradient(90deg,#d9d9d9 0 4.5px,transparent 4.5px 6.5px,#d9d9d9 6.5px 8px,transparent 8px 9.8px);"></div>
<div style="left:578.70px;top:116.10px;width:41.00px;height:1.00px;background:repeating-linear-gradient(90deg,#d9d9d9 0 4.5px,transparent 4.5px 6.5px,#d9d9d9 6.5px 8px,transparent 8px 9.8px);"></div>
<div style="left:578.70px;top:92.20px;width:41.00px;height:10.00px;display:flex;align-items:center;justify-content:center;white-space:nowrap;font-size:9px;font-weight:bold;color:#2a2a2a;">X0001</div>
<div style="left:619.70px;top:90.90px;width:41.00px;height:26.20px;border-right:1px solid #dcdcdc;box-sizing:border-box;"></div>
<div style="left:619.70px;top:102.90px;width:41.00px;height:1.00px;background:repeating-linear-gradient(90deg,#d9d9d9 0 4.5px,transparent 4.5px 6.5px,#d9d9d9 6.5px 8px,transparent 8px 9.8px);"></div>
<div style="left:619.70px;top:116.10px;width:41.00px;height:1.00px;background:repeating-linear-gradient(90deg,#d9d9d9 0 4.5px,transparent 4.5px 6.5px,#d9d9d9 6.5px 8px,transparent 8px 9.8px);"></div>
<div style="left:619.70px;top:92.20px;width:41.00px;height:10.00px;display:flex;align-items:center;justify-content:center;white-space:nowrap;font-size:9px;font-weight:bold;color:#2a2a2a;">-</div>
<div style="left:660.70px;top:90.90px;width:41.00px;height:26.20px;border-right:1px solid #dcdcdc;box-sizing:border-box;"></div>
<div style="left:660.70px;top:102.90px;width:41.00px;height:1.00px;background:repeating-linear-gradient(90deg,#d9d9d9 0 4.5px,transparent 4.5px 6.5px,#d9d9d9 6.5px 8px,transparent 8px 9.8px);"></div>
<div style="left:660.70px;top:116.10px;width:41.00px;height:1.00px;background:repeating-linear-gradient(90deg,#d9d9d9 0 4.5px,transparent 4.5px 6.5px,#d9d9d9 6.5px 8px,transparent 8px 9.8px);"></div>
<div style="left:660.70px;top:92.20px;width:41.00px;height:10.00px;display:flex;align-items:center;justify-content:center;white-space:nowrap;font-size:9px;font-weight:bold;color:#2a2a2a;">X0002</div>
<div style="left:701.70px;top:90.90px;width:41.00px;height:26.20px;border-right:1px solid #dcdcdc;box-sizing:border-box;"></div>
<div style="left:701.70px;top:102.90px;width:41.00px;height:1.00px;background:repeating-linear-gradient(90deg,#d9d9d9 0 4.5px,transparent 4.5px 6.5px,#d9d9d9 6.5px 8px,transparent 8px 9.8px);"></div>
<div style="left:701.70px;top:116.10px;width:41.00px;height:1.00px;background:repeating-linear-gradient(90deg,#d9d9d9 0 4.5px,transparent 4.5px 6.5px,#d9d9d9 6.5px 8px,transparent 8px 9.8px);"></div>
<div style="left:701.70px;top:92.20px;width:41.00px;height:10.00px;display:flex;align-items:center;justify-content:center;white-space:nowrap;font-size:9px;font-weight:bold;color:#2a2a2a;">-</div>
<div style="left:742.70px;top:90.90px;width:41.00px;height:26.20px;border-right:1px solid #dcdcdc;box-sizing:border-box;"></div>
<div style="left:742.70px;top:102.90px;width:41.00px;height:1.00px;background:repeating-linear-gradient(90deg,#d9d9d9 0 4.5px,transparent 4.5px 6.5px,#d9d9d9 6.5px 8px,transparent 8px 9.8px);"></div>
<div style="left:742.70px;top:116.10px;width:41.00px;height:1.00px;background:repeating-linear-gradient(90deg,#d9d9d9 0 4.5px,transparent 4.5px 6.5px,#d9d9d9 6.5px 8px,transparent 8px 9.8px);"></div>
<div style="left:6.50px;top:117.10px;width:1796.50px;height:26.20px;background:#fff;"></div>
<div style="left:6.50px;top:117.10px;width:85.00px;height:26.20px;border-right:1px solid #d2d2d2;border-bottom:1px solid #d2d2d2;box-sizing:border-box;"></div>
<div style="left:6.50px;top:117.10px;width:85.00px;height:26.20px;display:flex;align-items:center;justify-content:center;white-space:nowrap;font-size:9px;letter-spacing:-0.55px;color:#666;">社員 4</div>
<div style="left:91.50px;top:117.10px;width:53.20px;height:26.20px;border-right:1px solid #d2d2d2;border-bottom:1px solid #d2d2d2;box-sizing:border-box;"></div>
<div style="left:91.50px;top:117.10px;width:53.20px;height:26.20px;display:flex;align-items:center;justify-content:center;white-space:nowrap;font-size:9px;letter-spacing:-0.55px;color:#666;">運転士</div>
<div style="left:144.70px;top:117.10px;width:53.10px;height:26.20px;border-right:1px solid #d2d2d2;border-bottom:1px solid #d2d2d2;box-sizing:border-box;"></div>
<div style="left:144.70px;top:117.10px;width:53.10px;height:26.20px;display:flex;align-items:center;justify-content:center;white-space:nowrap;font-size:9px;letter-spacing:-0.55px;color:#666;">0000004</div>
<div style="left:197.80px;top:117.10px;width:52.90px;height:26.20px;border-right:1px solid #d2d2d2;border-bottom:1px solid #d2d2d2;box-sizing:border-box;"></div>
<div style="left:197.80px;top:117.10px;width:52.90px;height:26.20px;display:flex;align-items:center;justify-content:center;white-space:nowrap;font-size:9px;letter-spacing:-0.55px;color:#666;">A004</div>
<div style="left:250.70px;top:117.10px;width:41.00px;height:26.20px;border-right:1px solid #dcdcdc;box-sizing:border-box;"></div>
<div style="left:250.70px;top:129.10px;width:41.00px;height:1.00px;background:repeating-linear-gradient(90deg,#d9d9d9 0 4.5px,transparent 4.5px 6.5px,#d9d9d9 6.5px 8px,transparent 8px 9.8px);"></div>
<div style="left:250.70px;top:142.30px;width:41.00px;height:1.00px;background:repeating-linear-gradient(90deg,#d9d9d9 0 4.5px,transparent 4.5px 6.5px,#d9d9d9 6.5px 8px,transparent 8px 9.8px);"></div>
<div style="left:250.70px;top:118.40px;width:41.00px;height:10.00px;display:flex;align-items:center;justify-content:center;white-space:nowrap;font-size:9px;font-weight:bold;color:#2a2a2a;">特休</div>
<div style="left:291.70px;top:117.10px;width:41.00px;height:26.20px;border-right:1px solid #dcdcdc;box-sizing:border-box;"></div>
<div style="left:291.70px;top:129.10px;width:41.00px;height:1.00px;background:repeating-linear-gradient(90deg,#d9d9d9 0 4.5px,transparent 4.5px 6.5px,#d9d9d9 6.5px 8px,transparent 8px 9.8px);"></div>
<div style="left:291.70px;top:142.30px;width:41.00px;height:1.00px;background:repeating-linear-gradient(90deg,#d9d9d9 0 4.5px,transparent 4.5px 6.5px,#d9d9d9 6.5px 8px,transparent 8px 9.8px);"></div>
<div style="left:291.70px;top:118.40px;width:41.00px;height:10.00px;display:flex;align-items:center;justify-content:center;white-space:nowrap;font-size:9px;font-weight:bold;color:#2a2a2a;">X0003</div>
<div style="left:332.70px;top:117.10px;width:41.00px;height:26.20px;border-right:1px solid #dcdcdc;box-sizing:border-box;"></div>
<div style="left:332.70px;top:129.10px;width:41.00px;height:1.00px;background:repeating-linear-gradient(90deg,#d9d9d9 0 4.5px,transparent 4.5px 6.5px,#d9d9d9 6.5px 8px,transparent 8px 9.8px);"></div>
<div style="left:332.70px;top:142.30px;width:41.00px;height:1.00px;background:repeating-linear-gradient(90deg,#d9d9d9 0 4.5px,transparent 4.5px 6.5px,#d9d9d9 6.5px 8px,transparent 8px 9.8px);"></div>
<div style="left:332.70px;top:118.40px;width:41.00px;height:10.00px;display:flex;align-items:center;justify-content:center;white-space:nowrap;font-size:9px;font-weight:bold;color:#2a2a2a;">-</div>
<div style="left:373.70px;top:117.10px;width:41.00px;height:26.20px;border-right:1px solid #dcdcdc;box-sizing:border-box;"></div>
<div style="left:373.70px;top:129.10px;width:41.00px;height:1.00px;background:repeating-linear-gradient(90deg,#d9d9d9 0 4.5px,transparent 4.5px 6.5px,#d9d9d9 6.5px 8px,transparent 8px 9.8px);"></div>
<div style="left:373.70px;top:142.30px;width:41.00px;height:1.00px;background:repeating-linear-gradient(90deg,#d9d9d9 0 4.5px,transparent 4.5px 6.5px,#d9d9d9 6.5px 8px,transparent 8px 9.8px);"></div>
<div style="left:373.70px;top:118.40px;width:41.00px;height:10.00px;display:flex;align-items:center;justify-content:center;white-space:nowrap;font-size:9px;font-weight:bold;color:#2a2a2a;">X0002</div>
<div style="left:414.70px;top:117.10px;width:41.00px;height:26.20px;border-right:1px solid #dcdcdc;box-sizing:border-box;"></div>
<div style="left:414.70px;top:129.10px;width:41.00px;height:1.00px;background:repeating-linear-gradient(90deg,#d9d9d9 0 4.5px,transparent 4.5px 6.5px,#d9d9d9 6.5px 8px,transparent 8px 9.8px);"></div>
<div style="left:414.70px;top:142.30px;width:41.00px;height:1.00px;background:repeating-linear-gradient(90deg,#d9d9d9 0 4.5px,transparent 4.5px 6.5px,#d9d9d9 6.5px 8px,transparent 8px 9.8px);"></div>
<div style="left:414.70px;top:118.40px;width:41.00px;height:10.00px;display:flex;align-items:center;justify-content:center;white-space:nowrap;font-size:9px;font-weight:bold;color:#2a2a2a;">-</div>
<div style="left:455.70px;top:117.10px;width:41.00px;height:26.20px;border-right:1px solid #dcdcdc;box-sizing:border-box;"></div>
<div style="left:455.70px;top:129.10px;width:41.00px;height:1.00px;background:repeating-linear-gradient(90deg,#d9d9d9 0 4.5px,transparent 4.5px 6.5px,#d9d9d9 6.5px 8px,transparent 8px 9.8px);"></div>
<div style="left:455.70px;top:142.30px;width:41.00px;height:1.00px;background:repeating-linear-gradient(90deg,#d9d9d9 0 4.5px,transparent 4.5px 6.5px,#d9d9d9 6.5px 8px,transparent 8px 9.8px);"></div>
<div style="left:455.70px;top:118.40px;width:41.00px;height:10.00px;display:flex;align-items:center;justify-content:center;white-space:nowrap;font-size:9px;font-weight:bold;color:#2a2a2a;">公休</div>
<div style="left:496.70px;top:117.10px;width:41.00px;height:26.20px;border-right:1px solid #dcdcdc;box-sizing:border-box;"></div>
<div style="left:496.70px;top:129.10px;width:41.00px;height:1.00px;background:repeating-linear-gradient(90deg,#d9d9d9 0 4.5px,transparent 4.5px 6.5px,#d9d9d9 6.5px 8px,transparent 8px 9.8px);"></div>
<div style="left:496.70px;top:142.30px;width:41.00px;height:1.00px;background:repeating-linear-gradient(90deg,#d9d9d9 0 4.5px,transparent 4.5px 6.5px,#d9d9d9 6.5px 8px,transparent 8px 9.8px);"></div>
<div style="left:496.70px;top:118.40px;width:41.00px;height:10.00px;display:flex;align-items:center;justify-content:center;white-space:nowrap;font-size:9px;font-weight:bold;color:#2a2a2a;">特休</div>
<div style="left:537.70px;top:117.10px;width:41.00px;height:26.20px;border-right:1px solid #dcdcdc;box-sizing:border-box;"></div>
<div style="left:537.70px;top:129.10px;width:41.00px;height:1.00px;background:repeating-linear-gradient(90deg,#d9d9d9 0 4.5px,transparent 4.5px 6.5px,#d9d9d9 6.5px 8px,transparent 8px 9.8px);"></div>
<div style="left:537.70px;top:142.30px;width:41.00px;height:1.00px;background:repeating-linear-gradient(90deg,#d9d9d9 0 4.5px,transparent 4.5px 6.5px,#d9d9d9 6.5px 8px,transparent 8px 9.8px);"></div>
<div style="left:537.70px;top:118.40px;width:41.00px;height:10.00px;display:flex;align-items:center;justify-content:center;white-space:nowrap;font-size:9px;font-weight:bold;color:#2a2a2a;">X0001</div>
<div style="left:578.70px;top:117.10px;width:41.00px;height:26.20px;border-right:1px solid #dcdcdc;box-sizing:border-box;"></div>
<div style="left:578.70px;top:129.10px;width:41.00px;height:1.00px;background:repeating-linear-gradient(90deg,#d9d9d9 0 4.5px,transparent 4.5px 6.5px,#d9d9d9 6.5px 8px,transparent 8px 9.8px);"></div>
<div style="left:578.70px;top:142.30px;width:41.00px;height:1.00px;background:repeating-linear-gradient(90deg,#d9d9d9 0 4.5px,transparent 4.5px 6.5px,#d9d9d9 6.5px 8px,transparent 8px 9.8px);"></div>
<div style="left:578.70px;top:118.40px;width:41.00px;height:10.00px;display:flex;align-items:center;justify-content:center;white-space:nowrap;font-size:9px;font-weight:bold;color:#2a2a2a;">-</div>
<div style="left:619.70px;top:117.10px;width:41.00px;height:26.20px;border-right:1px solid #dcdcdc;box-sizing:border-box;"></div>
<div style="left:619.70px;top:129.10px;width:41.00px;height:1.00px;background:repeating-linear-gradient(90deg,#d9d9d9 0 4.5px,transparent 4.5px 6.5px,#d9d9d9 6.5px 8px,transparent 8px 9.8px);"></div>
<div style="left:619.70px;top:142.30px;width:41.00px;height:1.00px;background:repeating-linear-gradient(90deg,#d9d9d9 0 4.5px,transparent 4.5px 6.5px,#d9d9d9 6.5px 8px,transparent 8px 9.8px);"></div>
<div style="left:619.70px;top:118.40px;width:41.00px;height:10.00px;display:flex;align-items:center;justify-content:center;white-space:nowrap;font-size:9px;font-weight:bold;color:#2a2a2a;">X0002</div>
<div style="left:660.70px;top:117.10px;width:41.00px;height:26.20px;border-right:1px solid #dcdcdc;box-sizing:border-box;"></div>
<div style="left:660.70px;top:129.10px;width:41.00px;height:1.00px;background:repeating-linear-gradient(90deg,#d9d9d9 0 4.5px,transparent 4.5px 6.5px,#d9d9d9 6.5px 8px,transparent 8px 9.8px);"></div>
<div style="left:660.70px;top:142.30px;width:41.00px;height:1.00px;background:repeating-linear-gradient(90deg,#d9d9d9 0 4.5px,transparent 4.5px 6.5px,#d9d9d9 6.5px 8px,transparent 8px 9.8px);"></div>
<div style="left:660.70px;top:118.40px;width:41.00px;height:10.00px;display:flex;align-items:center;justify-content:center;white-space:nowrap;font-size:9px;font-weight:bold;color:#2a2a2a;">-</div>
<div style="left:701.70px;top:117.10px;width:41.00px;height:26.20px;border-right:1px solid #dcdcdc;box-sizing:border-box;"></div>
<div style="left:701.70px;top:129.10px;width:41.00px;height:1.00px;background:repeating-linear-gradient(90deg,#d9d9d9 0 4.5px,transparent 4.5px 6.5px,#d9d9d9 6.5px 8px,transparent 8px 9.8px);"></div>
<div style="left:701.70px;top:142.30px;width:41.00px;height:1.00px;background:repeating-linear-gradient(90deg,#d9d9d9 0 4.5px,transparent 4.5px 6.5px,#d9d9d9 6.5px 8px,transparent 8px 9.8px);"></div>
<div style="left:701.70px;top:118.40px;width:41.00px;height:10.00px;display:flex;align-items:center;justify-content:center;white-space:nowrap;font-size:9px;font-weight:bold;color:#2a2a2a;">公休</div>
<div style="left:742.70px;top:117.10px;width:41.00px;height:26.20px;border-right:1px solid #dcdcdc;box-sizing:border-box;"></div>
<div style="left:742.70px;top:129.10px;width:41.00px;height:1.00px;background:repeating-linear-gradient(90deg,#d9d9d9 0 4.5px,transparent 4.5px 6.5px,#d9d9d9 6.5px 8px,transparent 8px 9.8px);"></div>
<div style="left:742.70px;top:142.30px;width:41.00px;height:1.00px;background:repeating-linear-gradient(90deg,#d9d9d9 0 4.5px,transparent 4.5px 6.5px,#d9d9d9 6.5px 8px,transparent 8px 9.8px);"></div>
<div style="left:6.50px;top:143.30px;width:1796.50px;height:26.20px;background:#faeddd;"></div>
<div style="left:6.50px;top:143.30px;width:85.00px;height:26.20px;border-right:1px solid #d2d2d2;border-bottom:1px solid #d2d2d2;box-sizing:border-box;"></div>
<div style="left:6.50px;top:143.30px;width:85.00px;height:26.20px;display:flex;align-items:center;justify-content:center;white-space:nowrap;font-size:9px;letter-spacing:-0.55px;color:#666;">社員 5</div>
<div style="left:91.50px;top:143.30px;width:53.20px;height:26.20px;border-right:1px solid #d2d2d2;border-bottom:1px solid #d2d2d2;box-sizing:border-box;"></div>
<div style="left:91.50px;top:143.30px;width:53.20px;height:26.20px;display:flex;align-items:center;justify-content:center;white-space:nowrap;font-size:9px;letter-spacing:-0.55px;color:#666;">運転士</div>
<div style="left:144.70px;top:143.30px;width:53.10px;height:26.20px;border-right:1px solid #d2d2d2;border-bottom:1px solid #d2d2d2;box-sizing:border-box;"></div>
<div style="left:144.70px;top:143.30px;width:53.10px;height:26.20px;display:flex;align-items:center;justify-content:center;white-space:nowrap;font-size:9px;letter-spacing:-0.55px;color:#666;">0000005</div>
<div style="left:197.80px;top:143.30px;width:52.90px;height:26.20px;border-right:1px solid #d2d2d2;border-bottom:1px solid #d2d2d2;box-sizing:border-box;"></div>
<div style="left:197.80px;top:143.30px;width:52.90px;height:26.20px;display:flex;align-items:center;justify-content:center;white-space:nowrap;font-size:9px;letter-spacing:-0.55px;color:#666;">A005</div>
<div style="left:250.70px;top:143.30px;width:41.00px;height:26.20px;border-right:1px solid #dcdcdc;box-sizing:border-box;"></div>
<div style="left:250.70px;top:155.30px;width:41.00px;height:1.00px;background:repeating-linear-gradient(90deg,#d9d9d9 0 4.5px,transparent 4.5px 6.5px,#d9d9d9 6.5px 8px,transparent 8px 9.8px);"></div>
<div style="left:250.70px;top:168.50px;width:41.00px;height:1.00px;background:repeating-linear-gradient(90deg,#d9d9d9 0 4.5px,transparent 4.5px 6.5px,#d9d9d9 6.5px 8px,transparent 8px 9.8px);"></div>
<div style="left:250.70px;top:144.60px;width:41.00px;height:10.00px;display:flex;align-items:center;justify-content:center;white-space:nowrap;font-size:9px;font-weight:bold;color:#2a2a2a;">X0003</div>
<div style="left:291.70px;top:143.30px;width:41.00px;height:26.20px;border-right:1px solid #dcdcdc;box-sizing:border-box;"></div>
<div style="left:291.70px;top:155.30px;width:41.00px;height:1.00px;background:repeating-linear-gradient(90deg,#d9d9d9 0 4.5px,transparent 4.5px 6.5px,#d9d9d9 6.5px 8px,transparent 8px 9.8px);"></div>
<div style="left:291.70px;top:168.50px;width:41.00px;height:1.00px;background:repeating-linear-gradient(90deg,#d9d9d9 0 4.5px,transparent 4.5px 6.5px,#d9d9d9 6.5px 8px,transparent 8px 9.8px);"></div>
<div style="left:291.70px;top:144.60px;width:41.00px;height:10.00px;display:flex;align-items:center;justify-content:center;white-space:nowrap;font-size:9px;font-weight:bold;color:#2a2a2a;">-</div>
<div style="left:332.70px;top:143.30px;width:41.00px;height:26.20px;border-right:1px solid #dcdcdc;box-sizing:border-box;"></div>
<div style="left:332.70px;top:155.30px;width:41.00px;height:1.00px;background:repeating-linear-gradient(90deg,#d9d9d9 0 4.5px,transparent 4.5px 6.5px,#d9d9d9 6.5px 8px,transparent 8px 9.8px);"></div>
<div style="left:332.70px;top:168.50px;width:41.00px;height:1.00px;background:repeating-linear-gradient(90deg,#d9d9d9 0 4.5px,transparent 4.5px 6.5px,#d9d9d9 6.5px 8px,transparent 8px 9.8px);"></div>
<div style="left:332.70px;top:144.60px;width:41.00px;height:10.00px;display:flex;align-items:center;justify-content:center;white-space:nowrap;font-size:9px;font-weight:bold;color:#2a2a2a;">X0002</div>
<div style="left:373.70px;top:143.30px;width:41.00px;height:26.20px;border-right:1px solid #dcdcdc;box-sizing:border-box;"></div>
<div style="left:373.70px;top:155.30px;width:41.00px;height:1.00px;background:repeating-linear-gradient(90deg,#d9d9d9 0 4.5px,transparent 4.5px 6.5px,#d9d9d9 6.5px 8px,transparent 8px 9.8px);"></div>
<div style="left:373.70px;top:168.50px;width:41.00px;height:1.00px;background:repeating-linear-gradient(90deg,#d9d9d9 0 4.5px,transparent 4.5px 6.5px,#d9d9d9 6.5px 8px,transparent 8px 9.8px);"></div>
<div style="left:373.70px;top:144.60px;width:41.00px;height:10.00px;display:flex;align-items:center;justify-content:center;white-space:nowrap;font-size:9px;font-weight:bold;color:#2a2a2a;">-</div>
<div style="left:414.70px;top:143.30px;width:41.00px;height:26.20px;border-right:1px solid #dcdcdc;box-sizing:border-box;"></div>
<div style="left:414.70px;top:155.30px;width:41.00px;height:1.00px;background:repeating-linear-gradient(90deg,#d9d9d9 0 4.5px,transparent 4.5px 6.5px,#d9d9d9 6.5px 8px,transparent 8px 9.8px);"></div>
<div style="left:414.70px;top:168.50px;width:41.00px;height:1.00px;background:repeating-linear-gradient(90deg,#d9d9d9 0 4.5px,transparent 4.5px 6.5px,#d9d9d9 6.5px 8px,transparent 8px 9.8px);"></div>
<div style="left:414.70px;top:144.60px;width:41.00px;height:10.00px;display:flex;align-items:center;justify-content:center;white-space:nowrap;font-size:9px;font-weight:bold;color:#2a2a2a;">公休</div>
<div style="left:455.70px;top:143.30px;width:41.00px;height:26.20px;border-right:1px solid #dcdcdc;box-sizing:border-box;"></div>
<div style="left:455.70px;top:155.30px;width:41.00px;height:1.00px;background:repeating-linear-gradient(90deg,#d9d9d9 0 4.5px,transparent 4.5px 6.5px,#d9d9d9 6.5px 8px,transparent 8px 9.8px);"></div>
<div style="left:455.70px;top:168.50px;width:41.00px;height:1.00px;background:repeating-linear-gradient(90deg,#d9d9d9 0 4.5px,transparent 4.5px 6.5px,#d9d9d9 6.5px 8px,transparent 8px 9.8px);"></div>
<div style="left:455.70px;top:144.60px;width:41.00px;height:10.00px;display:flex;align-items:center;justify-content:center;white-space:nowrap;font-size:9px;font-weight:bold;color:#2a2a2a;">特休</div>
<div style="left:496.70px;top:143.30px;width:41.00px;height:26.20px;border-right:1px solid #dcdcdc;box-sizing:border-box;"></div>
<div style="left:496.70px;top:155.30px;width:41.00px;height:1.00px;background:repeating-linear-gradient(90deg,#d9d9d9 0 4.5px,transparent 4.5px 6.5px,#d9d9d9 6.5px 8px,transparent 8px 9.8px);"></div>
<div style="left:496.70px;top:168.50px;width:41.00px;height:1.00px;background:repeating-linear-gradient(90deg,#d9d9d9 0 4.5px,transparent 4.5px 6.5px,#d9d9d9 6.5px 8px,transparent 8px 9.8px);"></div>
<div style="left:496.70px;top:144.60px;width:41.00px;height:10.00px;display:flex;align-items:center;justify-content:center;white-space:nowrap;font-size:9px;font-weight:bold;color:#2a2a2a;">X0001</div>
<div style="left:537.70px;top:143.30px;width:41.00px;height:26.20px;border-right:1px solid #dcdcdc;box-sizing:border-box;"></div>
<div style="left:537.70px;top:155.30px;width:41.00px;height:1.00px;background:repeating-linear-gradient(90deg,#d9d9d9 0 4.5px,transparent 4.5px 6.5px,#d9d9d9 6.5px 8px,transparent 8px 9.8px);"></div>
<div style="left:537.70px;top:168.50px;width:41.00px;height:1.00px;background:repeating-linear-gradient(90deg,#d9d9d9 0 4.5px,transparent 4.5px 6.5px,#d9d9d9 6.5px 8px,transparent 8px 9.8px);"></div>
<div style="left:537.70px;top:144.60px;width:41.00px;height:10.00px;display:flex;align-items:center;justify-content:center;white-space:nowrap;font-size:9px;font-weight:bold;color:#2a2a2a;">-</div>
<div style="left:578.70px;top:143.30px;width:41.00px;height:26.20px;border-right:1px solid #dcdcdc;box-sizing:border-box;"></div>
<div style="left:578.70px;top:155.30px;width:41.00px;height:1.00px;background:repeating-linear-gradient(90deg,#d9d9d9 0 4.5px,transparent 4.5px 6.5px,#d9d9d9 6.5px 8px,transparent 8px 9.8px);"></div>
<div style="left:578.70px;top:168.50px;width:41.00px;height:1.00px;background:repeating-linear-gradient(90deg,#d9d9d9 0 4.5px,transparent 4.5px 6.5px,#d9d9d9 6.5px 8px,transparent 8px 9.8px);"></div>
<div style="left:578.70px;top:144.60px;width:41.00px;height:10.00px;display:flex;align-items:center;justify-content:center;white-space:nowrap;font-size:9px;font-weight:bold;color:#2a2a2a;">X0002</div>
<div style="left:619.70px;top:143.30px;width:41.00px;height:26.20px;border-right:1px solid #dcdcdc;box-sizing:border-box;"></div>
<div style="left:619.70px;top:155.30px;width:41.00px;height:1.00px;background:repeating-linear-gradient(90deg,#d9d9d9 0 4.5px,transparent 4.5px 6.5px,#d9d9d9 6.5px 8px,transparent 8px 9.8px);"></div>
<div style="left:619.70px;top:168.50px;width:41.00px;height:1.00px;background:repeating-linear-gradient(90deg,#d9d9d9 0 4.5px,transparent 4.5px 6.5px,#d9d9d9 6.5px 8px,transparent 8px 9.8px);"></div>
<div style="left:619.70px;top:144.60px;width:41.00px;height:10.00px;display:flex;align-items:center;justify-content:center;white-space:nowrap;font-size:9px;font-weight:bold;color:#2a2a2a;">-</div>
<div style="left:660.70px;top:143.30px;width:41.00px;height:26.20px;border-right:1px solid #dcdcdc;box-sizing:border-box;"></div>
<div style="left:660.70px;top:155.30px;width:41.00px;height:1.00px;background:repeating-linear-gradient(90deg,#d9d9d9 0 4.5px,transparent 4.5px 6.5px,#d9d9d9 6.5px 8px,transparent 8px 9.8px);"></div>
<div style="left:660.70px;top:168.50px;width:41.00px;height:1.00px;background:repeating-linear-gradient(90deg,#d9d9d9 0 4.5px,transparent 4.5px 6.5px,#d9d9d9 6.5px 8px,transparent 8px 9.8px);"></div>
<div style="left:660.70px;top:144.60px;width:41.00px;height:10.00px;display:flex;align-items:center;justify-content:center;white-space:nowrap;font-size:9px;font-weight:bold;color:#2a2a2a;">公休</div>
<div style="left:701.70px;top:143.30px;width:41.00px;height:26.20px;border-right:1px solid #dcdcdc;box-sizing:border-box;"></div>
<div style="left:701.70px;top:155.30px;width:41.00px;height:1.00px;background:repeating-linear-gradient(90deg,#d9d9d9 0 4.5px,transparent 4.5px 6.5px,#d9d9d9 6.5px 8px,transparent 8px 9.8px);"></div>
<div style="left:701.70px;top:168.50px;width:41.00px;height:1.00px;background:repeating-linear-gradient(90deg,#d9d9d9 0 4.5px,transparent 4.5px 6.5px,#d9d9d9 6.5px 8px,transparent 8px 9.8px);"></div>
<div style="left:701.70px;top:144.60px;width:41.00px;height:10.00px;display:flex;align-items:center;justify-content:center;white-space:nowrap;font-size:9px;font-weight:bold;color:#2a2a2a;">特休</div>
<div style="left:742.70px;top:143.30px;width:41.00px;height:26.20px;border-right:1px solid #dcdcdc;box-sizing:border-box;"></div>
<div style="left:742.70px;top:155.30px;width:41.00px;height:1.00px;background:repeating-linear-gradient(90deg,#d9d9d9 0 4.5px,transparent 4.5px 6.5px,#d9d9d9 6.5px 8px,transparent 8px 9.8px);"></div>
<div style="left:742.70px;top:168.50px;width:41.00px;height:1.00px;background:repeating-linear-gradient(90deg,#d9d9d9 0 4.5px,transparent 4.5px 6.5px,#d9d9d9 6.5px 8px,transparent 8px 9.8px);"></div>
<div style="left:6.50px;top:169.50px;width:1796.50px;height:26.20px;background:#fff;"></div>
<div style="left:6.50px;top:169.50px;width:85.00px;height:26.20px;border-right:1px solid #d2d2d2;border-bottom:1px solid #d2d2d2;box-sizing:border-box;"></div>
<div style="left:6.50px;top:169.50px;width:85.00px;height:26.20px;display:flex;align-items:center;justify-content:center;white-space:nowrap;font-size:9px;letter-spacing:-0.55px;color:#666;">社員 6</div>
<div style="left:91.50px;top:169.50px;width:53.20px;height:26.20px;border-right:1px solid #d2d2d2;border-bottom:1px solid #d2d2d2;box-sizing:border-box;"></div>
<div style="left:91.50px;top:169.50px;width:53.20px;height:26.20px;display:flex;align-items:center;justify-content:center;white-space:nowrap;font-size:9px;letter-spacing:-0.55px;color:#666;">運転士</div>
<div style="left:144.70px;top:169.50px;width:53.10px;height:26.20px;border-right:1px solid #d2d2d2;border-bottom:1px solid #d2d2d2;box-sizing:border-box;"></div>
<div style="left:144.70px;top:169.50px;width:53.10px;height:26.20px;display:flex;align-items:center;justify-content:center;white-space:nowrap;font-size:9px;letter-spacing:-0.55px;color:#666;">0000006</div>
<div style="left:197.80px;top:169.50px;width:52.90px;height:26.20px;border-right:1px solid #d2d2d2;border-bottom:1px solid #d2d2d2;box-sizing:border-box;"></div>
<div style="left:197.80px;top:169.50px;width:52.90px;height:26.20px;display:flex;align-items:center;justify-content:center;white-space:nowrap;font-size:9px;letter-spacing:-0.55px;color:#666;">A006</div>
<div style="left:250.70px;top:169.50px;width:41.00px;height:26.20px;border-right:1px solid #dcdcdc;box-sizing:border-box;"></div>
<div style="left:250.70px;top:181.50px;width:41.00px;height:1.00px;background:repeating-linear-gradient(90deg,#d9d9d9 0 4.5px,transparent 4.5px 6.5px,#d9d9d9 6.5px 8px,transparent 8px 9.8px);"></div>
<div style="left:250.70px;top:194.70px;width:41.00px;height:1.00px;background:repeating-linear-gradient(90deg,#d9d9d9 0 4.5px,transparent 4.5px 6.5px,#d9d9d9 6.5px 8px,transparent 8px 9.8px);"></div>
<div style="left:250.70px;top:170.80px;width:41.00px;height:10.00px;display:flex;align-items:center;justify-content:center;white-space:nowrap;font-size:9px;font-weight:bold;color:#2a2a2a;">-</div>
<div style="left:291.70px;top:169.50px;width:41.00px;height:26.20px;border-right:1px solid #dcdcdc;box-sizing:border-box;"></div>
<div style="left:291.70px;top:181.50px;width:41.00px;height:1.00px;background:repeating-linear-gradient(90deg,#d9d9d9 0 4.5px,transparent 4.5px 6.5px,#d9d9d9 6.5px 8px,transparent 8px 9.8px);"></div>
<div style="left:291.70px;top:194.70px;width:41.00px;height:1.00px;background:repeating-linear-gradient(90deg,#d9d9d9 0 4.5px,transparent 4.5px 6.5px,#d9d9d9 6.5px 8px,transparent 8px 9.8px);"></div>
<div style="left:291.70px;top:170.80px;width:41.00px;height:10.00px;display:flex;align-items:center;justify-content:center;white-space:nowrap;font-size:9px;font-weight:bold;color:#2a2a2a;">X0002</div>
<div style="left:332.70px;top:169.50px;width:41.00px;height:26.20px;border-right:1px solid #dcdcdc;box-sizing:border-box;"></div>
<div style="left:332.70px;top:181.50px;width:41.00px;height:1.00px;background:repeating-linear-gradient(90deg,#d9d9d9 0 4.5px,transparent 4.5px 6.5px,#d9d9d9 6.5px 8px,transparent 8px 9.8px);"></div>
<div style="left:332.70px;top:194.70px;width:41.00px;height:1.00px;background:repeating-linear-gradient(90deg,#d9d9d9 0 4.5px,transparent 4.5px 6.5px,#d9d9d9 6.5px 8px,transparent 8px 9.8px);"></div>
<div style="left:332.70px;top:170.80px;width:41.00px;height:10.00px;display:flex;align-items:center;justify-content:center;white-space:nowrap;font-size:9px;font-weight:bold;color:#2a2a2a;">-</div>
<div style="left:373.70px;top:169.50px;width:41.00px;height:26.20px;border-right:1px solid #dcdcdc;box-sizing:border-box;"></div>
<div style="left:373.70px;top:181.50px;width:41.00px;height:1.00px;background:repeating-linear-gradient(90deg,#d9d9d9 0 4.5px,transparent 4.5px 6.5px,#d9d9d9 6.5px 8px,transparent 8px 9.8px);"></div>
<div style="left:373.70px;top:194.70px;width:41.00px;height:1.00px;background:repeating-linear-gradient(90deg,#d9d9d9 0 4.5px,transparent 4.5px 6.5px,#d9d9d9 6.5px 8px,transparent 8px 9.8px);"></div>
<div style="left:373.70px;top:170.80px;width:41.00px;height:10.00px;display:flex;align-items:center;justify-content:center;white-space:nowrap;font-size:9px;font-weight:bold;color:#2a2a2a;">公休</div>
<div style="left:414.70px;top:169.50px;width:41.00px;height:26.20px;border-right:1px solid #dcdcdc;box-sizing:border-box;"></div>
<div style="left:414.70px;top:181.50px;width:41.00px;height:1.00px;background:repeating-linear-gradient(90deg,#d9d9d9 0 4.5px,transparent 4.5px 6.5px,#d9d9d9 6.5px 8px,transparent 8px 9.8px);"></div>
<div style="left:414.70px;top:194.70px;width:41.00px;height:1.00px;background:repeating-linear-gradient(90deg,#d9d9d9 0 4.5px,transparent 4.5px 6.5px,#d9d9d9 6.5px 8px,transparent 8px 9.8px);"></div>
<div style="left:414.70px;top:170.80px;width:41.00px;height:10.00px;display:flex;align-items:center;justify-content:center;white-space:nowrap;font-size:9px;font-weight:bold;color:#2a2a2a;">特休</div>
<div style="left:455.70px;top:169.50px;width:41.00px;height:26.20px;border-right:1px solid #dcdcdc;box-sizing:border-box;"></div>
<div style="left:455.70px;top:181.50px;width:41.00px;height:1.00px;background:repeating-linear-gradient(90deg,#d9d9d9 0 4.5px,transparent 4.5px 6.5px,#d9d9d9 6.5px 8px,transparent 8px 9.8px);"></div>
<div style="left:455.70px;top:194.70px;width:41.00px;height:1.00px;background:repeating-linear-gradient(90deg,#d9d9d9 0 4.5px,transparent 4.5px 6.5px,#d9d9d9 6.5px 8px,transparent 8px 9.8px);"></div>
<div style="left:455.70px;top:170.80px;width:41.00px;height:10.00px;display:flex;align-items:center;justify-content:center;white-space:nowrap;font-size:9px;font-weight:bold;color:#2a2a2a;">X0001</div>
<div style="left:496.70px;top:169.50px;width:41.00px;height:26.20px;border-right:1px solid #dcdcdc;box-sizing:border-box;"></div>
<div style="left:496.70px;top:181.50px;width:41.00px;height:1.00px;background:repeating-linear-gradient(90deg,#d9d9d9 0 4.5px,transparent 4.5px 6.5px,#d9d9d9 6.5px 8px,transparent 8px 9.8px);"></div>
<div style="left:496.70px;top:194.70px;width:41.00px;height:1.00px;background:repeating-linear-gradient(90deg,#d9d9d9 0 4.5px,transparent 4.5px 6.5px,#d9d9d9 6.5px 8px,transparent 8px 9.8px);"></div>
<div style="left:496.70px;top:170.80px;width:41.00px;height:10.00px;display:flex;align-items:center;justify-content:center;white-space:nowrap;font-size:9px;font-weight:bold;color:#2a2a2a;">-</div>
<div style="left:537.70px;top:169.50px;width:41.00px;height:26.20px;border-right:1px solid #dcdcdc;box-sizing:border-box;"></div>
<div style="left:537.70px;top:181.50px;width:41.00px;height:1.00px;background:repeating-linear-gradient(90deg,#d9d9d9 0 4.5px,transparent 4.5px 6.5px,#d9d9d9 6.5px 8px,transparent 8px 9.8px);"></div>
<div style="left:537.70px;top:194.70px;width:41.00px;height:1.00px;background:repeating-linear-gradient(90deg,#d9d9d9 0 4.5px,transparent 4.5px 6.5px,#d9d9d9 6.5px 8px,transparent 8px 9.8px);"></div>
<div style="left:537.70px;top:170.80px;width:41.00px;height:10.00px;display:flex;align-items:center;justify-content:center;white-space:nowrap;font-size:9px;font-weight:bold;color:#2a2a2a;">X0003</div>
<div style="left:578.70px;top:169.50px;width:41.00px;height:26.20px;border-right:1px solid #dcdcdc;box-sizing:border-box;"></div>
<div style="left:578.70px;top:181.50px;width:41.00px;height:1.00px;background:repeating-linear-gradient(90deg,#d9d9d9 0 4.5px,transparent 4.5px 6.5px,#d9d9d9 6.5px 8px,transparent 8px 9.8px);"></div>
<div style="left:578.70px;top:194.70px;width:41.00px;height:1.00px;background:repeating-linear-gradient(90deg,#d9d9d9 0 4.5px,transparent 4.5px 6.5px,#d9d9d9 6.5px 8px,transparent 8px 9.8px);"></div>
<div style="left:578.70px;top:170.80px;width:41.00px;height:10.00px;display:flex;align-items:center;justify-content:center;white-space:nowrap;font-size:9px;font-weight:bold;color:#2a2a2a;">-</div>
<div style="left:619.70px;top:169.50px;width:41.00px;height:26.20px;border-right:1px solid #dcdcdc;box-sizing:border-box;"></div>
<div style="left:619.70px;top:181.50px;width:41.00px;height:1.00px;background:repeating-linear-gradient(90deg,#d9d9d9 0 4.5px,transparent 4.5px 6.5px,#d9d9d9 6.5px 8px,transparent 8px 9.8px);"></div>
<div style="left:619.70px;top:194.70px;width:41.00px;height:1.00px;background:repeating-linear-gradient(90deg,#d9d9d9 0 4.5px,transparent 4.5px 6.5px,#d9d9d9 6.5px 8px,transparent 8px 9.8px);"></div>
<div style="left:619.70px;top:170.80px;width:41.00px;height:10.00px;display:flex;align-items:center;justify-content:center;white-space:nowrap;font-size:9px;font-weight:bold;color:#2a2a2a;">公休</div>
<div style="left:660.70px;top:169.50px;width:41.00px;height:26.20px;border-right:1px solid #dcdcdc;box-sizing:border-box;"></div>
<div style="left:660.70px;top:181.50px;width:41.00px;height:1.00px;background:repeating-linear-gradient(90deg,#d9d9d9 0 4.5px,transparent 4.5px 6.5px,#d9d9d9 6.5px 8px,transparent 8px 9.8px);"></div>
<div style="left:660.70px;top:194.70px;width:41.00px;height:1.00px;background:repeating-linear-gradient(90deg,#d9d9d9 0 4.5px,transparent 4.5px 6.5px,#d9d9d9 6.5px 8px,transparent 8px 9.8px);"></div>
<div style="left:660.70px;top:170.80px;width:41.00px;height:10.00px;display:flex;align-items:center;justify-content:center;white-space:nowrap;font-size:9px;font-weight:bold;color:#2a2a2a;">特休</div>
<div style="left:701.70px;top:169.50px;width:41.00px;height:26.20px;border-right:1px solid #dcdcdc;box-sizing:border-box;"></div>
<div style="left:701.70px;top:181.50px;width:41.00px;height:1.00px;background:repeating-linear-gradient(90deg,#d9d9d9 0 4.5px,transparent 4.5px 6.5px,#d9d9d9 6.5px 8px,transparent 8px 9.8px);"></div>
<div style="left:701.70px;top:194.70px;width:41.00px;height:1.00px;background:repeating-linear-gradient(90deg,#d9d9d9 0 4.5px,transparent 4.5px 6.5px,#d9d9d9 6.5px 8px,transparent 8px 9.8px);"></div>
<div style="left:701.70px;top:170.80px;width:41.00px;height:10.00px;display:flex;align-items:center;justify-content:center;white-space:nowrap;font-size:9px;font-weight:bold;color:#2a2a2a;">X0004</div>
<div style="left:742.70px;top:169.50px;width:41.00px;height:26.20px;border-right:1px solid #dcdcdc;box-sizing:border-box;"></div>
<div style="left:742.70px;top:181.50px;width:41.00px;height:1.00px;background:repeating-linear-gradient(90deg,#d9d9d9 0 4.5px,transparent 4.5px 6.5px,#d9d9d9 6.5px 8px,transparent 8px 9.8px);"></div>
<div style="left:742.70px;top:194.70px;width:41.00px;height:1.00px;background:repeating-linear-gradient(90deg,#d9d9d9 0 4.5px,transparent 4.5px 6.5px,#d9d9d9 6.5px 8px,transparent 8px 9.8px);"></div>
<div style="left:6.50px;top:195.70px;width:1796.50px;height:13.90px;background:#faeddd;"></div>
<div style="left:6.50px;top:195.70px;width:85.00px;height:13.90px;border-right:1px solid #d2d2d2;border-bottom:1px solid #d2d2d2;box-sizing:border-box;"></div>
<div style="left:6.50px;top:195.70px;width:85.00px;height:26.20px;display:flex;align-items:center;justify-content:center;white-space:nowrap;font-size:9px;letter-spacing:-0.55px;color:#666;">社員 7</div>
<div style="left:91.50px;top:195.70px;width:53.20px;height:13.90px;border-right:1px solid #d2d2d2;border-bottom:1px solid #d2d2d2;box-sizing:border-box;"></div>
<div style="left:91.50px;top:195.70px;width:53.20px;height:26.20px;display:flex;align-items:center;justify-content:center;white-space:nowrap;font-size:9px;letter-spacing:-0.55px;color:#666;">運転士</div>
<div style="left:144.70px;top:195.70px;width:53.10px;height:13.90px;border-right:1px solid #d2d2d2;border-bottom:1px solid #d2d2d2;box-sizing:border-box;"></div>
<div style="left:144.70px;top:195.70px;width:53.10px;height:26.20px;display:flex;align-items:center;justify-content:center;white-space:nowrap;font-size:9px;letter-spacing:-0.55px;color:#666;">0000007</div>
<div style="left:197.80px;top:195.70px;width:52.90px;height:13.90px;border-right:1px solid #d2d2d2;border-bottom:1px solid #d2d2d2;box-sizing:border-box;"></div>
<div style="left:197.80px;top:195.70px;width:52.90px;height:26.20px;display:flex;align-items:center;justify-content:center;white-space:nowrap;font-size:9px;letter-spacing:-0.55px;color:#666;">A007</div>
<div style="left:250.70px;top:195.70px;width:41.00px;height:13.90px;border-right:1px solid #dcdcdc;box-sizing:border-box;"></div>
<div style="left:250.70px;top:207.70px;width:41.00px;height:1.00px;background:repeating-linear-gradient(90deg,#d9d9d9 0 4.5px,transparent 4.5px 6.5px,#d9d9d9 6.5px 8px,transparent 8px 9.8px);"></div>
<div style="left:250.70px;top:197.00px;width:41.00px;height:10.00px;display:flex;align-items:center;justify-content:center;white-space:nowrap;font-size:9px;font-weight:bold;color:#2a2a2a;">X0002</div>
<div style="left:291.70px;top:195.70px;width:41.00px;height:13.90px;border-right:1px solid #dcdcdc;box-sizing:border-box;"></div>
<div style="left:291.70px;top:207.70px;width:41.00px;height:1.00px;background:repeating-linear-gradient(90deg,#d9d9d9 0 4.5px,transparent 4.5px 6.5px,#d9d9d9 6.5px 8px,transparent 8px 9.8px);"></div>
<div style="left:291.70px;top:197.00px;width:41.00px;height:10.00px;display:flex;align-items:center;justify-content:center;white-space:nowrap;font-size:9px;font-weight:bold;color:#2a2a2a;">-</div>
<div style="left:332.70px;top:195.70px;width:41.00px;height:13.90px;border-right:1px solid #dcdcdc;box-sizing:border-box;"></div>
<div style="left:332.70px;top:207.70px;width:41.00px;height:1.00px;background:repeating-linear-gradient(90deg,#d9d9d9 0 4.5px,transparent 4.5px 6.5px,#d9d9d9 6.5px 8px,transparent 8px 9.8px);"></div>
<div style="left:332.70px;top:197.00px;width:41.00px;height:10.00px;display:flex;align-items:center;justify-content:center;white-space:nowrap;font-size:9px;font-weight:bold;color:#2a2a2a;">公休</div>
<div style="left:373.70px;top:195.70px;width:41.00px;height:13.90px;border-right:1px solid #dcdcdc;box-sizing:border-box;"></div>
<div style="left:373.70px;top:207.70px;width:41.00px;height:1.00px;background:repeating-linear-gradient(90deg,#d9d9d9 0 4.5px,transparent 4.5px 6.5px,#d9d9d9 6.5px 8px,transparent 8px 9.8px);"></div>
<div style="left:373.70px;top:197.00px;width:41.00px;height:10.00px;display:flex;align-items:center;justify-content:center;white-space:nowrap;font-size:9px;font-weight:bold;color:#2a2a2a;">特休</div>
<div style="left:414.70px;top:195.70px;width:41.00px;height:13.90px;border-right:1px solid #dcdcdc;box-sizing:border-box;"></div>
<div style="left:414.70px;top:207.70px;width:41.00px;height:1.00px;background:repeating-linear-gradient(90deg,#d9d9d9 0 4.5px,transparent 4.5px 6.5px,#d9d9d9 6.5px 8px,transparent 8px 9.8px);"></div>
<div style="left:414.70px;top:197.00px;width:41.00px;height:10.00px;display:flex;align-items:center;justify-content:center;white-space:nowrap;font-size:9px;font-weight:bold;color:#2a2a2a;">X0001</div>
<div style="left:455.70px;top:195.70px;width:41.00px;height:13.90px;border-right:1px solid #dcdcdc;box-sizing:border-box;"></div>
<div style="left:455.70px;top:207.70px;width:41.00px;height:1.00px;background:repeating-linear-gradient(90deg,#d9d9d9 0 4.5px,transparent 4.5px 6.5px,#d9d9d9 6.5px 8px,transparent 8px 9.8px);"></div>
<div style="left:455.70px;top:197.00px;width:41.00px;height:10.00px;display:flex;align-items:center;justify-content:center;white-space:nowrap;font-size:9px;font-weight:bold;color:#2a2a2a;">-</div>
<div style="left:496.70px;top:195.70px;width:41.00px;height:13.90px;border-right:1px solid #dcdcdc;box-sizing:border-box;"></div>
<div style="left:496.70px;top:207.70px;width:41.00px;height:1.00px;background:repeating-linear-gradient(90deg,#d9d9d9 0 4.5px,transparent 4.5px 6.5px,#d9d9d9 6.5px 8px,transparent 8px 9.8px);"></div>
<div style="left:496.70px;top:197.00px;width:41.00px;height:10.00px;display:flex;align-items:center;justify-content:center;white-space:nowrap;font-size:9px;font-weight:bold;color:#2a2a2a;">特休</div>
<div style="left:537.70px;top:195.70px;width:41.00px;height:13.90px;border-right:1px solid #dcdcdc;box-sizing:border-box;"></div>
<div style="left:537.70px;top:207.70px;width:41.00px;height:1.00px;background:repeating-linear-gradient(90deg,#d9d9d9 0 4.5px,transparent 4.5px 6.5px,#d9d9d9 6.5px 8px,transparent 8px 9.8px);"></div>
<div style="left:537.70px;top:197.00px;width:41.00px;height:10.00px;display:flex;align-items:center;justify-content:center;white-space:nowrap;font-size:9px;font-weight:bold;color:#2a2a2a;">特休</div>
<div style="left:578.70px;top:195.70px;width:41.00px;height:13.90px;border-right:1px solid #dcdcdc;box-sizing:border-box;"></div>
<div style="left:578.70px;top:207.70px;width:41.00px;height:1.00px;background:repeating-linear-gradient(90deg,#d9d9d9 0 4.5px,transparent 4.5px 6.5px,#d9d9d9 6.5px 8px,transparent 8px 9.8px);"></div>
<div style="left:578.70px;top:197.00px;width:41.00px;height:10.00px;display:flex;align-items:center;justify-content:center;white-space:nowrap;font-size:9px;font-weight:bold;color:#2a2a2a;">X0004</div>
<div style="left:619.70px;top:195.70px;width:41.00px;height:13.90px;border-right:1px solid #dcdcdc;box-sizing:border-box;"></div>
<div style="left:619.70px;top:207.70px;width:41.00px;height:1.00px;background:repeating-linear-gradient(90deg,#d9d9d9 0 4.5px,transparent 4.5px 6.5px,#d9d9d9 6.5px 8px,transparent 8px 9.8px);"></div>
<div style="left:619.70px;top:197.00px;width:41.00px;height:10.00px;display:flex;align-items:center;justify-content:center;white-space:nowrap;font-size:9px;font-weight:bold;color:#2a2a2a;">-</div>
<div style="left:660.70px;top:195.70px;width:41.00px;height:13.90px;border-right:1px solid #dcdcdc;box-sizing:border-box;"></div>
<div style="left:660.70px;top:207.70px;width:41.00px;height:1.00px;background:repeating-linear-gradient(90deg,#d9d9d9 0 4.5px,transparent 4.5px 6.5px,#d9d9d9 6.5px 8px,transparent 8px 9.8px);"></div>
<div style="left:660.70px;top:197.00px;width:41.00px;height:10.00px;display:flex;align-items:center;justify-content:center;white-space:nowrap;font-size:9px;font-weight:bold;color:#2a2a2a;">X0003</div>
<div style="left:701.70px;top:195.70px;width:41.00px;height:13.90px;border-right:1px solid #dcdcdc;box-sizing:border-box;"></div>
<div style="left:701.70px;top:207.70px;width:41.00px;height:1.00px;background:repeating-linear-gradient(90deg,#d9d9d9 0 4.5px,transparent 4.5px 6.5px,#d9d9d9 6.5px 8px,transparent 8px 9.8px);"></div>
<div style="left:701.70px;top:197.00px;width:41.00px;height:10.00px;display:flex;align-items:center;justify-content:center;white-space:nowrap;font-size:9px;font-weight:bold;color:#2a2a2a;">-</div>
<div style="left:742.70px;top:195.70px;width:41.00px;height:13.90px;border-right:1px solid #dcdcdc;box-sizing:border-box;"></div>
<div style="left:742.70px;top:207.70px;width:41.00px;height:1.00px;background:repeating-linear-gradient(90deg,#d9d9d9 0 4.5px,transparent 4.5px 6.5px,#d9d9d9 6.5px 8px,transparent 8px 9.8px);"></div>
<div style="left:249.50px;top:0.50px;width:2.00px;height:209.10px;background:#383838;"></div>
<div style="left:6.50px;top:209.60px;width:731.50px;height:14.40px;background:#e3e3e3;"></div>
<div style="left:6.50px;top:222.00px;width:731.50px;height:3.50px;background:#eef1f4;"></div>
<div style="left:7.60px;top:214.00px;width:8.40px;height:7.70px;background:#fff;"></div>
<div class="tri" style="left:10.5px;top:215.5px;border-right:3px solid #777;border-top:2.5px solid transparent;border-bottom:2.5px solid transparent"></div>
<div style="left:122.50px;top:214.00px;width:127.50px;height:8.00px;background:#fff;border:1px solid #d8d8d8;"></div>
<div style="left:6.30px;top:225.50px;width:731.70px;height:10.10px;background:#dfb274;"></div>
<div style="left:13.00px;top:225.50px;width:190.00px;height:10.10px;display:flex;align-items:center;white-space:nowrap;font-size:7px;color:#4d3b28;">準備完了</div>
<div style="left:6.50px;top:241.00px;width:196.50px;height:13.00px;display:flex;align-items:center;white-space:nowrap;font-size:10px;color:#333;">行路の必要人数</div>
<div style="left:6.50px;top:256.00px;width:85.00px;height:36.50px;background:#e7e7e7;border-right:1px solid #c6c6c6;border-bottom:1px solid #c4c4c4;"></div>
<div style="left:91.50px;top:256.00px;width:53.10px;height:36.50px;background:#e7e7e7;border-right:1px solid #c6c6c6;border-bottom:1px solid #c4c4c4;"></div>
<div style="left:144.60px;top:256.00px;width:53.40px;height:36.50px;background:#e7e7e7;border-right:1px solid #c6c6c6;border-bottom:1px solid #c4c4c4;"></div>
<div style="left:198.00px;top:256.00px;width:52.70px;height:36.50px;background:#e7e7e7;border-right:1px solid #c6c6c6;border-bottom:1px solid #c4c4c4;"></div>
<div style="left:6.50px;top:256.00px;width:85.00px;height:36.50px;display:flex;align-items:center;justify-content:center;white-space:nowrap;font-size:10px;color:#333;">行路種別</div>
<div style="left:5.50px;top:255.00px;width:732.50px;height:1.00px;background:#c4c4c4;"></div>
<div style="left:5.50px;top:256.00px;width:1.00px;height:39.50px;background:#c8c8c8;"></div>
<div style="left:250.70px;top:256.00px;width:41.00px;height:36.50px;background:#d5d5d5;border-right:1px solid #c6c6c6;border-bottom:1px solid #c4c4c4;"></div>
<div style="left:250.70px;top:274.30px;width:41.00px;height:1.00px;background:#d6d6d6;"></div>
<div style="left:250.70px;top:256.00px;width:41.00px;height:18.30px;display:flex;align-items:center;justify-content:center;white-space:nowrap;font-size:9px;color:#2f8a4e;font-weight:bold;">1</div>
<div style="left:255.70px;top:275.30px;width:17.00px;height:17.20px;display:flex;align-items:center;white-space:nowrap;font-size:10.5px;color:#2f8a4e;font-weight:bold;">水</div>
<div style="left:273.70px;top:276.00px;width:16.50px;height:15.60px;background:linear-gradient(#fdfdfe,#dfe7f1);border:1px solid #b4b8bf;border-radius:1px;"></div>
<div style="left:277.20px;top:278.50px;width:9.50px;height:10.50px;border:1px solid #999;border-radius:3px;"></div>
<div style="left:278.70px;top:283.30px;width:6.50px;height:1.00px;background:#888;"></div>
<div style="left:290.70px;top:292.50px;width:1.00px;height:3.00px;background:#dadada;"></div>
<div style="left:291.70px;top:256.00px;width:41.00px;height:36.50px;background:#e7e7e7;border-right:1px solid #c6c6c6;border-bottom:1px solid #c4c4c4;"></div>
<div style="left:291.70px;top:274.30px;width:41.00px;height:1.00px;background:#d6d6d6;"></div>
<div style="left:291.70px;top:256.00px;width:41.00px;height:18.30px;display:flex;align-items:center;justify-content:center;white-space:nowrap;font-size:9px;color:#444;font-weight:normal;">2</div>
<div style="left:296.70px;top:275.30px;width:17.00px;height:17.20px;display:flex;align-items:center;white-space:nowrap;font-size:10.5px;color:#444;font-weight:normal;">木</div>
<div style="left:314.70px;top:276.00px;width:16.50px;height:15.60px;background:linear-gradient(#fdfdfe,#dfe7f1);border:1px solid #b4b8bf;border-radius:1px;"></div>
<div style="left:318.20px;top:278.50px;width:9.50px;height:10.50px;border:1px solid #999;border-radius:3px;"></div>
<div style="left:319.70px;top:283.30px;width:6.50px;height:1.00px;background:#888;"></div>
<div style="left:331.70px;top:292.50px;width:1.00px;height:3.00px;background:#dadada;"></div>
<div style="left:332.70px;top:256.00px;width:41.00px;height:36.50px;background:#e7e7e7;border-right:1px solid #c6c6c6;border-bottom:1px solid #c4c4c4;"></div>
<div style="left:332.70px;top:274.30px;width:41.00px;height:1.00px;background:#d6d6d6;"></div>
<div style="left:332.70px;top:256.00px;width:41.00px;height:18.30px;display:flex;align-items:center;justify-content:center;white-space:nowrap;font-size:9px;color:#444;font-weight:normal;">3</div>
<div style="left:337.70px;top:275.30px;width:17.00px;height:17.20px;display:flex;align-items:center;white-space:nowrap;font-size:10.5px;color:#444;font-weight:normal;">金</div>
<div style="left:355.70px;top:276.00px;width:16.50px;height:15.60px;background:linear-gradient(#fdfdfe,#dfe7f1);border:1px solid #b4b8bf;border-radius:1px;"></div>
<div style="left:359.20px;top:278.50px;width:9.50px;height:10.50px;border:1px solid #999;border-radius:3px;"></div>
<div style="left:360.70px;top:283.30px;width:6.50px;height:1.00px;background:#888;"></div>
<div style="left:372.70px;top:292.50px;width:1.00px;height:3.00px;background:#dadada;"></div>
<div style="left:373.70px;top:256.00px;width:41.00px;height:36.50px;background:#e7e7e7;border-right:1px solid #c6c6c6;border-bottom:1px solid #c4c4c4;"></div>
<div style="left:373.70px;top:274.30px;width:41.00px;height:1.00px;background:#d6d6d6;"></div>
<div style="left:373.70px;top:256.00px;width:41.00px;height:18.30px;display:flex;align-items:center;justify-content:center;white-space:nowrap;font-size:9px;color:#5a9bd8;font-weight:normal;">4</div>
<div style="left:378.70px;top:275.30px;width:17.00px;height:17.20px;display:flex;align-items:center;white-space:nowrap;font-size:10.5px;color:#5a9bd8;font-weight:normal;">土</div>
<div style="left:396.70px;top:276.00px;width:16.50px;height:15.60px;background:linear-gradient(#fdfdfe,#dfe7f1);border:1px solid #b4b8bf;border-radius:1px;"></div>
<div style="left:400.20px;top:278.50px;width:9.50px;height:10.50px;border:1px solid #999;border-radius:3px;"></div>
<div style="left:401.70px;top:283.30px;width:6.50px;height:1.00px;background:#888;"></div>
<div style="left:413.70px;top:292.50px;width:1.00px;height:3.00px;background:#dadada;"></div>
<div style="left:414.70px;top:256.00px;width:41.00px;height:36.50px;background:#e7e7e7;border-right:1px solid #c6c6c6;border-bottom:1px solid #c4c4c4;"></div>
<div style="left:414.70px;top:274.30px;width:41.00px;height:1.00px;background:#d6d6d6;"></div>
<div style="left:414.70px;top:256.00px;width:41.00px;height:18.30px;display:flex;align-items:center;justify-content:center;white-space:nowrap;font-size:9px;color:#e8383d;font-weight:normal;">5</div>
<div style="left:419.70px;top:275.30px;width:17.00px;height:17.20px;display:flex;align-items:center;white-space:nowrap;font-size:10.5px;color:#e8383d;font-weight:normal;">日</div>
<div style="left:437.70px;top:276.00px;width:16.50px;height:15.60px;background:linear-gradient(#fdfdfe,#dfe7f1);border:1px solid #b4b8bf;border-radius:1px;"></div>
<div style="left:441.20px;top:278.50px;width:9.50px;height:10.50px;border:1px solid #999;border-radius:3px;"></div>
<div style="left:442.70px;top:283.30px;width:6.50px;height:1.00px;background:#888;"></div>
<div style="left:454.70px;top:292.50px;width:1.00px;height:3.00px;background:#dadada;"></div>
<div style="left:455.70px;top:256.00px;width:41.00px;height:36.50px;background:#e7e7e7;border-right:1px solid #c6c6c6;border-bottom:1px solid #c4c4c4;"></div>
<div style="left:455.70px;top:274.30px;width:41.00px;height:1.00px;background:#d6d6d6;"></div>
<div style="left:455.70px;top:256.00px;width:41.00px;height:18.30px;display:flex;align-items:center;justify-content:center;white-space:nowrap;font-size:9px;color:#444;font-weight:normal;">6</div>
<div style="left:460.70px;top:275.30px;width:17.00px;height:17.20px;display:flex;align-items:center;white-space:nowrap;font-size:10.5px;color:#444;font-weight:normal;">月</div>
<div style="left:478.70px;top:276.00px;width:16.50px;height:15.60px;background:linear-gradient(#fdfdfe,#dfe7f1);border:1px solid #b4b8bf;border-radius:1px;"></div>
<div style="left:482.20px;top:278.50px;width:9.50px;height:10.50px;border:1px solid #999;border-radius:3px;"></div>
<div style="left:483.70px;top:283.30px;width:6.50px;height:1.00px;background:#888;"></div>
<div style="left:495.70px;top:292.50px;width:1.00px;height:3.00px;background:#dadada;"></div>
<div style="left:496.70px;top:256.00px;width:41.00px;height:36.50px;background:#e7e7e7;border-right:1px solid #c6c6c6;border-bottom:1px solid #c4c4c4;"></div>
<div style="left:496.70px;top:274.30px;width:41.00px;height:1.00px;background:#d6d6d6;"></div>
<div style="left:496.70px;top:256.00px;width:41.00px;height:18.30px;display:flex;align-items:center;justify-content:center;white-space:nowrap;font-size:9px;color:#444;font-weight:normal;">7</div>
<div style="left:501.70px;top:275.30px;width:17.00px;height:17.20px;display:flex;align-items:center;white-space:nowrap;font-size:10.5px;color:#444;font-weight:normal;">火</div>
<div style="left:519.70px;top:276.00px;width:16.50px;height:15.60px;background:linear-gradient(#fdfdfe,#dfe7f1);border:1px solid #b4b8bf;border-radius:1px;"></div>
<div style="left:523.20px;top:278.50px;width:9.50px;height:10.50px;border:1px solid #999;border-radius:3px;"></div>
<div style="left:524.70px;top:283.30px;width:6.50px;height:1.00px;background:#888;"></div>
<div style="left:536.70px;top:292.50px;width:1.00px;height:3.00px;background:#dadada;"></div>
<div style="left:537.70px;top:256.00px;width:41.00px;height:36.50px;background:#e7e7e7;border-right:1px solid #c6c6c6;border-bottom:1px solid #c4c4c4;"></div>
<div style="left:537.70px;top:274.30px;width:41.00px;height:1.00px;background:#d6d6d6;"></div>
<div style="left:537.70px;top:256.00px;width:41.00px;height:18.30px;display:flex;align-items:center;justify-content:center;white-space:nowrap;font-size:9px;color:#444;font-weight:normal;">8</div>
<div style="left:542.70px;top:275.30px;width:17.00px;height:17.20px;display:flex;align-items:center;white-space:nowrap;font-size:10.5px;color:#444;font-weight:normal;">水</div>
<div style="left:560.70px;top:276.00px;width:16.50px;height:15.60px;background:linear-gradient(#fdfdfe,#dfe7f1);border:1px solid #b4b8bf;border-radius:1px;"></div>
<div style="left:564.20px;top:278.50px;width:9.50px;height:10.50px;border:1px solid #999;border-radius:3px;"></div>
<div style="left:565.70px;top:283.30px;width:6.50px;height:1.00px;background:#888;"></div>
<div style="left:577.70px;top:292.50px;width:1.00px;height:3.00px;background:#dadada;"></div>
<div style="left:578.70px;top:256.00px;width:41.00px;height:36.50px;background:#e7e7e7;border-right:1px solid #c6c6c6;border-bottom:1px solid #c4c4c4;"></div>
<div style="left:578.70px;top:274.30px;width:41.00px;height:1.00px;background:#d6d6d6;"></div>
<div style="left:578.70px;top:256.00px;width:41.00px;height:18.30px;display:flex;align-items:center;justify-content:center;white-space:nowrap;font-size:9px;color:#444;font-weight:normal;">9</div>
<div style="left:583.70px;top:275.30px;width:17.00px;height:17.20px;display:flex;align-items:center;white-space:nowrap;font-size:10.5px;color:#444;font-weight:normal;">木</div>
<div style="left:601.70px;top:276.00px;width:16.50px;height:15.60px;background:linear-gradient(#fdfdfe,#dfe7f1);border:1px solid #b4b8bf;border-radius:1px;"></div>
<div style="left:605.20px;top:278.50px;width:9.50px;height:10.50px;border:1px solid #999;border-radius:3px;"></div>
<div style="left:606.70px;top:283.30px;width:6.50px;height:1.00px;background:#888;"></div>
<div style="left:618.70px;top:292.50px;width:1.00px;height:3.00px;background:#dadada;"></div>
<div style="left:619.70px;top:256.00px;width:41.00px;height:36.50px;background:#e7e7e7;border-right:1px solid #c6c6c6;border-bottom:1px solid #c4c4c4;"></div>
<div style="left:619.70px;top:274.30px;width:41.00px;height:1.00px;background:#d6d6d6;"></div>
<div style="left:619.70px;top:256.00px;width:41.00px;height:18.30px;display:flex;align-items:center;justify-content:center;white-space:nowrap;font-size:9px;color:#444;font-weight:normal;">10</div>
<div style="left:624.70px;top:275.30px;width:17.00px;height:17.20px;display:flex;align-items:center;white-space:nowrap;font-size:10.5px;color:#444;font-weight:normal;">金</div>
<div style="left:642.70px;top:276.00px;width:16.50px;height:15.60px;background:linear-gradient(#fdfdfe,#dfe7f1);border:1px solid #b4b8bf;border-radius:1px;"></div>
<div style="left:646.20px;top:278.50px;width:9.50px;height:10.50px;border:1px solid #999;border-radius:3px;"></div>
<div style="left:647.70px;top:283.30px;width:6.50px;height:1.00px;background:#888;"></div>
<div style="left:659.70px;top:292.50px;width:1.00px;height:3.00px;background:#dadada;"></div>
<div style="left:660.70px;top:256.00px;width:41.00px;height:36.50px;background:#e7e7e7;border-right:1px solid #c6c6c6;border-bottom:1px solid #c4c4c4;"></div>
<div style="left:660.70px;top:274.30px;width:41.00px;height:1.00px;background:#d6d6d6;"></div>
<div style="left:660.70px;top:256.00px;width:41.00px;height:18.30px;display:flex;align-items:center;justify-content:center;white-space:nowrap;font-size:9px;color:#5a9bd8;font-weight:normal;">11</div>
<div style="left:665.70px;top:275.30px;width:17.00px;height:17.20px;display:flex;align-items:center;white-space:nowrap;font-size:10.5px;color:#5a9bd8;font-weight:normal;">土</div>
<div style="left:683.70px;top:276.00px;width:16.50px;height:15.60px;background:linear-gradient(#fdfdfe,#dfe7f1);border:1px solid #b4b8bf;border-radius:1px;"></div>
<div style="left:687.20px;top:278.50px;width:9.50px;height:10.50px;border:1px solid #999;border-radius:3px;"></div>
<div style="left:688.70px;top:283.30px;width:6.50px;height:1.00px;background:#888;"></div>
<div style="left:700.70px;top:292.50px;width:1.00px;height:3.00px;background:#dadada;"></div>
<div style="left:701.70px;top:256.00px;width:41.00px;height:36.50px;background:#e7e7e7;border-right:1px solid #c6c6c6;border-bottom:1px solid #c4c4c4;"></div>
<div style="left:701.70px;top:274.30px;width:41.00px;height:1.00px;background:#d6d6d6;"></div>
<div style="left:701.70px;top:256.00px;width:41.00px;height:18.30px;display:flex;align-items:center;justify-content:center;white-space:nowrap;font-size:9px;color:#e8383d;font-weight:normal;">12</div>
<div style="left:706.70px;top:275.30px;width:17.00px;height:17.20px;display:flex;align-items:center;white-space:nowrap;font-size:10.5px;color:#e8383d;font-weight:normal;">日</div>
<div style="left:724.70px;top:276.00px;width:16.50px;height:15.60px;background:linear-gradient(#fdfdfe,#dfe7f1);border:1px solid #b4b8bf;border-radius:1px;"></div>
<div style="left:728.20px;top:278.50px;width:9.50px;height:10.50px;border:1px solid #999;border-radius:3px;"></div>
<div style="left:729.70px;top:283.30px;width:6.50px;height:1.00px;background:#888;"></div>
<div style="left:741.70px;top:292.50px;width:1.00px;height:3.00px;background:#dadada;"></div>
<div style="left:742.70px;top:256.00px;width:41.00px;height:36.50px;background:#e7e7e7;border-right:1px solid #c6c6c6;border-bottom:1px solid #c4c4c4;"></div>
<div style="left:742.70px;top:274.30px;width:41.00px;height:1.00px;background:#d6d6d6;"></div>
<div style="left:765.70px;top:276.00px;width:16.50px;height:15.60px;background:linear-gradient(#fdfdfe,#dfe7f1);border:1px solid #b4b8bf;border-radius:1px;"></div>
<div style="left:769.20px;top:278.50px;width:9.50px;height:10.50px;border:1px solid #999;border-radius:3px;"></div>
<div style="left:770.70px;top:283.30px;width:6.50px;height:1.00px;background:#888;"></div>
<div style="left:782.70px;top:292.50px;width:1.00px;height:3.00px;background:#dadada;"></div>
<div style="left:250.70px;top:292.00px;width:41.00px;height:1.50px;background:#2f8a4e;"></div>
<div style="left:250.20px;top:292.00px;width:1.50px;height:3.50px;background:#2f8a4e;"></div>
<div style="left:290.20px;top:292.00px;width:1.50px;height:3.50px;background:#2f8a4e;"></div>
<div style="left:249.70px;top:256.00px;width:1.70px;height:39.50px;background:#7a7a7a;"></div>
<div style="left:90.50px;top:292.50px;width:1.00px;height:3.00px;background:#d0d0d0;"></div>
<div style="left:143.60px;top:292.50px;width:1.00px;height:3.00px;background:#d0d0d0;"></div>
<div style="left:197.00px;top:292.50px;width:1.00px;height:3.00px;background:#d0d0d0;"></div>
<div style="left:249.70px;top:292.50px;width:1.00px;height:3.00px;background:#d0d0d0;"></div>
<div style="left:91.50px;top:293.00px;width:53.10px;height:6.00px;display:flex;align-items:center;justify-content:center;white-space:nowrap;font-size:7px;color:#888;align-items:flex-start;">日勤(行路)</div>
<div style="left:-1.00px;top:295.50px;width:739.00px;height:41.50px;background:#fff;"></div>
<div style="left:9.00px;top:303.00px;width:78.00px;height:21.00px;display:flex;align-items:center;justify-content:center;white-space:nowrap;background:#93654f;color:#fff;border-radius:3px;font-size:9px;font-weight:bold;box-shadow:0 1px 2px rgba(0,0,0,.35);">集計・チェック</div>
<div style="left:232.50px;top:303.00px;width:52.50px;height:21.40px;display:flex;align-items:center;justify-content:center;white-space:nowrap;background:#93654f;color:#fff;border-radius:3px;font-size:9px;font-weight:bold;box-shadow:0 1px 2px rgba(0,0,0,.35);">締切解除</div>
<div style="left:295.00px;top:303.00px;width:52.50px;height:21.40px;display:flex;align-items:center;justify-content:center;white-space:nowrap;background:#93654f;color:#fff;border-radius:3px;font-size:9px;font-weight:bold;box-shadow:0 1px 2px rgba(0,0,0,.35);">年休抽選</div>
<div style="left:357.60px;top:303.00px;width:53.10px;height:21.40px;display:flex;align-items:center;justify-content:center;white-space:nowrap;background:#93654f;color:#fff;border-radius:3px;font-size:9px;font-weight:bold;box-shadow:0 1px 2px rgba(0,0,0,.35);">自動作成</div>
<div style="left:420.20px;top:303.00px;width:60.80px;height:21.40px;display:flex;align-items:center;justify-content:center;white-space:nowrap;background:#93654f;color:#fff;border-radius:3px;font-size:9px;font-weight:bold;box-shadow:0 1px 2px rgba(0,0,0,.35);">勤務表発表</div>
</div>
</body></html>
